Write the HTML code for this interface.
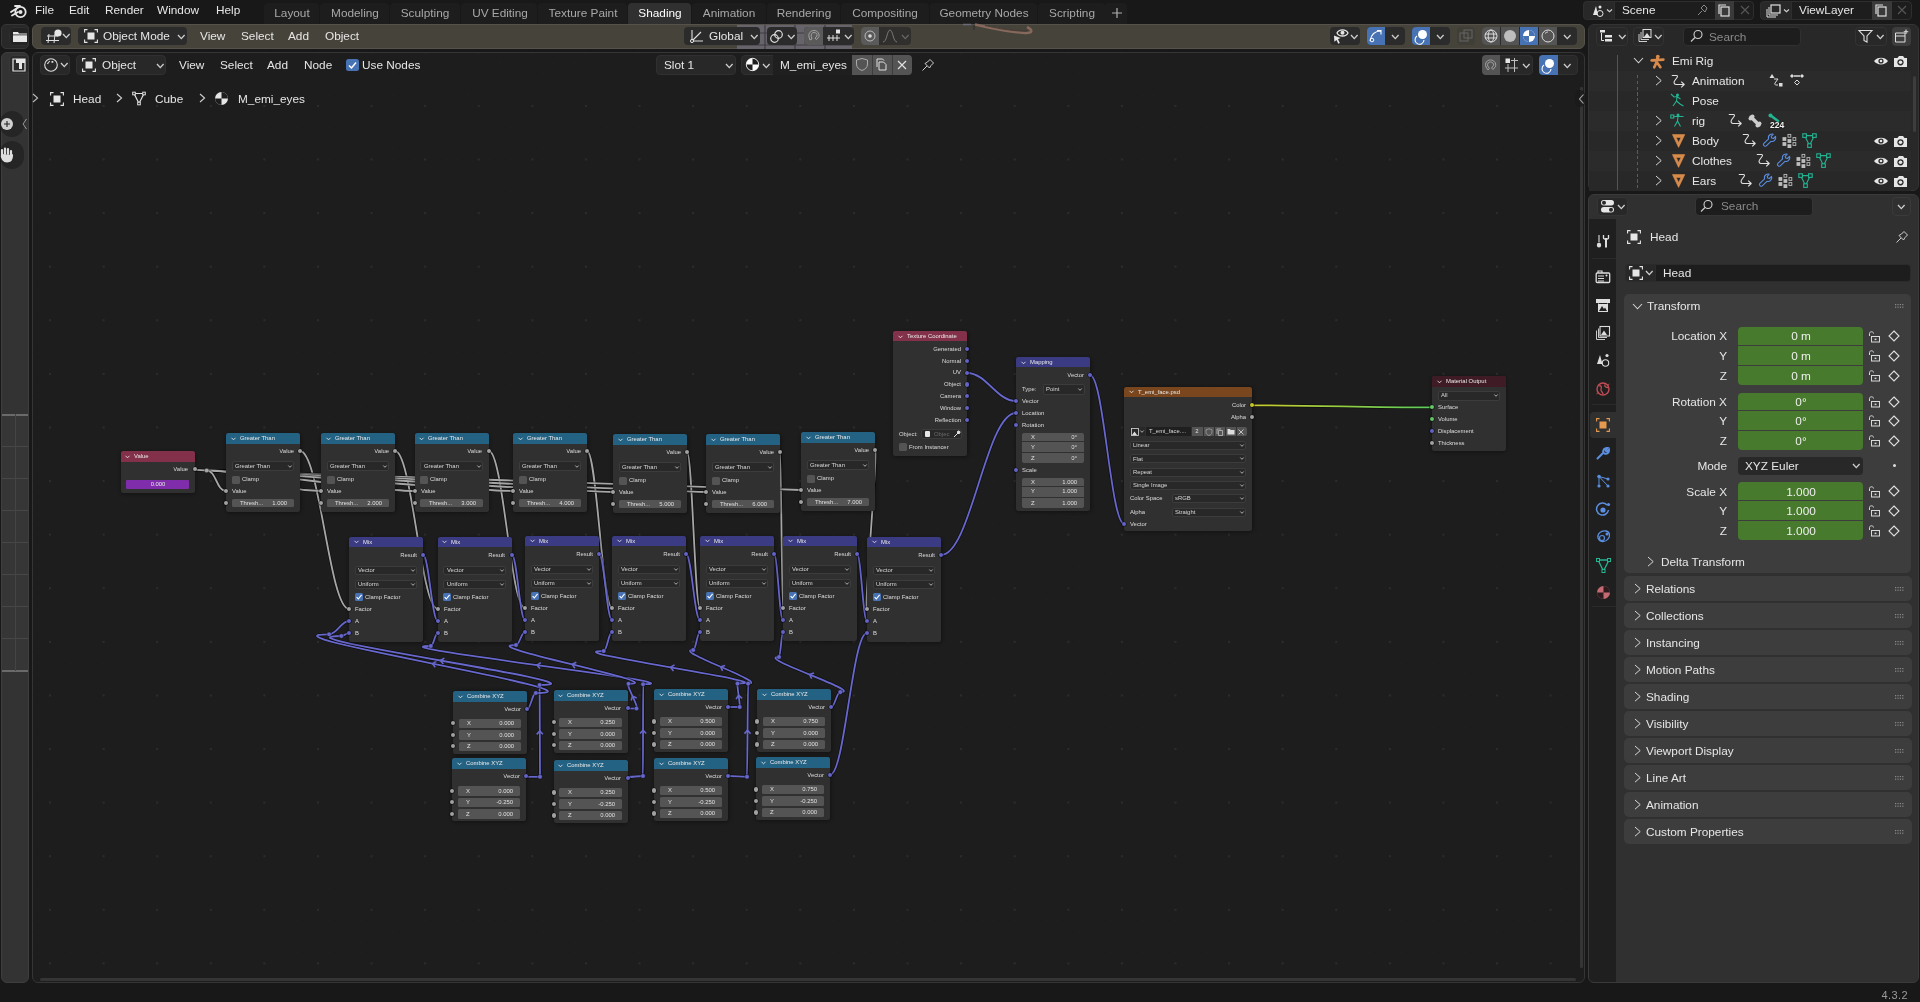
<!DOCTYPE html><html><head><meta charset="utf-8"><style>
*{box-sizing:border-box;margin:0;padding:0}
html,body{width:1920px;height:1002px;overflow:hidden;background:#181818;font-family:"Liberation Sans",sans-serif;color:#e6e6e6;position:relative}
.a{position:absolute}
.t{position:absolute;white-space:nowrap;line-height:1;will-change:transform}
svg{position:absolute;overflow:visible}
</style></head><body>
<svg style="left:10px;top:3px;" width="18" height="17" viewBox="0 0 18 17"><circle cx="10.5" cy="9" r="5.2" fill="none" stroke="#e6e6e6" stroke-width="1.8"/><circle cx="10.5" cy="9" r="2" fill="#e6e6e6"/><path d="M1 9 L8 4.5 M2 12.5 L8 9 M5 3 L10 3" stroke="#e6e6e6" stroke-width="1.8" stroke-linecap="round"/></svg>
<div class="t" style="left:35.30px;top:5.41px;font-size:11.8px;color:#e6e6e6;">File</div>
<div class="t" style="left:69.00px;top:5.41px;font-size:11.8px;color:#e6e6e6;">Edit</div>
<div class="t" style="left:105.00px;top:5.41px;font-size:11.8px;color:#e6e6e6;">Render</div>
<div class="t" style="left:157.00px;top:5.41px;font-size:11.8px;color:#e6e6e6;">Window</div>
<div class="t" style="left:216.00px;top:5.41px;font-size:11.8px;color:#e6e6e6;">Help</div>
<div class="a" style="left:263.9px;top:3px;width:54.7px;height:21px;background:#1d1d1d;border-radius:4px;border-bottom-left-radius:0;border-bottom-right-radius:0"></div>
<div class="t" style="left:291.75px;top:8.21px;font-size:11.8px;color:#a8a8a8;transform:translateX(-50%);">Layout</div>
<div class="a" style="left:319.7px;top:3px;width:68.9px;height:21px;background:#1d1d1d;border-radius:4px;border-bottom-left-radius:0;border-bottom-right-radius:0"></div>
<div class="t" style="left:354.65px;top:8.21px;font-size:11.8px;color:#a8a8a8;transform:translateX(-50%);">Modeling</div>
<div class="a" style="left:390.1px;top:3px;width:69.6px;height:21px;background:#1d1d1d;border-radius:4px;border-bottom-left-radius:0;border-bottom-right-radius:0"></div>
<div class="t" style="left:425.40px;top:8.21px;font-size:11.8px;color:#a8a8a8;transform:translateX(-50%);">Sculpting</div>
<div class="a" style="left:461.2px;top:3px;width:75.8px;height:21px;background:#1d1d1d;border-radius:4px;border-bottom-left-radius:0;border-bottom-right-radius:0"></div>
<div class="t" style="left:499.60px;top:8.21px;font-size:11.8px;color:#a8a8a8;transform:translateX(-50%);">UV Editing</div>
<div class="a" style="left:538.2px;top:3px;width:88.9px;height:21px;background:#1d1d1d;border-radius:4px;border-bottom-left-radius:0;border-bottom-right-radius:0"></div>
<div class="t" style="left:583.15px;top:8.21px;font-size:11.8px;color:#a8a8a8;transform:translateX(-50%);">Texture Paint</div>
<div class="a" style="left:628.1px;top:3px;width:62.8px;height:21px;background:#303030;border-radius:4px;border-bottom-left-radius:0;border-bottom-right-radius:0"></div>
<div class="t" style="left:660.00px;top:8.21px;font-size:11.8px;color:#ffffff;transform:translateX(-50%);">Shading</div>
<div class="a" style="left:691.7px;top:3px;width:73.9px;height:21px;background:#1d1d1d;border-radius:4px;border-bottom-left-radius:0;border-bottom-right-radius:0"></div>
<div class="t" style="left:729.15px;top:8.21px;font-size:11.8px;color:#a8a8a8;transform:translateX(-50%);">Animation</div>
<div class="a" style="left:766.7px;top:3px;width:73.3px;height:21px;background:#1d1d1d;border-radius:4px;border-bottom-left-radius:0;border-bottom-right-radius:0"></div>
<div class="t" style="left:803.85px;top:8.21px;font-size:11.8px;color:#a8a8a8;transform:translateX(-50%);">Rendering</div>
<div class="a" style="left:840.7px;top:3px;width:88.3px;height:21px;background:#1d1d1d;border-radius:4px;border-bottom-left-radius:0;border-bottom-right-radius:0"></div>
<div class="t" style="left:885.35px;top:8.21px;font-size:11.8px;color:#a8a8a8;transform:translateX(-50%);">Compositing</div>
<div class="a" style="left:929.7px;top:3px;width:107.3px;height:21px;background:#1d1d1d;border-radius:4px;border-bottom-left-radius:0;border-bottom-right-radius:0"></div>
<div class="t" style="left:983.85px;top:8.21px;font-size:11.8px;color:#a8a8a8;transform:translateX(-50%);">Geometry Nodes</div>
<div class="a" style="left:1037.7px;top:3px;width:67.3px;height:21px;background:#1d1d1d;border-radius:4px;border-bottom-left-radius:0;border-bottom-right-radius:0"></div>
<div class="t" style="left:1071.85px;top:8.21px;font-size:11.8px;color:#a8a8a8;transform:translateX(-50%);">Scripting</div>
<div class="a" style="left:1105.4px;top:3px;width:22px;height:21px;background:#1d1d1d;border-radius:4px;border-bottom-left-radius:0;border-bottom-right-radius:0"></div>
<svg style="left:1110.7px;top:7px;" width="12" height="12" viewBox="0 0 12 12"><path d="M6 1 V11 M1 6 H11" stroke="#b0b0b0" stroke-width="1.2"/></svg>
<div class="a" style="left:1583px;top:1px;width:171px;height:19px;background:#1d1d1d;border-radius:4px;border:1px solid #2e2e2e"></div>
<div class="a" style="left:1583px;top:1px;width:32px;height:19px;background:#282828;border-radius:4px;border:1px solid #2e2e2e;border-top-right-radius:0;border-bottom-right-radius:0"></div>
<svg style="left:1590px;top:3px;" width="20" height="15" viewBox="0 0 20 15"><path d="M3 12 L6 3 L8 12 Z" fill="#e6e6e6"/><circle cx="10" cy="4" r="1.5" fill="#e6e6e6"/><circle cx="10" cy="10.5" r="3" fill="none" stroke="#e6e6e6" stroke-width="1"/></svg>
<svg style="left:1605.5px;top:7.5px;" width="7.0" height="5.0" viewBox="0 0 7.0 5.0"><path d="M1 1.5 L3.5 3.75 L6.0 1.5" fill="none" stroke="#d0d0d0" stroke-width="1.1"/></svg>
<div class="t" style="left:1622.00px;top:5.41px;font-size:11.8px;color:#e6e6e6;">Scene</div>
<svg style="left:1696px;top:3px;" width="14" height="14" viewBox="0 0 14 14"><path d="M2 12 L6 8 M5 5 L9 9 L11 5 L8 2 Z" stroke="#888" fill="none" stroke-width="1"/></svg>
<div class="a" style="left:1715px;top:1px;width:19px;height:19px;background:#3a3a3a;border-radius:0px;"></div>
<svg style="left:1717px;top:3px;" width="15" height="15" viewBox="0 0 15 15"><rect x="4" y="4" width="8" height="9" fill="none" stroke="#e0e0e0" stroke-width="1.2"/><path d="M2 11 V2 H9" fill="none" stroke="#e0e0e0" stroke-width="1.2"/></svg>
<svg style="left:1740px;top:5px;" width="10" height="10" viewBox="0 0 10 10"><path d="M1 1 L9 9 M9 1 L1 9" stroke="#555" stroke-width="1.2"/></svg>
<div class="a" style="left:1760px;top:1px;width:152px;height:19px;background:#1d1d1d;border-radius:4px;border:1px solid #2e2e2e"></div>
<div class="a" style="left:1760px;top:1px;width:32px;height:19px;background:#282828;border-radius:4px;border:1px solid #2e2e2e;border-top-right-radius:0;border-bottom-right-radius:0"></div>
<svg style="left:1765px;top:3px;" width="18" height="15" viewBox="0 0 18 15"><rect x="6" y="2" width="9" height="8" fill="none" stroke="#e0e0e0" stroke-width="1.2"/><path d="M4 4 V12 H13 M2 6 V14 H11" fill="none" stroke="#e0e0e0" stroke-width="1"/></svg>
<svg style="left:1782.5px;top:7.5px;" width="7.0" height="5.0" viewBox="0 0 7.0 5.0"><path d="M1 1.5 L3.5 3.75 L6.0 1.5" fill="none" stroke="#d0d0d0" stroke-width="1.1"/></svg>
<div class="t" style="left:1799.00px;top:5.41px;font-size:11.8px;color:#e6e6e6;">ViewLayer</div>
<div class="a" style="left:1872px;top:1px;width:20px;height:19px;background:#3a3a3a;border-radius:0px;"></div>
<svg style="left:1874px;top:3px;" width="15" height="15" viewBox="0 0 15 15"><rect x="4" y="4" width="8" height="9" fill="none" stroke="#e0e0e0" stroke-width="1.2"/><path d="M2 11 V2 H9" fill="none" stroke="#e0e0e0" stroke-width="1.2"/></svg>
<svg style="left:1897px;top:5px;" width="10" height="10" viewBox="0 0 10 10"><path d="M1 1 L9 9 M9 1 L1 9" stroke="#555" stroke-width="1.2"/></svg>
<div class="a" style="left:1px;top:24px;width:28px;height:25px;background:#282828;border-radius:5px;border:1px solid #363636"></div>
<div class="a" style="left:9px;top:27px;width:20px;height:19px;background:#232323;border-radius:4px;border:1px solid #2e2e2e"></div>
<svg style="left:12px;top:29px;" width="16" height="15" viewBox="0 0 16 15"><path d="M1 3 H6 L7 4.5 H15 V13 H1 Z" fill="#e6e6e6"/><rect x="1" y="5.5" width="14" height="0.8" fill="#232323"/></svg>
<div class="a" style="left:32px;top:24px;width:1553px;height:25px;background:#46443a;border-radius:6px;border:1px solid #54524a"></div>
<div class="a" style="left:1px;top:52px;width:28px;height:931px;background:#333333;border-radius:6px;border:1px solid #3e3e3e"></div>
<div class="a" style="left:9px;top:55px;width:20px;height:19px;background:#2a2a2a;border-radius:4px;border:1px solid #383838"></div>
<svg style="left:11px;top:57px;" width="16" height="15" viewBox="0 0 16 15"><path d="M2 2 H14 V14 H2 Z" fill="none" stroke="#e6e6e6" stroke-width="1.2"/><path d="M5 2 H14 V6 H11 V12 H8 V6 H5 Z" fill="#e6e6e6"/></svg>
<div class="a" style="left:32px;top:52px;width:1553px;height:931px;background:#1d1d1d;border-radius:6px;border:1px solid #353535;background-image:radial-gradient(circle at 50% 50%, #2c2c2c 0.9px, rgba(0,0,0,0) 1.4px),radial-gradient(circle at 50% 50%, #222222 0.5px, rgba(0,0,0,0) 0.9px);background-size:53.6px 53.6px,10.72px 10.72px;background-position:-9.8px -27.5px,0.92px -6.06px"></div>
<div class="a" style="left:1588px;top:24px;width:331px;height:167px;background:#282828;border-radius:6px;border:1px solid #333"></div>
<div class="a" style="left:1588px;top:194px;width:331px;height:789px;background:#303030;border-radius:6px;border:1px solid #3a3a3a"></div>
<div class="t" style="left:1908.00px;top:989.69px;font-size:11px;color:#9a9a9a;transform:translateX(-100%);letter-spacing:0.4px">4.3.2</div>
<div class="a" style="left:32px;top:52px;width:1553px;height:931px;overflow:hidden;border-radius:6px"><div class="a" style="left:-32px;top:-52px;width:1920px;height:1002px">
<svg style="left:0;top:0" width="1920" height="1002" viewBox="0 0 1920 1002"><path d="M300.00 451.00 C319.60 451.00 329.40 609.00 349.00 609.00" fill="none" stroke="rgba(0,0,0,0.55)" stroke-width="3.2"/><path d="M300.00 451.00 C319.60 451.00 329.40 609.00 349.00 609.00" fill="none" stroke="#a6a6a6" stroke-width="1.8"/><path d="M395.00 451.00 C412.12 451.00 420.68 609.00 437.80 609.00" fill="none" stroke="rgba(0,0,0,0.55)" stroke-width="3.2"/><path d="M395.00 451.00 C412.12 451.00 420.68 609.00 437.80 609.00" fill="none" stroke="#a6a6a6" stroke-width="1.8"/><path d="M488.80 451.00 C503.28 451.00 510.52 608.00 525.00 608.00" fill="none" stroke="rgba(0,0,0,0.55)" stroke-width="3.2"/><path d="M488.80 451.00 C503.28 451.00 510.52 608.00 525.00 608.00" fill="none" stroke="#a6a6a6" stroke-width="1.8"/><path d="M587.00 451.00 C597.00 451.00 602.00 608.00 612.00 608.00" fill="none" stroke="rgba(0,0,0,0.55)" stroke-width="3.2"/><path d="M587.00 451.00 C597.00 451.00 602.00 608.00 612.00 608.00" fill="none" stroke="#a6a6a6" stroke-width="1.8"/><path d="M687.00 452.00 C692.20 452.00 694.80 608.00 700.00 608.00" fill="none" stroke="rgba(0,0,0,0.55)" stroke-width="3.2"/><path d="M687.00 452.00 C692.20 452.00 694.80 608.00 700.00 608.00" fill="none" stroke="#a6a6a6" stroke-width="1.8"/><path d="M780.00 452.00 C781.20 452.00 781.80 608.00 783.00 608.00" fill="none" stroke="rgba(0,0,0,0.55)" stroke-width="3.2"/><path d="M780.00 452.00 C781.20 452.00 781.80 608.00 783.00 608.00" fill="none" stroke="#a6a6a6" stroke-width="1.8"/><path d="M875.00 450.00 C878.20 450.00 863.80 609.00 867.00 609.00" fill="none" stroke="rgba(0,0,0,0.55)" stroke-width="3.2"/><path d="M875.00 450.00 C878.20 450.00 863.80 609.00 867.00 609.00" fill="none" stroke="#a6a6a6" stroke-width="1.8"/><path d="M195.20 469.80 C199.80 469.80 202.10 470.50 206.70 470.50" fill="none" stroke="rgba(0,0,0,0.55)" stroke-width="3.2"/><path d="M195.20 469.80 C199.80 469.80 202.10 470.50 206.70 470.50" fill="none" stroke="#a6a6a6" stroke-width="1.8"/><path d="M206.70 470.50 C251.70 470.50 756.00 490.00 801.00 490.00" fill="none" stroke="rgba(0,0,0,0.55)" stroke-width="3.2"/><path d="M206.70 470.50 C251.70 470.50 756.00 490.00 801.00 490.00" fill="none" stroke="#a6a6a6" stroke-width="1.8"/><path d="M206.70 470.50 C251.70 470.50 661.00 492.00 706.00 492.00" fill="none" stroke="rgba(0,0,0,0.55)" stroke-width="3.2"/><path d="M206.70 470.50 C251.70 470.50 661.00 492.00 706.00 492.00" fill="none" stroke="#a6a6a6" stroke-width="1.8"/><path d="M206.70 470.50 C251.70 470.50 568.00 492.00 613.00 492.00" fill="none" stroke="rgba(0,0,0,0.55)" stroke-width="3.2"/><path d="M206.70 470.50 C251.70 470.50 568.00 492.00 613.00 492.00" fill="none" stroke="#a6a6a6" stroke-width="1.8"/><path d="M206.70 470.50 C251.70 470.50 468.00 491.00 513.00 491.00" fill="none" stroke="rgba(0,0,0,0.55)" stroke-width="3.2"/><path d="M206.70 470.50 C251.70 470.50 468.00 491.00 513.00 491.00" fill="none" stroke="#a6a6a6" stroke-width="1.8"/><path d="M206.70 470.50 C251.70 470.50 369.80 491.00 414.80 491.00" fill="none" stroke="rgba(0,0,0,0.55)" stroke-width="3.2"/><path d="M206.70 470.50 C251.70 470.50 369.80 491.00 414.80 491.00" fill="none" stroke="#a6a6a6" stroke-width="1.8"/><path d="M206.70 470.50 C251.70 470.50 276.00 491.00 321.00 491.00" fill="none" stroke="rgba(0,0,0,0.55)" stroke-width="3.2"/><path d="M206.70 470.50 C251.70 470.50 276.00 491.00 321.00 491.00" fill="none" stroke="#a6a6a6" stroke-width="1.8"/><path d="M206.70 470.50 C216.35 470.50 216.35 491.00 226.00 491.00" fill="none" stroke="rgba(0,0,0,0.55)" stroke-width="3.2"/><path d="M206.70 470.50 C216.35 470.50 216.35 491.00 226.00 491.00" fill="none" stroke="#a6a6a6" stroke-width="1.8"/><path d="M423.00 555.00 C428.92 555.00 431.88 621.00 437.80 621.00" fill="none" stroke="rgba(0,0,0,0.55)" stroke-width="3.2"/><path d="M423.00 555.00 C428.92 555.00 431.88 621.00 437.80 621.00" fill="none" stroke="#6767cc" stroke-width="1.8"/><path d="M511.80 555.00 C517.08 555.00 519.72 620.00 525.00 620.00" fill="none" stroke="rgba(0,0,0,0.55)" stroke-width="3.2"/><path d="M511.80 555.00 C517.08 555.00 519.72 620.00 525.00 620.00" fill="none" stroke="#6767cc" stroke-width="1.8"/><path d="M599.00 554.00 C604.20 554.00 606.80 620.00 612.00 620.00" fill="none" stroke="rgba(0,0,0,0.55)" stroke-width="3.2"/><path d="M599.00 554.00 C604.20 554.00 606.80 620.00 612.00 620.00" fill="none" stroke="#6767cc" stroke-width="1.8"/><path d="M686.00 554.00 C691.60 554.00 694.40 620.00 700.00 620.00" fill="none" stroke="rgba(0,0,0,0.55)" stroke-width="3.2"/><path d="M686.00 554.00 C691.60 554.00 694.40 620.00 700.00 620.00" fill="none" stroke="#6767cc" stroke-width="1.8"/><path d="M774.00 554.00 C777.60 554.00 779.40 620.00 783.00 620.00" fill="none" stroke="rgba(0,0,0,0.55)" stroke-width="3.2"/><path d="M774.00 554.00 C777.60 554.00 779.40 620.00 783.00 620.00" fill="none" stroke="#6767cc" stroke-width="1.8"/><path d="M857.00 554.00 C861.00 554.00 863.00 621.00 867.00 621.00" fill="none" stroke="rgba(0,0,0,0.55)" stroke-width="3.2"/><path d="M857.00 554.00 C861.00 554.00 863.00 621.00 867.00 621.00" fill="none" stroke="#6767cc" stroke-width="1.8"/><path d="M941.00 555.00 C971.00 555.00 986.00 413.00 1016.00 413.00" fill="none" stroke="rgba(0,0,0,0.55)" stroke-width="3.2"/><path d="M941.00 555.00 C971.00 555.00 986.00 413.00 1016.00 413.00" fill="none" stroke="#6767cc" stroke-width="1.8"/><path d="M967.00 373.00 C986.60 373.00 996.40 401.00 1016.00 401.00" fill="none" stroke="rgba(0,0,0,0.55)" stroke-width="3.2"/><path d="M967.00 373.00 C986.60 373.00 996.40 401.00 1016.00 401.00" fill="none" stroke="#6767cc" stroke-width="1.8"/><path d="M1090.00 375.00 C1103.72 375.00 1110.58 524.00 1124.30 524.00" fill="none" stroke="rgba(0,0,0,0.55)" stroke-width="3.2"/><path d="M1090.00 375.00 C1103.72 375.00 1110.58 524.00 1124.30 524.00" fill="none" stroke="#6767cc" stroke-width="1.8"/><defs><linearGradient id="cg" x1="1252" y1="0" x2="1432" y2="0" gradientUnits="userSpaceOnUse"><stop offset="0" stop-color="#cccc2e"/><stop offset="1" stop-color="#5ccc5c"/></linearGradient></defs><path d="M1252.30 405.30 C1324.26 405.30 1360.24 407.40 1432.20 407.40" fill="none" stroke="rgba(0,0,0,0.55)" stroke-width="3.2"/><path d="M1252.30 405.30 C1324.26 405.30 1360.24 407.40 1432.20 407.40" fill="none" stroke="url(#cg)" stroke-width="1.8"/><path d="M329.10 634.30 C337.06 634.30 341.04 621.00 349.00 621.00" fill="none" stroke="rgba(0,0,0,0.55)" stroke-width="3.2"/><path d="M329.10 634.30 C337.06 634.30 341.04 621.00 349.00 621.00" fill="none" stroke="#6767cc" stroke-width="1.8"/><path d="M341.30 636.00 C344.38 636.00 345.92 633.00 349.00 633.00" fill="none" stroke="rgba(0,0,0,0.55)" stroke-width="3.2"/><path d="M341.30 636.00 C344.38 636.00 345.92 633.00 349.00 633.00" fill="none" stroke="#6767cc" stroke-width="1.8"/><path d="M527.00 709.50 C530.52 709.50 532.28 693.00 535.80 693.00" fill="none" stroke="rgba(0,0,0,0.55)" stroke-width="3.2"/><path d="M527.00 709.50 C530.52 709.50 532.28 693.00 535.80 693.00" fill="none" stroke="#6767cc" stroke-width="1.8"/><path d="M526.00 776.80 C531.60 776.80 534.40 776.80 540.00 776.80" fill="none" stroke="rgba(0,0,0,0.55)" stroke-width="3.2"/><path d="M526.00 776.80 C531.60 776.80 534.40 776.80 540.00 776.80" fill="none" stroke="#6767cc" stroke-width="1.8"/><path d="M540.00 776.80 C540.16 776.80 539.44 685.00 539.60 685.00" fill="none" stroke="rgba(0,0,0,0.55)" stroke-width="3.2"/><path d="M540.00 776.80 C540.16 776.80 539.44 685.00 539.60 685.00" fill="none" stroke="#6767cc" stroke-width="1.8"/><path d="M542.85 734.34 L539.80 730.90 L536.79 734.38" fill="none" stroke="#6767cc" stroke-width="1.6"/><path d="M535.80 693.00 C618.48 693.00 246.42 634.30 329.10 634.30" fill="none" stroke="rgba(0,0,0,0.55)" stroke-width="3.2"/><path d="M535.80 693.00 C618.48 693.00 246.42 634.30 329.10 634.30" fill="none" stroke="#6767cc" stroke-width="1.8"/><path d="M436.44 661.36 L432.45 663.65 L435.24 667.31" fill="none" stroke="#6767cc" stroke-width="1.6"/><path d="M539.60 685.00 C618.92 685.00 261.98 636.00 341.30 636.00" fill="none" stroke="rgba(0,0,0,0.55)" stroke-width="3.2"/><path d="M539.60 685.00 C618.92 685.00 261.98 636.00 341.30 636.00" fill="none" stroke="#6767cc" stroke-width="1.8"/><path d="M444.38 658.11 L440.45 660.50 L443.33 664.09" fill="none" stroke="#6767cc" stroke-width="1.6"/><path d="M430.80 646.00 C433.60 646.00 435.00 633.00 437.80 633.00" fill="none" stroke="rgba(0,0,0,0.55)" stroke-width="3.2"/><path d="M430.80 646.00 C433.60 646.00 435.00 633.00 437.80 633.00" fill="none" stroke="#6767cc" stroke-width="1.8"/><path d="M516.00 645.00 C519.60 645.00 521.40 632.00 525.00 632.00" fill="none" stroke="rgba(0,0,0,0.55)" stroke-width="3.2"/><path d="M516.00 645.00 C519.60 645.00 521.40 632.00 525.00 632.00" fill="none" stroke="#6767cc" stroke-width="1.8"/><path d="M628.00 708.50 C631.40 708.50 633.10 708.50 636.50 708.50" fill="none" stroke="rgba(0,0,0,0.55)" stroke-width="3.2"/><path d="M628.00 708.50 C631.40 708.50 633.10 708.50 636.50 708.50" fill="none" stroke="#6767cc" stroke-width="1.8"/><path d="M636.50 708.50 C639.70 708.50 625.30 683.80 628.50 683.80" fill="none" stroke="rgba(0,0,0,0.55)" stroke-width="3.2"/><path d="M636.50 708.50 C639.70 708.50 625.30 683.80 628.50 683.80" fill="none" stroke="#6767cc" stroke-width="1.8"/><path d="M636.69 698.05 L632.50 696.15 L631.17 700.55" fill="none" stroke="#6767cc" stroke-width="1.6"/><path d="M628.00 777.00 C634.00 777.00 637.00 776.00 643.00 776.00" fill="none" stroke="rgba(0,0,0,0.55)" stroke-width="3.2"/><path d="M628.00 777.00 C634.00 777.00 637.00 776.00 643.00 776.00" fill="none" stroke="#6767cc" stroke-width="1.8"/><path d="M643.00 776.00 C643.04 776.00 643.06 684.20 643.10 684.20" fill="none" stroke="rgba(0,0,0,0.55)" stroke-width="3.2"/><path d="M643.00 776.00 C643.04 776.00 643.06 684.20 643.10 684.20" fill="none" stroke="#6767cc" stroke-width="1.8"/><path d="M646.08 733.56 L643.05 730.10 L640.01 733.56" fill="none" stroke="#6767cc" stroke-width="1.6"/><path d="M643.10 684.20 C706.79 684.20 367.11 646.00 430.80 646.00" fill="none" stroke="rgba(0,0,0,0.55)" stroke-width="3.2"/><path d="M643.10 684.20 C706.79 684.20 367.11 646.00 430.80 646.00" fill="none" stroke="#6767cc" stroke-width="1.8"/><path d="M540.79 662.57 L536.95 665.10 L539.96 668.58" fill="none" stroke="#6767cc" stroke-width="1.6"/><path d="M628.50 683.80 C673.50 683.80 471.00 645.00 516.00 645.00" fill="none" stroke="rgba(0,0,0,0.55)" stroke-width="3.2"/><path d="M628.50 683.80 C673.50 683.80 471.00 645.00 516.00 645.00" fill="none" stroke="#6767cc" stroke-width="1.8"/><path d="M576.33 662.28 L572.25 664.40 L574.88 668.17" fill="none" stroke="#6767cc" stroke-width="1.6"/><path d="M603.70 651.00 C607.02 651.00 608.68 632.00 612.00 632.00" fill="none" stroke="rgba(0,0,0,0.55)" stroke-width="3.2"/><path d="M603.70 651.00 C607.02 651.00 608.68 632.00 612.00 632.00" fill="none" stroke="#6767cc" stroke-width="1.8"/><path d="M693.20 650.00 C695.92 650.00 697.28 632.00 700.00 632.00" fill="none" stroke="rgba(0,0,0,0.55)" stroke-width="3.2"/><path d="M693.20 650.00 C695.92 650.00 697.28 632.00 700.00 632.00" fill="none" stroke="#6767cc" stroke-width="1.8"/><path d="M728.00 707.00 C732.68 707.00 735.02 707.00 739.70 707.00" fill="none" stroke="rgba(0,0,0,0.55)" stroke-width="3.2"/><path d="M728.00 707.00 C732.68 707.00 735.02 707.00 739.70 707.00" fill="none" stroke="#6767cc" stroke-width="1.8"/><path d="M739.70 707.00 C740.58 707.00 736.62 683.60 737.50 683.60" fill="none" stroke="rgba(0,0,0,0.55)" stroke-width="3.2"/><path d="M739.70 707.00 C740.58 707.00 736.62 683.60 737.50 683.60" fill="none" stroke="#6767cc" stroke-width="1.8"/><path d="M742.06 698.33 L738.60 695.30 L736.04 699.12" fill="none" stroke="#6767cc" stroke-width="1.6"/><path d="M728.00 776.00 C735.60 776.00 739.40 776.80 747.00 776.80" fill="none" stroke="rgba(0,0,0,0.55)" stroke-width="3.2"/><path d="M728.00 776.00 C735.60 776.00 739.40 776.80 747.00 776.80" fill="none" stroke="#6767cc" stroke-width="1.8"/><path d="M747.00 776.80 C747.44 776.80 747.66 683.60 748.10 683.60" fill="none" stroke="rgba(0,0,0,0.55)" stroke-width="3.2"/><path d="M747.00 776.80 C747.44 776.80 747.66 683.60 748.10 683.60" fill="none" stroke="#6767cc" stroke-width="1.8"/><path d="M750.56 733.68 L747.55 730.20 L744.49 733.64" fill="none" stroke="#6767cc" stroke-width="1.6"/><path d="M737.50 683.60 C791.02 683.60 550.18 651.00 603.70 651.00" fill="none" stroke="rgba(0,0,0,0.55)" stroke-width="3.2"/><path d="M737.50 683.60 C791.02 683.60 550.18 651.00 603.70 651.00" fill="none" stroke="#6767cc" stroke-width="1.8"/><path d="M674.53 664.90 L670.60 667.30 L673.49 670.88" fill="none" stroke="#6767cc" stroke-width="1.6"/><path d="M748.10 683.60 C770.06 683.60 671.24 650.00 693.20 650.00" fill="none" stroke="rgba(0,0,0,0.55)" stroke-width="3.2"/><path d="M748.10 683.60 C770.06 683.60 671.24 650.00 693.20 650.00" fill="none" stroke="#6767cc" stroke-width="1.8"/><path d="M725.03 665.41 L720.65 666.80 L722.60 670.96" fill="none" stroke="#6767cc" stroke-width="1.6"/><path d="M779.00 657.00 C780.60 657.00 781.40 632.00 783.00 632.00" fill="none" stroke="rgba(0,0,0,0.55)" stroke-width="3.2"/><path d="M779.00 657.00 C780.60 657.00 781.40 632.00 783.00 632.00" fill="none" stroke="#6767cc" stroke-width="1.8"/><path d="M831.00 707.40 C834.72 707.40 836.58 692.10 840.30 692.10" fill="none" stroke="rgba(0,0,0,0.55)" stroke-width="3.2"/><path d="M831.00 707.40 C834.72 707.40 836.58 692.10 840.30 692.10" fill="none" stroke="#6767cc" stroke-width="1.8"/><path d="M840.30 692.10 C864.82 692.10 754.48 657.00 779.00 657.00" fill="none" stroke="rgba(0,0,0,0.55)" stroke-width="3.2"/><path d="M840.30 692.10 C864.82 692.10 754.48 657.00 779.00 657.00" fill="none" stroke="#6767cc" stroke-width="1.8"/><path d="M814.00 673.05 L809.65 674.55 L811.70 678.67" fill="none" stroke="#6767cc" stroke-width="1.6"/><path d="M830.00 775.00 C844.80 775.00 852.20 633.00 867.00 633.00" fill="none" stroke="rgba(0,0,0,0.55)" stroke-width="3.2"/><path d="M830.00 775.00 C844.80 775.00 852.20 633.00 867.00 633.00" fill="none" stroke="#6767cc" stroke-width="1.8"/><circle cx="206.7" cy="470.5" r="2.3" fill="#a6a6a6" stroke="rgba(0,0,0,0.5)" stroke-width="0.7"/><circle cx="329.1" cy="634.3" r="2.3" fill="#6767cc" stroke="rgba(0,0,0,0.5)" stroke-width="0.7"/><circle cx="341.3" cy="636" r="2.3" fill="#6767cc" stroke="rgba(0,0,0,0.5)" stroke-width="0.7"/><circle cx="535.8" cy="693" r="2.3" fill="#6767cc" stroke="rgba(0,0,0,0.5)" stroke-width="0.7"/><circle cx="539.6" cy="685" r="2.3" fill="#6767cc" stroke="rgba(0,0,0,0.5)" stroke-width="0.7"/><circle cx="540" cy="776.8" r="2.3" fill="#6767cc" stroke="rgba(0,0,0,0.5)" stroke-width="0.7"/><circle cx="430.8" cy="646" r="2.3" fill="#6767cc" stroke="rgba(0,0,0,0.5)" stroke-width="0.7"/><circle cx="516" cy="645" r="2.3" fill="#6767cc" stroke="rgba(0,0,0,0.5)" stroke-width="0.7"/><circle cx="636.5" cy="708.5" r="2.3" fill="#6767cc" stroke="rgba(0,0,0,0.5)" stroke-width="0.7"/><circle cx="628.5" cy="683.8" r="2.3" fill="#6767cc" stroke="rgba(0,0,0,0.5)" stroke-width="0.7"/><circle cx="643.1" cy="684.2" r="2.3" fill="#6767cc" stroke="rgba(0,0,0,0.5)" stroke-width="0.7"/><circle cx="643" cy="776" r="2.3" fill="#6767cc" stroke="rgba(0,0,0,0.5)" stroke-width="0.7"/><circle cx="603.7" cy="651" r="2.3" fill="#6767cc" stroke="rgba(0,0,0,0.5)" stroke-width="0.7"/><circle cx="693.2" cy="650" r="2.3" fill="#6767cc" stroke="rgba(0,0,0,0.5)" stroke-width="0.7"/><circle cx="739.7" cy="707" r="2.3" fill="#6767cc" stroke="rgba(0,0,0,0.5)" stroke-width="0.7"/><circle cx="737.5" cy="683.6" r="2.3" fill="#6767cc" stroke="rgba(0,0,0,0.5)" stroke-width="0.7"/><circle cx="748.1" cy="683.6" r="2.3" fill="#6767cc" stroke="rgba(0,0,0,0.5)" stroke-width="0.7"/><circle cx="747" cy="776.8" r="2.3" fill="#6767cc" stroke="rgba(0,0,0,0.5)" stroke-width="0.7"/><circle cx="779" cy="657" r="2.3" fill="#6767cc" stroke="rgba(0,0,0,0.5)" stroke-width="0.7"/><circle cx="840.3" cy="692.1" r="2.3" fill="#6767cc" stroke="rgba(0,0,0,0.5)" stroke-width="0.7"/></svg>
<div class="a" style="left:119.60px;top:450.50px;width:76.70px;height:44.20px;background:rgba(0,0,0,0.25);border-radius:5px;filter:blur(1.5px)"></div>
<div class="a" style="left:120.60px;top:451.00px;width:74.20px;height:41.70px;background:#303030;border-radius:2.5px;"></div>
<div class="a" style="left:120.60px;top:451.00px;width:74.20px;height:10.60px;background:#83314a;border-radius:2.5px;border-bottom-left-radius:0;border-bottom-right-radius:0"></div>
<svg style="left:125.10px;top:454.70px" width="5" height="4"><path d="M0.5 0.8 L2.5 2.8 L4.5 0.8" fill="none" stroke="#e8e8e8" stroke-width="0.85"/></svg>
<div class="t" style="left:134.10px;top:453.86px;font-size:5.9px;color:#e8e8e8;">Value</div>
<div class="t" style="left:188.30px;top:466.76px;font-size:5.9px;color:#dcdcdc;transform:translateX(-100%);">Value</div>
<div class="a" style="left:126.00px;top:480.00px;width:63.20px;height:8.75px;background:#7f2dab;border-radius:1px;"></div>
<div class="t" style="left:157.70px;top:482.16px;font-size:5.9px;color:#e8e8e8;transform:translateX(-50%);">0.000</div>
<div class="a" style="left:225.00px;top:432.50px;width:76.50px;height:81.50px;background:rgba(0,0,0,0.25);border-radius:5px;filter:blur(1.5px)"></div>
<div class="a" style="left:226.00px;top:433.00px;width:74.00px;height:79.00px;background:#303030;border-radius:2.5px;"></div>
<div class="a" style="left:226.00px;top:433.00px;width:74.00px;height:10.60px;background:#246283;border-radius:2.5px;border-bottom-left-radius:0;border-bottom-right-radius:0"></div>
<svg style="left:230.50px;top:436.70px" width="5" height="4"><path d="M0.5 0.8 L2.5 2.8 L4.5 0.8" fill="none" stroke="#e8e8e8" stroke-width="0.85"/></svg>
<div class="t" style="left:239.50px;top:435.86px;font-size:5.9px;color:#e8e8e8;">Greater Than</div>
<div class="t" style="left:293.50px;top:448.76px;font-size:5.9px;color:#dcdcdc;transform:translateX(-100%);">Value</div>
<div class="a" style="left:231.60px;top:461.40px;width:62.80px;height:9.40px;background:#282828;border-radius:2px;border:0.8px solid #3c3c3c"></div>
<div class="t" style="left:235.10px;top:463.86px;font-size:5.9px;color:#d8d8d8;">Greater Than</div>
<svg style="left:287.90px;top:464.60px" width="4" height="3"><path d="M0.3 0.5 L2 2.3 L3.7 0.5" fill="none" stroke="#cfcfcf" stroke-width="0.8"/></svg>
<div class="a" style="left:231.60px;top:475.50px;width:8.00px;height:8.00px;background:#545454;border-radius:1.5px;"></div>
<div class="t" style="left:241.60px;top:477.46px;font-size:5.9px;color:#dcdcdc;">Clamp</div>
<div class="t" style="left:232.00px;top:488.76px;font-size:5.9px;color:#dcdcdc;">Value</div>
<div class="a" style="left:231.60px;top:499.00px;width:62.80px;height:8.40px;background:#545454;border-radius:1.5px;"></div>
<div class="t" style="left:240.39px;top:500.96px;font-size:5.9px;color:#e0e0e0;">Thresh...</div>
<div class="t" style="left:287.40px;top:500.96px;font-size:5.9px;color:#e0e0e0;transform:translateX(-100%);">1.000</div>
<div class="a" style="left:320.00px;top:432.50px;width:76.50px;height:81.50px;background:rgba(0,0,0,0.25);border-radius:5px;filter:blur(1.5px)"></div>
<div class="a" style="left:321.00px;top:433.00px;width:74.00px;height:79.00px;background:#303030;border-radius:2.5px;"></div>
<div class="a" style="left:321.00px;top:433.00px;width:74.00px;height:10.60px;background:#246283;border-radius:2.5px;border-bottom-left-radius:0;border-bottom-right-radius:0"></div>
<svg style="left:325.50px;top:436.70px" width="5" height="4"><path d="M0.5 0.8 L2.5 2.8 L4.5 0.8" fill="none" stroke="#e8e8e8" stroke-width="0.85"/></svg>
<div class="t" style="left:334.50px;top:435.86px;font-size:5.9px;color:#e8e8e8;">Greater Than</div>
<div class="t" style="left:388.50px;top:448.76px;font-size:5.9px;color:#dcdcdc;transform:translateX(-100%);">Value</div>
<div class="a" style="left:326.60px;top:461.40px;width:62.80px;height:9.40px;background:#282828;border-radius:2px;border:0.8px solid #3c3c3c"></div>
<div class="t" style="left:330.10px;top:463.86px;font-size:5.9px;color:#d8d8d8;">Greater Than</div>
<svg style="left:382.90px;top:464.60px" width="4" height="3"><path d="M0.3 0.5 L2 2.3 L3.7 0.5" fill="none" stroke="#cfcfcf" stroke-width="0.8"/></svg>
<div class="a" style="left:326.60px;top:475.50px;width:8.00px;height:8.00px;background:#545454;border-radius:1.5px;"></div>
<div class="t" style="left:336.60px;top:477.46px;font-size:5.9px;color:#dcdcdc;">Clamp</div>
<div class="t" style="left:327.00px;top:488.76px;font-size:5.9px;color:#dcdcdc;">Value</div>
<div class="a" style="left:326.60px;top:499.00px;width:62.80px;height:8.40px;background:#545454;border-radius:1.5px;"></div>
<div class="t" style="left:335.39px;top:500.96px;font-size:5.9px;color:#e0e0e0;">Thresh...</div>
<div class="t" style="left:382.40px;top:500.96px;font-size:5.9px;color:#e0e0e0;transform:translateX(-100%);">2.000</div>
<div class="a" style="left:413.80px;top:432.50px;width:76.50px;height:81.50px;background:rgba(0,0,0,0.25);border-radius:5px;filter:blur(1.5px)"></div>
<div class="a" style="left:414.80px;top:433.00px;width:74.00px;height:79.00px;background:#303030;border-radius:2.5px;"></div>
<div class="a" style="left:414.80px;top:433.00px;width:74.00px;height:10.60px;background:#246283;border-radius:2.5px;border-bottom-left-radius:0;border-bottom-right-radius:0"></div>
<svg style="left:419.30px;top:436.70px" width="5" height="4"><path d="M0.5 0.8 L2.5 2.8 L4.5 0.8" fill="none" stroke="#e8e8e8" stroke-width="0.85"/></svg>
<div class="t" style="left:428.30px;top:435.86px;font-size:5.9px;color:#e8e8e8;">Greater Than</div>
<div class="t" style="left:482.30px;top:448.76px;font-size:5.9px;color:#dcdcdc;transform:translateX(-100%);">Value</div>
<div class="a" style="left:420.40px;top:461.40px;width:62.80px;height:9.40px;background:#282828;border-radius:2px;border:0.8px solid #3c3c3c"></div>
<div class="t" style="left:423.90px;top:463.86px;font-size:5.9px;color:#d8d8d8;">Greater Than</div>
<svg style="left:476.70px;top:464.60px" width="4" height="3"><path d="M0.3 0.5 L2 2.3 L3.7 0.5" fill="none" stroke="#cfcfcf" stroke-width="0.8"/></svg>
<div class="a" style="left:420.40px;top:475.50px;width:8.00px;height:8.00px;background:#545454;border-radius:1.5px;"></div>
<div class="t" style="left:430.40px;top:477.46px;font-size:5.9px;color:#dcdcdc;">Clamp</div>
<div class="t" style="left:420.80px;top:488.76px;font-size:5.9px;color:#dcdcdc;">Value</div>
<div class="a" style="left:420.40px;top:499.00px;width:62.80px;height:8.40px;background:#545454;border-radius:1.5px;"></div>
<div class="t" style="left:429.19px;top:500.96px;font-size:5.9px;color:#e0e0e0;">Thresh...</div>
<div class="t" style="left:476.20px;top:500.96px;font-size:5.9px;color:#e0e0e0;transform:translateX(-100%);">3.000</div>
<div class="a" style="left:512.00px;top:432.50px;width:76.50px;height:81.50px;background:rgba(0,0,0,0.25);border-radius:5px;filter:blur(1.5px)"></div>
<div class="a" style="left:513.00px;top:433.00px;width:74.00px;height:79.00px;background:#303030;border-radius:2.5px;"></div>
<div class="a" style="left:513.00px;top:433.00px;width:74.00px;height:10.60px;background:#246283;border-radius:2.5px;border-bottom-left-radius:0;border-bottom-right-radius:0"></div>
<svg style="left:517.50px;top:436.70px" width="5" height="4"><path d="M0.5 0.8 L2.5 2.8 L4.5 0.8" fill="none" stroke="#e8e8e8" stroke-width="0.85"/></svg>
<div class="t" style="left:526.50px;top:435.86px;font-size:5.9px;color:#e8e8e8;">Greater Than</div>
<div class="t" style="left:580.50px;top:448.76px;font-size:5.9px;color:#dcdcdc;transform:translateX(-100%);">Value</div>
<div class="a" style="left:518.60px;top:461.40px;width:62.80px;height:9.40px;background:#282828;border-radius:2px;border:0.8px solid #3c3c3c"></div>
<div class="t" style="left:522.10px;top:463.86px;font-size:5.9px;color:#d8d8d8;">Greater Than</div>
<svg style="left:574.90px;top:464.60px" width="4" height="3"><path d="M0.3 0.5 L2 2.3 L3.7 0.5" fill="none" stroke="#cfcfcf" stroke-width="0.8"/></svg>
<div class="a" style="left:518.60px;top:475.50px;width:8.00px;height:8.00px;background:#545454;border-radius:1.5px;"></div>
<div class="t" style="left:528.60px;top:477.46px;font-size:5.9px;color:#dcdcdc;">Clamp</div>
<div class="t" style="left:519.00px;top:488.76px;font-size:5.9px;color:#dcdcdc;">Value</div>
<div class="a" style="left:518.60px;top:499.00px;width:62.80px;height:8.40px;background:#545454;border-radius:1.5px;"></div>
<div class="t" style="left:527.39px;top:500.96px;font-size:5.9px;color:#e0e0e0;">Thresh...</div>
<div class="t" style="left:574.40px;top:500.96px;font-size:5.9px;color:#e0e0e0;transform:translateX(-100%);">4.000</div>
<div class="a" style="left:612.00px;top:433.50px;width:76.50px;height:81.50px;background:rgba(0,0,0,0.25);border-radius:5px;filter:blur(1.5px)"></div>
<div class="a" style="left:613.00px;top:434.00px;width:74.00px;height:79.00px;background:#303030;border-radius:2.5px;"></div>
<div class="a" style="left:613.00px;top:434.00px;width:74.00px;height:10.60px;background:#246283;border-radius:2.5px;border-bottom-left-radius:0;border-bottom-right-radius:0"></div>
<svg style="left:617.50px;top:437.70px" width="5" height="4"><path d="M0.5 0.8 L2.5 2.8 L4.5 0.8" fill="none" stroke="#e8e8e8" stroke-width="0.85"/></svg>
<div class="t" style="left:626.50px;top:436.86px;font-size:5.9px;color:#e8e8e8;">Greater Than</div>
<div class="t" style="left:680.50px;top:449.76px;font-size:5.9px;color:#dcdcdc;transform:translateX(-100%);">Value</div>
<div class="a" style="left:618.60px;top:462.40px;width:62.80px;height:9.40px;background:#282828;border-radius:2px;border:0.8px solid #3c3c3c"></div>
<div class="t" style="left:622.10px;top:464.86px;font-size:5.9px;color:#d8d8d8;">Greater Than</div>
<svg style="left:674.90px;top:465.60px" width="4" height="3"><path d="M0.3 0.5 L2 2.3 L3.7 0.5" fill="none" stroke="#cfcfcf" stroke-width="0.8"/></svg>
<div class="a" style="left:618.60px;top:476.50px;width:8.00px;height:8.00px;background:#545454;border-radius:1.5px;"></div>
<div class="t" style="left:628.60px;top:478.46px;font-size:5.9px;color:#dcdcdc;">Clamp</div>
<div class="t" style="left:619.00px;top:489.76px;font-size:5.9px;color:#dcdcdc;">Value</div>
<div class="a" style="left:618.60px;top:500.00px;width:62.80px;height:8.40px;background:#545454;border-radius:1.5px;"></div>
<div class="t" style="left:627.39px;top:501.96px;font-size:5.9px;color:#e0e0e0;">Thresh...</div>
<div class="t" style="left:674.40px;top:501.96px;font-size:5.9px;color:#e0e0e0;transform:translateX(-100%);">5.000</div>
<div class="a" style="left:705.00px;top:433.50px;width:76.50px;height:81.50px;background:rgba(0,0,0,0.25);border-radius:5px;filter:blur(1.5px)"></div>
<div class="a" style="left:706.00px;top:434.00px;width:74.00px;height:79.00px;background:#303030;border-radius:2.5px;"></div>
<div class="a" style="left:706.00px;top:434.00px;width:74.00px;height:10.60px;background:#246283;border-radius:2.5px;border-bottom-left-radius:0;border-bottom-right-radius:0"></div>
<svg style="left:710.50px;top:437.70px" width="5" height="4"><path d="M0.5 0.8 L2.5 2.8 L4.5 0.8" fill="none" stroke="#e8e8e8" stroke-width="0.85"/></svg>
<div class="t" style="left:719.50px;top:436.86px;font-size:5.9px;color:#e8e8e8;">Greater Than</div>
<div class="t" style="left:773.50px;top:449.76px;font-size:5.9px;color:#dcdcdc;transform:translateX(-100%);">Value</div>
<div class="a" style="left:711.60px;top:462.40px;width:62.80px;height:9.40px;background:#282828;border-radius:2px;border:0.8px solid #3c3c3c"></div>
<div class="t" style="left:715.10px;top:464.86px;font-size:5.9px;color:#d8d8d8;">Greater Than</div>
<svg style="left:767.90px;top:465.60px" width="4" height="3"><path d="M0.3 0.5 L2 2.3 L3.7 0.5" fill="none" stroke="#cfcfcf" stroke-width="0.8"/></svg>
<div class="a" style="left:711.60px;top:476.50px;width:8.00px;height:8.00px;background:#545454;border-radius:1.5px;"></div>
<div class="t" style="left:721.60px;top:478.46px;font-size:5.9px;color:#dcdcdc;">Clamp</div>
<div class="t" style="left:712.00px;top:489.76px;font-size:5.9px;color:#dcdcdc;">Value</div>
<div class="a" style="left:711.60px;top:500.00px;width:62.80px;height:8.40px;background:#545454;border-radius:1.5px;"></div>
<div class="t" style="left:720.39px;top:501.96px;font-size:5.9px;color:#e0e0e0;">Thresh...</div>
<div class="t" style="left:767.40px;top:501.96px;font-size:5.9px;color:#e0e0e0;transform:translateX(-100%);">6.000</div>
<div class="a" style="left:800.00px;top:431.50px;width:76.50px;height:81.50px;background:rgba(0,0,0,0.25);border-radius:5px;filter:blur(1.5px)"></div>
<div class="a" style="left:801.00px;top:432.00px;width:74.00px;height:79.00px;background:#303030;border-radius:2.5px;"></div>
<div class="a" style="left:801.00px;top:432.00px;width:74.00px;height:10.60px;background:#246283;border-radius:2.5px;border-bottom-left-radius:0;border-bottom-right-radius:0"></div>
<svg style="left:805.50px;top:435.70px" width="5" height="4"><path d="M0.5 0.8 L2.5 2.8 L4.5 0.8" fill="none" stroke="#e8e8e8" stroke-width="0.85"/></svg>
<div class="t" style="left:814.50px;top:434.86px;font-size:5.9px;color:#e8e8e8;">Greater Than</div>
<div class="t" style="left:868.50px;top:447.76px;font-size:5.9px;color:#dcdcdc;transform:translateX(-100%);">Value</div>
<div class="a" style="left:806.60px;top:460.40px;width:62.80px;height:9.40px;background:#282828;border-radius:2px;border:0.8px solid #3c3c3c"></div>
<div class="t" style="left:810.10px;top:462.86px;font-size:5.9px;color:#d8d8d8;">Greater Than</div>
<svg style="left:862.90px;top:463.60px" width="4" height="3"><path d="M0.3 0.5 L2 2.3 L3.7 0.5" fill="none" stroke="#cfcfcf" stroke-width="0.8"/></svg>
<div class="a" style="left:806.60px;top:474.50px;width:8.00px;height:8.00px;background:#545454;border-radius:1.5px;"></div>
<div class="t" style="left:816.60px;top:476.46px;font-size:5.9px;color:#dcdcdc;">Clamp</div>
<div class="t" style="left:807.00px;top:487.76px;font-size:5.9px;color:#dcdcdc;">Value</div>
<div class="a" style="left:806.60px;top:498.00px;width:62.80px;height:8.40px;background:#545454;border-radius:1.5px;"></div>
<div class="t" style="left:815.39px;top:499.96px;font-size:5.9px;color:#e0e0e0;">Thresh...</div>
<div class="t" style="left:862.40px;top:499.96px;font-size:5.9px;color:#e0e0e0;transform:translateX(-100%);">7.000</div>
<div class="a" style="left:348.00px;top:536.50px;width:76.50px;height:107.00px;background:rgba(0,0,0,0.25);border-radius:5px;filter:blur(1.5px)"></div>
<div class="a" style="left:349.00px;top:537.00px;width:74.00px;height:104.50px;background:#303030;border-radius:2.5px;"></div>
<div class="a" style="left:349.00px;top:537.00px;width:74.00px;height:10.00px;background:#3b3b83;border-radius:2.5px;border-bottom-left-radius:0;border-bottom-right-radius:0"></div>
<svg style="left:353.50px;top:540.40px" width="5" height="4"><path d="M0.5 0.8 L2.5 2.8 L4.5 0.8" fill="none" stroke="#e8e8e8" stroke-width="0.85"/></svg>
<div class="t" style="left:362.50px;top:539.56px;font-size:5.9px;color:#e8e8e8;">Mix</div>
<div class="t" style="left:416.50px;top:552.76px;font-size:5.9px;color:#dcdcdc;transform:translateX(-100%);">Result</div>
<div class="a" style="left:354.60px;top:565.80px;width:62.80px;height:9.50px;background:#282828;border-radius:2px;border:0.8px solid #3c3c3c"></div>
<div class="t" style="left:358.10px;top:568.31px;font-size:5.9px;color:#d8d8d8;">Vector</div>
<svg style="left:410.90px;top:569.05px" width="4" height="3"><path d="M0.3 0.5 L2 2.3 L3.7 0.5" fill="none" stroke="#cfcfcf" stroke-width="0.8"/></svg>
<div class="a" style="left:354.60px;top:579.70px;width:62.80px;height:9.00px;background:#282828;border-radius:2px;border:0.8px solid #3c3c3c"></div>
<div class="t" style="left:358.10px;top:581.96px;font-size:5.9px;color:#d8d8d8;">Uniform</div>
<svg style="left:410.90px;top:582.70px" width="4" height="3"><path d="M0.3 0.5 L2 2.3 L3.7 0.5" fill="none" stroke="#cfcfcf" stroke-width="0.8"/></svg>
<div class="a" style="left:354.60px;top:593.00px;width:8.00px;height:8.00px;background:#4772b3;border-radius:1.5px;"></div>
<svg style="left:354.6px;top:593px" width="8" height="8"><path d="M1.6 4.2 L3.3 6 L6.6 1.8" fill="none" stroke="#fff" stroke-width="1.1"/></svg>
<div class="t" style="left:364.60px;top:594.96px;font-size:5.9px;color:#dcdcdc;">Clamp Factor</div>
<div class="t" style="left:355.00px;top:606.76px;font-size:5.9px;color:#dcdcdc;">Factor</div>
<div class="t" style="left:355.00px;top:618.76px;font-size:5.9px;color:#dcdcdc;">A</div>
<div class="t" style="left:355.00px;top:630.76px;font-size:5.9px;color:#dcdcdc;">B</div>
<div class="a" style="left:436.80px;top:536.50px;width:76.50px;height:107.00px;background:rgba(0,0,0,0.25);border-radius:5px;filter:blur(1.5px)"></div>
<div class="a" style="left:437.80px;top:537.00px;width:74.00px;height:104.50px;background:#303030;border-radius:2.5px;"></div>
<div class="a" style="left:437.80px;top:537.00px;width:74.00px;height:10.00px;background:#3b3b83;border-radius:2.5px;border-bottom-left-radius:0;border-bottom-right-radius:0"></div>
<svg style="left:442.30px;top:540.40px" width="5" height="4"><path d="M0.5 0.8 L2.5 2.8 L4.5 0.8" fill="none" stroke="#e8e8e8" stroke-width="0.85"/></svg>
<div class="t" style="left:451.30px;top:539.56px;font-size:5.9px;color:#e8e8e8;">Mix</div>
<div class="t" style="left:505.30px;top:552.76px;font-size:5.9px;color:#dcdcdc;transform:translateX(-100%);">Result</div>
<div class="a" style="left:443.40px;top:565.80px;width:62.80px;height:9.50px;background:#282828;border-radius:2px;border:0.8px solid #3c3c3c"></div>
<div class="t" style="left:446.90px;top:568.31px;font-size:5.9px;color:#d8d8d8;">Vector</div>
<svg style="left:499.70px;top:569.05px" width="4" height="3"><path d="M0.3 0.5 L2 2.3 L3.7 0.5" fill="none" stroke="#cfcfcf" stroke-width="0.8"/></svg>
<div class="a" style="left:443.40px;top:579.70px;width:62.80px;height:9.00px;background:#282828;border-radius:2px;border:0.8px solid #3c3c3c"></div>
<div class="t" style="left:446.90px;top:581.96px;font-size:5.9px;color:#d8d8d8;">Uniform</div>
<svg style="left:499.70px;top:582.70px" width="4" height="3"><path d="M0.3 0.5 L2 2.3 L3.7 0.5" fill="none" stroke="#cfcfcf" stroke-width="0.8"/></svg>
<div class="a" style="left:443.40px;top:593.00px;width:8.00px;height:8.00px;background:#4772b3;border-radius:1.5px;"></div>
<svg style="left:443.40000000000003px;top:593px" width="8" height="8"><path d="M1.6 4.2 L3.3 6 L6.6 1.8" fill="none" stroke="#fff" stroke-width="1.1"/></svg>
<div class="t" style="left:453.40px;top:594.96px;font-size:5.9px;color:#dcdcdc;">Clamp Factor</div>
<div class="t" style="left:443.80px;top:606.76px;font-size:5.9px;color:#dcdcdc;">Factor</div>
<div class="t" style="left:443.80px;top:618.76px;font-size:5.9px;color:#dcdcdc;">A</div>
<div class="t" style="left:443.80px;top:630.76px;font-size:5.9px;color:#dcdcdc;">B</div>
<div class="a" style="left:524.00px;top:535.50px;width:76.50px;height:107.00px;background:rgba(0,0,0,0.25);border-radius:5px;filter:blur(1.5px)"></div>
<div class="a" style="left:525.00px;top:536.00px;width:74.00px;height:104.50px;background:#303030;border-radius:2.5px;"></div>
<div class="a" style="left:525.00px;top:536.00px;width:74.00px;height:10.00px;background:#3b3b83;border-radius:2.5px;border-bottom-left-radius:0;border-bottom-right-radius:0"></div>
<svg style="left:529.50px;top:539.40px" width="5" height="4"><path d="M0.5 0.8 L2.5 2.8 L4.5 0.8" fill="none" stroke="#e8e8e8" stroke-width="0.85"/></svg>
<div class="t" style="left:538.50px;top:538.56px;font-size:5.9px;color:#e8e8e8;">Mix</div>
<div class="t" style="left:592.50px;top:551.76px;font-size:5.9px;color:#dcdcdc;transform:translateX(-100%);">Result</div>
<div class="a" style="left:530.60px;top:564.80px;width:62.80px;height:9.50px;background:#282828;border-radius:2px;border:0.8px solid #3c3c3c"></div>
<div class="t" style="left:534.10px;top:567.31px;font-size:5.9px;color:#d8d8d8;">Vector</div>
<svg style="left:586.90px;top:568.05px" width="4" height="3"><path d="M0.3 0.5 L2 2.3 L3.7 0.5" fill="none" stroke="#cfcfcf" stroke-width="0.8"/></svg>
<div class="a" style="left:530.60px;top:578.70px;width:62.80px;height:9.00px;background:#282828;border-radius:2px;border:0.8px solid #3c3c3c"></div>
<div class="t" style="left:534.10px;top:580.96px;font-size:5.9px;color:#d8d8d8;">Uniform</div>
<svg style="left:586.90px;top:581.70px" width="4" height="3"><path d="M0.3 0.5 L2 2.3 L3.7 0.5" fill="none" stroke="#cfcfcf" stroke-width="0.8"/></svg>
<div class="a" style="left:530.60px;top:592.00px;width:8.00px;height:8.00px;background:#4772b3;border-radius:1.5px;"></div>
<svg style="left:530.6px;top:592px" width="8" height="8"><path d="M1.6 4.2 L3.3 6 L6.6 1.8" fill="none" stroke="#fff" stroke-width="1.1"/></svg>
<div class="t" style="left:540.60px;top:593.96px;font-size:5.9px;color:#dcdcdc;">Clamp Factor</div>
<div class="t" style="left:531.00px;top:605.76px;font-size:5.9px;color:#dcdcdc;">Factor</div>
<div class="t" style="left:531.00px;top:617.76px;font-size:5.9px;color:#dcdcdc;">A</div>
<div class="t" style="left:531.00px;top:629.76px;font-size:5.9px;color:#dcdcdc;">B</div>
<div class="a" style="left:611.00px;top:535.50px;width:76.50px;height:107.00px;background:rgba(0,0,0,0.25);border-radius:5px;filter:blur(1.5px)"></div>
<div class="a" style="left:612.00px;top:536.00px;width:74.00px;height:104.50px;background:#303030;border-radius:2.5px;"></div>
<div class="a" style="left:612.00px;top:536.00px;width:74.00px;height:10.00px;background:#3b3b83;border-radius:2.5px;border-bottom-left-radius:0;border-bottom-right-radius:0"></div>
<svg style="left:616.50px;top:539.40px" width="5" height="4"><path d="M0.5 0.8 L2.5 2.8 L4.5 0.8" fill="none" stroke="#e8e8e8" stroke-width="0.85"/></svg>
<div class="t" style="left:625.50px;top:538.56px;font-size:5.9px;color:#e8e8e8;">Mix</div>
<div class="t" style="left:679.50px;top:551.76px;font-size:5.9px;color:#dcdcdc;transform:translateX(-100%);">Result</div>
<div class="a" style="left:617.60px;top:564.80px;width:62.80px;height:9.50px;background:#282828;border-radius:2px;border:0.8px solid #3c3c3c"></div>
<div class="t" style="left:621.10px;top:567.31px;font-size:5.9px;color:#d8d8d8;">Vector</div>
<svg style="left:673.90px;top:568.05px" width="4" height="3"><path d="M0.3 0.5 L2 2.3 L3.7 0.5" fill="none" stroke="#cfcfcf" stroke-width="0.8"/></svg>
<div class="a" style="left:617.60px;top:578.70px;width:62.80px;height:9.00px;background:#282828;border-radius:2px;border:0.8px solid #3c3c3c"></div>
<div class="t" style="left:621.10px;top:580.96px;font-size:5.9px;color:#d8d8d8;">Uniform</div>
<svg style="left:673.90px;top:581.70px" width="4" height="3"><path d="M0.3 0.5 L2 2.3 L3.7 0.5" fill="none" stroke="#cfcfcf" stroke-width="0.8"/></svg>
<div class="a" style="left:617.60px;top:592.00px;width:8.00px;height:8.00px;background:#4772b3;border-radius:1.5px;"></div>
<svg style="left:617.6px;top:592px" width="8" height="8"><path d="M1.6 4.2 L3.3 6 L6.6 1.8" fill="none" stroke="#fff" stroke-width="1.1"/></svg>
<div class="t" style="left:627.60px;top:593.96px;font-size:5.9px;color:#dcdcdc;">Clamp Factor</div>
<div class="t" style="left:618.00px;top:605.76px;font-size:5.9px;color:#dcdcdc;">Factor</div>
<div class="t" style="left:618.00px;top:617.76px;font-size:5.9px;color:#dcdcdc;">A</div>
<div class="t" style="left:618.00px;top:629.76px;font-size:5.9px;color:#dcdcdc;">B</div>
<div class="a" style="left:699.00px;top:535.50px;width:76.50px;height:107.00px;background:rgba(0,0,0,0.25);border-radius:5px;filter:blur(1.5px)"></div>
<div class="a" style="left:700.00px;top:536.00px;width:74.00px;height:104.50px;background:#303030;border-radius:2.5px;"></div>
<div class="a" style="left:700.00px;top:536.00px;width:74.00px;height:10.00px;background:#3b3b83;border-radius:2.5px;border-bottom-left-radius:0;border-bottom-right-radius:0"></div>
<svg style="left:704.50px;top:539.40px" width="5" height="4"><path d="M0.5 0.8 L2.5 2.8 L4.5 0.8" fill="none" stroke="#e8e8e8" stroke-width="0.85"/></svg>
<div class="t" style="left:713.50px;top:538.56px;font-size:5.9px;color:#e8e8e8;">Mix</div>
<div class="t" style="left:767.50px;top:551.76px;font-size:5.9px;color:#dcdcdc;transform:translateX(-100%);">Result</div>
<div class="a" style="left:705.60px;top:564.80px;width:62.80px;height:9.50px;background:#282828;border-radius:2px;border:0.8px solid #3c3c3c"></div>
<div class="t" style="left:709.10px;top:567.31px;font-size:5.9px;color:#d8d8d8;">Vector</div>
<svg style="left:761.90px;top:568.05px" width="4" height="3"><path d="M0.3 0.5 L2 2.3 L3.7 0.5" fill="none" stroke="#cfcfcf" stroke-width="0.8"/></svg>
<div class="a" style="left:705.60px;top:578.70px;width:62.80px;height:9.00px;background:#282828;border-radius:2px;border:0.8px solid #3c3c3c"></div>
<div class="t" style="left:709.10px;top:580.96px;font-size:5.9px;color:#d8d8d8;">Uniform</div>
<svg style="left:761.90px;top:581.70px" width="4" height="3"><path d="M0.3 0.5 L2 2.3 L3.7 0.5" fill="none" stroke="#cfcfcf" stroke-width="0.8"/></svg>
<div class="a" style="left:705.60px;top:592.00px;width:8.00px;height:8.00px;background:#4772b3;border-radius:1.5px;"></div>
<svg style="left:705.6px;top:592px" width="8" height="8"><path d="M1.6 4.2 L3.3 6 L6.6 1.8" fill="none" stroke="#fff" stroke-width="1.1"/></svg>
<div class="t" style="left:715.60px;top:593.96px;font-size:5.9px;color:#dcdcdc;">Clamp Factor</div>
<div class="t" style="left:706.00px;top:605.76px;font-size:5.9px;color:#dcdcdc;">Factor</div>
<div class="t" style="left:706.00px;top:617.76px;font-size:5.9px;color:#dcdcdc;">A</div>
<div class="t" style="left:706.00px;top:629.76px;font-size:5.9px;color:#dcdcdc;">B</div>
<div class="a" style="left:782.00px;top:535.50px;width:76.50px;height:107.00px;background:rgba(0,0,0,0.25);border-radius:5px;filter:blur(1.5px)"></div>
<div class="a" style="left:783.00px;top:536.00px;width:74.00px;height:104.50px;background:#303030;border-radius:2.5px;"></div>
<div class="a" style="left:783.00px;top:536.00px;width:74.00px;height:10.00px;background:#3b3b83;border-radius:2.5px;border-bottom-left-radius:0;border-bottom-right-radius:0"></div>
<svg style="left:787.50px;top:539.40px" width="5" height="4"><path d="M0.5 0.8 L2.5 2.8 L4.5 0.8" fill="none" stroke="#e8e8e8" stroke-width="0.85"/></svg>
<div class="t" style="left:796.50px;top:538.56px;font-size:5.9px;color:#e8e8e8;">Mix</div>
<div class="t" style="left:850.50px;top:551.76px;font-size:5.9px;color:#dcdcdc;transform:translateX(-100%);">Result</div>
<div class="a" style="left:788.60px;top:564.80px;width:62.80px;height:9.50px;background:#282828;border-radius:2px;border:0.8px solid #3c3c3c"></div>
<div class="t" style="left:792.10px;top:567.31px;font-size:5.9px;color:#d8d8d8;">Vector</div>
<svg style="left:844.90px;top:568.05px" width="4" height="3"><path d="M0.3 0.5 L2 2.3 L3.7 0.5" fill="none" stroke="#cfcfcf" stroke-width="0.8"/></svg>
<div class="a" style="left:788.60px;top:578.70px;width:62.80px;height:9.00px;background:#282828;border-radius:2px;border:0.8px solid #3c3c3c"></div>
<div class="t" style="left:792.10px;top:580.96px;font-size:5.9px;color:#d8d8d8;">Uniform</div>
<svg style="left:844.90px;top:581.70px" width="4" height="3"><path d="M0.3 0.5 L2 2.3 L3.7 0.5" fill="none" stroke="#cfcfcf" stroke-width="0.8"/></svg>
<div class="a" style="left:788.60px;top:592.00px;width:8.00px;height:8.00px;background:#4772b3;border-radius:1.5px;"></div>
<svg style="left:788.6px;top:592px" width="8" height="8"><path d="M1.6 4.2 L3.3 6 L6.6 1.8" fill="none" stroke="#fff" stroke-width="1.1"/></svg>
<div class="t" style="left:798.60px;top:593.96px;font-size:5.9px;color:#dcdcdc;">Clamp Factor</div>
<div class="t" style="left:789.00px;top:605.76px;font-size:5.9px;color:#dcdcdc;">Factor</div>
<div class="t" style="left:789.00px;top:617.76px;font-size:5.9px;color:#dcdcdc;">A</div>
<div class="t" style="left:789.00px;top:629.76px;font-size:5.9px;color:#dcdcdc;">B</div>
<div class="a" style="left:866.00px;top:536.50px;width:76.50px;height:107.00px;background:rgba(0,0,0,0.25);border-radius:5px;filter:blur(1.5px)"></div>
<div class="a" style="left:867.00px;top:537.00px;width:74.00px;height:104.50px;background:#303030;border-radius:2.5px;"></div>
<div class="a" style="left:867.00px;top:537.00px;width:74.00px;height:10.00px;background:#3b3b83;border-radius:2.5px;border-bottom-left-radius:0;border-bottom-right-radius:0"></div>
<svg style="left:871.50px;top:540.40px" width="5" height="4"><path d="M0.5 0.8 L2.5 2.8 L4.5 0.8" fill="none" stroke="#e8e8e8" stroke-width="0.85"/></svg>
<div class="t" style="left:880.50px;top:539.56px;font-size:5.9px;color:#e8e8e8;">Mix</div>
<div class="t" style="left:934.50px;top:552.76px;font-size:5.9px;color:#dcdcdc;transform:translateX(-100%);">Result</div>
<div class="a" style="left:872.60px;top:565.80px;width:62.80px;height:9.50px;background:#282828;border-radius:2px;border:0.8px solid #3c3c3c"></div>
<div class="t" style="left:876.10px;top:568.31px;font-size:5.9px;color:#d8d8d8;">Vector</div>
<svg style="left:928.90px;top:569.05px" width="4" height="3"><path d="M0.3 0.5 L2 2.3 L3.7 0.5" fill="none" stroke="#cfcfcf" stroke-width="0.8"/></svg>
<div class="a" style="left:872.60px;top:579.70px;width:62.80px;height:9.00px;background:#282828;border-radius:2px;border:0.8px solid #3c3c3c"></div>
<div class="t" style="left:876.10px;top:581.96px;font-size:5.9px;color:#d8d8d8;">Uniform</div>
<svg style="left:928.90px;top:582.70px" width="4" height="3"><path d="M0.3 0.5 L2 2.3 L3.7 0.5" fill="none" stroke="#cfcfcf" stroke-width="0.8"/></svg>
<div class="a" style="left:872.60px;top:593.00px;width:8.00px;height:8.00px;background:#4772b3;border-radius:1.5px;"></div>
<svg style="left:872.6px;top:593px" width="8" height="8"><path d="M1.6 4.2 L3.3 6 L6.6 1.8" fill="none" stroke="#fff" stroke-width="1.1"/></svg>
<div class="t" style="left:882.60px;top:594.96px;font-size:5.9px;color:#dcdcdc;">Clamp Factor</div>
<div class="t" style="left:873.00px;top:606.76px;font-size:5.9px;color:#dcdcdc;">Factor</div>
<div class="t" style="left:873.00px;top:618.76px;font-size:5.9px;color:#dcdcdc;">A</div>
<div class="t" style="left:873.00px;top:630.76px;font-size:5.9px;color:#dcdcdc;">B</div>
<div class="a" style="left:452.00px;top:690.30px;width:76.50px;height:65.50px;background:rgba(0,0,0,0.25);border-radius:5px;filter:blur(1.5px)"></div>
<div class="a" style="left:453.00px;top:690.80px;width:74.00px;height:63.00px;background:#303030;border-radius:2.5px;"></div>
<div class="a" style="left:453.00px;top:690.80px;width:74.00px;height:11.00px;background:#246283;border-radius:2.5px;border-bottom-left-radius:0;border-bottom-right-radius:0"></div>
<svg style="left:457.50px;top:694.70px" width="5" height="4"><path d="M0.5 0.8 L2.5 2.8 L4.5 0.8" fill="none" stroke="#e8e8e8" stroke-width="0.85"/></svg>
<div class="t" style="left:466.50px;top:693.86px;font-size:5.9px;color:#e8e8e8;">Combine XYZ</div>
<div class="t" style="left:520.50px;top:706.56px;font-size:5.9px;color:#dcdcdc;transform:translateX(-100%);">Vector</div>
<div class="a" style="left:458.70px;top:718.50px;width:62.30px;height:9.50px;background:#545454;border-radius:1.5px;"></div>
<div class="t" style="left:467.42px;top:721.01px;font-size:5.9px;color:#e0e0e0;">X</div>
<div class="t" style="left:514.00px;top:721.01px;font-size:5.9px;color:#e0e0e0;transform:translateX(-100%);">0.000</div>
<div class="a" style="left:458.70px;top:730.00px;width:62.30px;height:9.50px;background:#545454;border-radius:1.5px;"></div>
<div class="t" style="left:467.42px;top:732.51px;font-size:5.9px;color:#e0e0e0;">Y</div>
<div class="t" style="left:514.00px;top:732.51px;font-size:5.9px;color:#e0e0e0;transform:translateX(-100%);">0.000</div>
<div class="a" style="left:458.70px;top:741.50px;width:62.30px;height:9.50px;background:#545454;border-radius:1.5px;"></div>
<div class="t" style="left:467.42px;top:744.01px;font-size:5.9px;color:#e0e0e0;">Z</div>
<div class="t" style="left:514.00px;top:744.01px;font-size:5.9px;color:#e0e0e0;transform:translateX(-100%);">0.000</div>
<div class="a" style="left:451.00px;top:757.80px;width:76.50px;height:65.50px;background:rgba(0,0,0,0.25);border-radius:5px;filter:blur(1.5px)"></div>
<div class="a" style="left:452.00px;top:758.30px;width:74.00px;height:63.00px;background:#303030;border-radius:2.5px;"></div>
<div class="a" style="left:452.00px;top:758.30px;width:74.00px;height:11.00px;background:#246283;border-radius:2.5px;border-bottom-left-radius:0;border-bottom-right-radius:0"></div>
<svg style="left:456.50px;top:762.20px" width="5" height="4"><path d="M0.5 0.8 L2.5 2.8 L4.5 0.8" fill="none" stroke="#e8e8e8" stroke-width="0.85"/></svg>
<div class="t" style="left:465.50px;top:761.36px;font-size:5.9px;color:#e8e8e8;">Combine XYZ</div>
<div class="t" style="left:519.50px;top:774.06px;font-size:5.9px;color:#dcdcdc;transform:translateX(-100%);">Vector</div>
<div class="a" style="left:457.70px;top:786.00px;width:62.30px;height:9.50px;background:#545454;border-radius:1.5px;"></div>
<div class="t" style="left:466.42px;top:788.51px;font-size:5.9px;color:#e0e0e0;">X</div>
<div class="t" style="left:513.00px;top:788.51px;font-size:5.9px;color:#e0e0e0;transform:translateX(-100%);">0.000</div>
<div class="a" style="left:457.70px;top:797.50px;width:62.30px;height:9.50px;background:#545454;border-radius:1.5px;"></div>
<div class="t" style="left:466.42px;top:800.01px;font-size:5.9px;color:#e0e0e0;">Y</div>
<div class="t" style="left:513.00px;top:800.01px;font-size:5.9px;color:#e0e0e0;transform:translateX(-100%);">-0.250</div>
<div class="a" style="left:457.70px;top:809.00px;width:62.30px;height:9.50px;background:#545454;border-radius:1.5px;"></div>
<div class="t" style="left:466.42px;top:811.51px;font-size:5.9px;color:#e0e0e0;">Z</div>
<div class="t" style="left:513.00px;top:811.51px;font-size:5.9px;color:#e0e0e0;transform:translateX(-100%);">0.000</div>
<div class="a" style="left:552.60px;top:689.30px;width:76.50px;height:65.50px;background:rgba(0,0,0,0.25);border-radius:5px;filter:blur(1.5px)"></div>
<div class="a" style="left:553.60px;top:689.80px;width:74.00px;height:63.00px;background:#303030;border-radius:2.5px;"></div>
<div class="a" style="left:553.60px;top:689.80px;width:74.00px;height:11.00px;background:#246283;border-radius:2.5px;border-bottom-left-radius:0;border-bottom-right-radius:0"></div>
<svg style="left:558.10px;top:693.70px" width="5" height="4"><path d="M0.5 0.8 L2.5 2.8 L4.5 0.8" fill="none" stroke="#e8e8e8" stroke-width="0.85"/></svg>
<div class="t" style="left:567.10px;top:692.86px;font-size:5.9px;color:#e8e8e8;">Combine XYZ</div>
<div class="t" style="left:621.10px;top:705.56px;font-size:5.9px;color:#dcdcdc;transform:translateX(-100%);">Vector</div>
<div class="a" style="left:559.30px;top:717.50px;width:62.30px;height:9.50px;background:#545454;border-radius:1.5px;"></div>
<div class="t" style="left:568.02px;top:720.01px;font-size:5.9px;color:#e0e0e0;">X</div>
<div class="t" style="left:614.60px;top:720.01px;font-size:5.9px;color:#e0e0e0;transform:translateX(-100%);">0.250</div>
<div class="a" style="left:559.30px;top:729.00px;width:62.30px;height:9.50px;background:#545454;border-radius:1.5px;"></div>
<div class="t" style="left:568.02px;top:731.51px;font-size:5.9px;color:#e0e0e0;">Y</div>
<div class="t" style="left:614.60px;top:731.51px;font-size:5.9px;color:#e0e0e0;transform:translateX(-100%);">0.000</div>
<div class="a" style="left:559.30px;top:740.50px;width:62.30px;height:9.50px;background:#545454;border-radius:1.5px;"></div>
<div class="t" style="left:568.02px;top:743.01px;font-size:5.9px;color:#e0e0e0;">Z</div>
<div class="t" style="left:614.60px;top:743.01px;font-size:5.9px;color:#e0e0e0;transform:translateX(-100%);">0.000</div>
<div class="a" style="left:552.60px;top:759.50px;width:76.50px;height:65.50px;background:rgba(0,0,0,0.25);border-radius:5px;filter:blur(1.5px)"></div>
<div class="a" style="left:553.60px;top:760.00px;width:74.00px;height:63.00px;background:#303030;border-radius:2.5px;"></div>
<div class="a" style="left:553.60px;top:760.00px;width:74.00px;height:11.00px;background:#246283;border-radius:2.5px;border-bottom-left-radius:0;border-bottom-right-radius:0"></div>
<svg style="left:558.10px;top:763.90px" width="5" height="4"><path d="M0.5 0.8 L2.5 2.8 L4.5 0.8" fill="none" stroke="#e8e8e8" stroke-width="0.85"/></svg>
<div class="t" style="left:567.10px;top:763.06px;font-size:5.9px;color:#e8e8e8;">Combine XYZ</div>
<div class="t" style="left:621.10px;top:775.76px;font-size:5.9px;color:#dcdcdc;transform:translateX(-100%);">Vector</div>
<div class="a" style="left:559.30px;top:787.70px;width:62.30px;height:9.50px;background:#545454;border-radius:1.5px;"></div>
<div class="t" style="left:568.02px;top:790.21px;font-size:5.9px;color:#e0e0e0;">X</div>
<div class="t" style="left:614.60px;top:790.21px;font-size:5.9px;color:#e0e0e0;transform:translateX(-100%);">0.250</div>
<div class="a" style="left:559.30px;top:799.20px;width:62.30px;height:9.50px;background:#545454;border-radius:1.5px;"></div>
<div class="t" style="left:568.02px;top:801.71px;font-size:5.9px;color:#e0e0e0;">Y</div>
<div class="t" style="left:614.60px;top:801.71px;font-size:5.9px;color:#e0e0e0;transform:translateX(-100%);">-0.250</div>
<div class="a" style="left:559.30px;top:810.70px;width:62.30px;height:9.50px;background:#545454;border-radius:1.5px;"></div>
<div class="t" style="left:568.02px;top:813.21px;font-size:5.9px;color:#e0e0e0;">Z</div>
<div class="t" style="left:614.60px;top:813.21px;font-size:5.9px;color:#e0e0e0;transform:translateX(-100%);">0.000</div>
<div class="a" style="left:653.00px;top:688.50px;width:76.50px;height:65.50px;background:rgba(0,0,0,0.25);border-radius:5px;filter:blur(1.5px)"></div>
<div class="a" style="left:654.00px;top:689.00px;width:74.00px;height:63.00px;background:#303030;border-radius:2.5px;"></div>
<div class="a" style="left:654.00px;top:689.00px;width:74.00px;height:11.00px;background:#246283;border-radius:2.5px;border-bottom-left-radius:0;border-bottom-right-radius:0"></div>
<svg style="left:658.50px;top:692.90px" width="5" height="4"><path d="M0.5 0.8 L2.5 2.8 L4.5 0.8" fill="none" stroke="#e8e8e8" stroke-width="0.85"/></svg>
<div class="t" style="left:667.50px;top:692.06px;font-size:5.9px;color:#e8e8e8;">Combine XYZ</div>
<div class="t" style="left:721.50px;top:704.76px;font-size:5.9px;color:#dcdcdc;transform:translateX(-100%);">Vector</div>
<div class="a" style="left:659.70px;top:716.70px;width:62.30px;height:9.50px;background:#545454;border-radius:1.5px;"></div>
<div class="t" style="left:668.42px;top:719.21px;font-size:5.9px;color:#e0e0e0;">X</div>
<div class="t" style="left:715.00px;top:719.21px;font-size:5.9px;color:#e0e0e0;transform:translateX(-100%);">0.500</div>
<div class="a" style="left:659.70px;top:728.20px;width:62.30px;height:9.50px;background:#545454;border-radius:1.5px;"></div>
<div class="t" style="left:668.42px;top:730.71px;font-size:5.9px;color:#e0e0e0;">Y</div>
<div class="t" style="left:715.00px;top:730.71px;font-size:5.9px;color:#e0e0e0;transform:translateX(-100%);">0.000</div>
<div class="a" style="left:659.70px;top:739.70px;width:62.30px;height:9.50px;background:#545454;border-radius:1.5px;"></div>
<div class="t" style="left:668.42px;top:742.21px;font-size:5.9px;color:#e0e0e0;">Z</div>
<div class="t" style="left:715.00px;top:742.21px;font-size:5.9px;color:#e0e0e0;transform:translateX(-100%);">0.000</div>
<div class="a" style="left:653.00px;top:757.50px;width:76.50px;height:65.50px;background:rgba(0,0,0,0.25);border-radius:5px;filter:blur(1.5px)"></div>
<div class="a" style="left:654.00px;top:758.00px;width:74.00px;height:63.00px;background:#303030;border-radius:2.5px;"></div>
<div class="a" style="left:654.00px;top:758.00px;width:74.00px;height:11.00px;background:#246283;border-radius:2.5px;border-bottom-left-radius:0;border-bottom-right-radius:0"></div>
<svg style="left:658.50px;top:761.90px" width="5" height="4"><path d="M0.5 0.8 L2.5 2.8 L4.5 0.8" fill="none" stroke="#e8e8e8" stroke-width="0.85"/></svg>
<div class="t" style="left:667.50px;top:761.06px;font-size:5.9px;color:#e8e8e8;">Combine XYZ</div>
<div class="t" style="left:721.50px;top:773.76px;font-size:5.9px;color:#dcdcdc;transform:translateX(-100%);">Vector</div>
<div class="a" style="left:659.70px;top:785.70px;width:62.30px;height:9.50px;background:#545454;border-radius:1.5px;"></div>
<div class="t" style="left:668.42px;top:788.21px;font-size:5.9px;color:#e0e0e0;">X</div>
<div class="t" style="left:715.00px;top:788.21px;font-size:5.9px;color:#e0e0e0;transform:translateX(-100%);">0.500</div>
<div class="a" style="left:659.70px;top:797.20px;width:62.30px;height:9.50px;background:#545454;border-radius:1.5px;"></div>
<div class="t" style="left:668.42px;top:799.71px;font-size:5.9px;color:#e0e0e0;">Y</div>
<div class="t" style="left:715.00px;top:799.71px;font-size:5.9px;color:#e0e0e0;transform:translateX(-100%);">-0.250</div>
<div class="a" style="left:659.70px;top:808.70px;width:62.30px;height:9.50px;background:#545454;border-radius:1.5px;"></div>
<div class="t" style="left:668.42px;top:811.21px;font-size:5.9px;color:#e0e0e0;">Z</div>
<div class="t" style="left:715.00px;top:811.21px;font-size:5.9px;color:#e0e0e0;transform:translateX(-100%);">0.000</div>
<div class="a" style="left:756.00px;top:688.50px;width:76.50px;height:65.50px;background:rgba(0,0,0,0.25);border-radius:5px;filter:blur(1.5px)"></div>
<div class="a" style="left:757.00px;top:689.00px;width:74.00px;height:63.00px;background:#303030;border-radius:2.5px;"></div>
<div class="a" style="left:757.00px;top:689.00px;width:74.00px;height:11.00px;background:#246283;border-radius:2.5px;border-bottom-left-radius:0;border-bottom-right-radius:0"></div>
<svg style="left:761.50px;top:692.90px" width="5" height="4"><path d="M0.5 0.8 L2.5 2.8 L4.5 0.8" fill="none" stroke="#e8e8e8" stroke-width="0.85"/></svg>
<div class="t" style="left:770.50px;top:692.06px;font-size:5.9px;color:#e8e8e8;">Combine XYZ</div>
<div class="t" style="left:824.50px;top:704.76px;font-size:5.9px;color:#dcdcdc;transform:translateX(-100%);">Vector</div>
<div class="a" style="left:762.70px;top:716.70px;width:62.30px;height:9.50px;background:#545454;border-radius:1.5px;"></div>
<div class="t" style="left:771.42px;top:719.21px;font-size:5.9px;color:#e0e0e0;">X</div>
<div class="t" style="left:818.00px;top:719.21px;font-size:5.9px;color:#e0e0e0;transform:translateX(-100%);">0.750</div>
<div class="a" style="left:762.70px;top:728.20px;width:62.30px;height:9.50px;background:#545454;border-radius:1.5px;"></div>
<div class="t" style="left:771.42px;top:730.71px;font-size:5.9px;color:#e0e0e0;">Y</div>
<div class="t" style="left:818.00px;top:730.71px;font-size:5.9px;color:#e0e0e0;transform:translateX(-100%);">0.000</div>
<div class="a" style="left:762.70px;top:739.70px;width:62.30px;height:9.50px;background:#545454;border-radius:1.5px;"></div>
<div class="t" style="left:771.42px;top:742.21px;font-size:5.9px;color:#e0e0e0;">Z</div>
<div class="t" style="left:818.00px;top:742.21px;font-size:5.9px;color:#e0e0e0;transform:translateX(-100%);">0.000</div>
<div class="a" style="left:755.00px;top:756.50px;width:76.50px;height:65.50px;background:rgba(0,0,0,0.25);border-radius:5px;filter:blur(1.5px)"></div>
<div class="a" style="left:756.00px;top:757.00px;width:74.00px;height:63.00px;background:#303030;border-radius:2.5px;"></div>
<div class="a" style="left:756.00px;top:757.00px;width:74.00px;height:11.00px;background:#246283;border-radius:2.5px;border-bottom-left-radius:0;border-bottom-right-radius:0"></div>
<svg style="left:760.50px;top:760.90px" width="5" height="4"><path d="M0.5 0.8 L2.5 2.8 L4.5 0.8" fill="none" stroke="#e8e8e8" stroke-width="0.85"/></svg>
<div class="t" style="left:769.50px;top:760.06px;font-size:5.9px;color:#e8e8e8;">Combine XYZ</div>
<div class="t" style="left:823.50px;top:772.76px;font-size:5.9px;color:#dcdcdc;transform:translateX(-100%);">Vector</div>
<div class="a" style="left:761.70px;top:784.70px;width:62.30px;height:9.50px;background:#545454;border-radius:1.5px;"></div>
<div class="t" style="left:770.42px;top:787.21px;font-size:5.9px;color:#e0e0e0;">X</div>
<div class="t" style="left:817.00px;top:787.21px;font-size:5.9px;color:#e0e0e0;transform:translateX(-100%);">0.750</div>
<div class="a" style="left:761.70px;top:796.20px;width:62.30px;height:9.50px;background:#545454;border-radius:1.5px;"></div>
<div class="t" style="left:770.42px;top:798.71px;font-size:5.9px;color:#e0e0e0;">Y</div>
<div class="t" style="left:817.00px;top:798.71px;font-size:5.9px;color:#e0e0e0;transform:translateX(-100%);">-0.250</div>
<div class="a" style="left:761.70px;top:807.70px;width:62.30px;height:9.50px;background:#545454;border-radius:1.5px;"></div>
<div class="t" style="left:770.42px;top:810.21px;font-size:5.9px;color:#e0e0e0;">Z</div>
<div class="t" style="left:817.00px;top:810.21px;font-size:5.9px;color:#e0e0e0;transform:translateX(-100%);">0.000</div>
<div class="a" style="left:892.00px;top:330.50px;width:76.50px;height:127.80px;background:rgba(0,0,0,0.25);border-radius:5px;filter:blur(1.5px)"></div>
<div class="a" style="left:893.00px;top:331.00px;width:74.00px;height:125.30px;background:#303030;border-radius:2.5px;"></div>
<div class="a" style="left:893.00px;top:331.00px;width:74.00px;height:10.30px;background:#83314a;border-radius:2.5px;border-bottom-left-radius:0;border-bottom-right-radius:0"></div>
<svg style="left:897.50px;top:334.55px" width="5" height="4"><path d="M0.5 0.8 L2.5 2.8 L4.5 0.8" fill="none" stroke="#e8e8e8" stroke-width="0.85"/></svg>
<div class="t" style="left:906.50px;top:333.71px;font-size:5.9px;color:#e8e8e8;">Texture Coordinate</div>
<div class="t" style="left:960.50px;top:346.76px;font-size:5.9px;color:#dcdcdc;transform:translateX(-100%);">Generated</div>
<div class="t" style="left:960.50px;top:358.61px;font-size:5.9px;color:#dcdcdc;transform:translateX(-100%);">Normal</div>
<div class="t" style="left:960.50px;top:370.46px;font-size:5.9px;color:#dcdcdc;transform:translateX(-100%);">UV</div>
<div class="t" style="left:960.50px;top:382.31px;font-size:5.9px;color:#dcdcdc;transform:translateX(-100%);">Object</div>
<div class="t" style="left:960.50px;top:394.16px;font-size:5.9px;color:#dcdcdc;transform:translateX(-100%);">Camera</div>
<div class="t" style="left:960.50px;top:406.01px;font-size:5.9px;color:#dcdcdc;transform:translateX(-100%);">Window</div>
<div class="t" style="left:960.50px;top:417.86px;font-size:5.9px;color:#dcdcdc;transform:translateX(-100%);">Reflection</div>
<div class="t" style="left:898.50px;top:431.76px;font-size:5.9px;color:#dcdcdc;">Object:</div>
<div class="a" style="left:920.50px;top:428.50px;width:41.00px;height:10.50px;background:#282828;border-radius:2px;border:0.8px solid #3c3c3c"></div>
<div class="a" style="left:924.50px;top:431.00px;width:5.50px;height:5.50px;background:#e6e6e6;border-radius:1px;"></div>
<div class="t" style="left:934.00px;top:431.76px;font-size:5.9px;color:#6a6a6a;">Objec</div>
<svg style="left:953.00px;top:429.50px" width="8" height="8"><path d="M1 7 L5 3 M4 2 L6 0.8 L7.2 2 L6 4 Z" stroke="#e0e0e0" stroke-width="1" fill="#e0e0e0"/></svg>
<div class="a" style="left:898.50px;top:443.00px;width:8.00px;height:8.00px;background:#545454;border-radius:1.5px;"></div>
<div class="t" style="left:908.50px;top:444.76px;font-size:5.9px;color:#dcdcdc;">From Instancer</div>
<div class="a" style="left:1015.00px;top:356.50px;width:76.50px;height:156.10px;background:rgba(0,0,0,0.25);border-radius:5px;filter:blur(1.5px)"></div>
<div class="a" style="left:1016.00px;top:357.00px;width:74.00px;height:153.60px;background:#303030;border-radius:2.5px;"></div>
<div class="a" style="left:1016.00px;top:357.00px;width:74.00px;height:10.30px;background:#3b3b83;border-radius:2.5px;border-bottom-left-radius:0;border-bottom-right-radius:0"></div>
<svg style="left:1020.50px;top:360.55px" width="5" height="4"><path d="M0.5 0.8 L2.5 2.8 L4.5 0.8" fill="none" stroke="#e8e8e8" stroke-width="0.85"/></svg>
<div class="t" style="left:1029.50px;top:359.71px;font-size:5.9px;color:#e8e8e8;">Mapping</div>
<div class="t" style="left:1083.50px;top:372.76px;font-size:5.9px;color:#dcdcdc;transform:translateX(-100%);">Vector</div>
<div class="t" style="left:1021.70px;top:386.76px;font-size:5.9px;color:#dcdcdc;">Type:</div>
<div class="a" style="left:1042.70px;top:384.00px;width:41.90px;height:11.00px;background:#282828;border-radius:2px;border:0.8px solid #3c3c3c"></div>
<div class="t" style="left:1046.20px;top:387.26px;font-size:5.9px;color:#d8d8d8;">Point</div>
<svg style="left:1078.10px;top:388.00px" width="4" height="3"><path d="M0.3 0.5 L2 2.3 L3.7 0.5" fill="none" stroke="#cfcfcf" stroke-width="0.8"/></svg>
<div class="t" style="left:1021.70px;top:398.76px;font-size:5.9px;color:#dcdcdc;">Vector</div>
<div class="t" style="left:1021.70px;top:410.76px;font-size:5.9px;color:#dcdcdc;">Location</div>
<div class="t" style="left:1021.70px;top:422.76px;font-size:5.9px;color:#dcdcdc;">Rotation</div>
<div class="a" style="left:1021.70px;top:432.80px;width:62.3px;height:8.6px;background:#545454;border-radius:2px 2px 0 0"></div>
<div class="t" style="left:1030.70px;top:434.86px;font-size:5.9px;color:#e0e0e0;">X</div>
<div class="t" style="left:1077.00px;top:434.86px;font-size:5.9px;color:#e0e0e0;transform:translateX(-100%);">0°</div>
<div class="a" style="left:1021.70px;top:441.80px;width:62.3px;height:9.9px;background:#545454;border-radius:0"></div>
<div class="t" style="left:1030.70px;top:444.51px;font-size:5.9px;color:#e0e0e0;">Y</div>
<div class="t" style="left:1077.00px;top:444.51px;font-size:5.9px;color:#e0e0e0;transform:translateX(-100%);">0°</div>
<div class="a" style="left:1021.70px;top:453.30px;width:62.3px;height:10px;background:#545454;border-radius:0 0 2px 2px"></div>
<div class="t" style="left:1030.70px;top:456.06px;font-size:5.9px;color:#e0e0e0;">Z</div>
<div class="t" style="left:1077.00px;top:456.06px;font-size:5.9px;color:#e0e0e0;transform:translateX(-100%);">0°</div>
<div class="t" style="left:1021.70px;top:467.76px;font-size:5.9px;color:#dcdcdc;">Scale</div>
<div class="a" style="left:1021.70px;top:477.70px;width:62.3px;height:8.6px;background:#545454;border-radius:2px 2px 0 0"></div>
<div class="t" style="left:1030.70px;top:479.76px;font-size:5.9px;color:#e0e0e0;">X</div>
<div class="t" style="left:1077.00px;top:479.76px;font-size:5.9px;color:#e0e0e0;transform:translateX(-100%);">1.000</div>
<div class="a" style="left:1021.70px;top:486.70px;width:62.3px;height:9.9px;background:#545454;border-radius:0"></div>
<div class="t" style="left:1030.70px;top:489.41px;font-size:5.9px;color:#e0e0e0;">Y</div>
<div class="t" style="left:1077.00px;top:489.41px;font-size:5.9px;color:#e0e0e0;transform:translateX(-100%);">1.000</div>
<div class="a" style="left:1021.70px;top:498.20px;width:62.3px;height:10px;background:#545454;border-radius:0 0 2px 2px"></div>
<div class="t" style="left:1030.70px;top:500.96px;font-size:5.9px;color:#e0e0e0;">Z</div>
<div class="t" style="left:1077.00px;top:500.96px;font-size:5.9px;color:#e0e0e0;transform:translateX(-100%);">1.000</div>
<div class="a" style="left:1123.30px;top:386.10px;width:130.50px;height:147.10px;background:rgba(0,0,0,0.25);border-radius:5px;filter:blur(1.5px)"></div>
<div class="a" style="left:1124.30px;top:386.60px;width:128.00px;height:144.60px;background:#303030;border-radius:2.5px;"></div>
<div class="a" style="left:1124.30px;top:386.60px;width:128.00px;height:10.90px;background:#79461d;border-radius:2.5px;border-bottom-left-radius:0;border-bottom-right-radius:0"></div>
<svg style="left:1128.80px;top:390.45px" width="5" height="4"><path d="M0.5 0.8 L2.5 2.8 L4.5 0.8" fill="none" stroke="#e8e8e8" stroke-width="0.85"/></svg>
<div class="t" style="left:1137.80px;top:389.61px;font-size:5.9px;color:#e8e8e8;">T_emi_face.psd</div>
<div class="t" style="left:1245.80px;top:403.06px;font-size:5.9px;color:#dcdcdc;transform:translateX(-100%);">Color</div>
<div class="t" style="left:1245.80px;top:414.96px;font-size:5.9px;color:#dcdcdc;transform:translateX(-100%);">Alpha</div>
<div class="a" style="left:1130.30px;top:426.50px;width:15.00px;height:9.70px;background:#282828;border-radius:2px;border-top-right-radius:0;border-bottom-right-radius:0"></div>
<svg style="left:1131.30px;top:427.70px" width="8" height="8"><rect x="0.5" y="0.5" width="7" height="7" fill="none" stroke="#ddd" stroke-width="0.8"/><path d="M1 7 L3.5 3.5 L6 7 Z" fill="#ddd"/></svg>
<svg style="left:1140.30px;top:430.00px" width="4" height="3"><path d="M0.3 0.5 L2 2.3 L3.7 0.5" fill="none" stroke="#cfcfcf" stroke-width="0.8"/></svg>
<div class="a" style="left:1146.00px;top:426.50px;width:44.80px;height:9.70px;background:#1f1f1f;border-radius:0px;"></div>
<div class="t" style="left:1149.30px;top:429.11px;font-size:5.9px;color:#d8d8d8;">T_emi_face....</div>
<div class="a" style="left:1191.60px;top:426.50px;width:11.00px;height:9.70px;background:#545454;border-radius:0px;"></div>
<div class="t" style="left:1197.10px;top:429.11px;font-size:5.9px;color:#e0e0e0;transform:translateX(-50%);">2</div>
<div class="a" style="left:1203.80px;top:426.50px;width:10.20px;height:9.70px;background:#545454;border-radius:0px;"></div>
<div class="a" style="left:1214.80px;top:426.50px;width:10.20px;height:9.70px;background:#545454;border-radius:0px;"></div>
<div class="a" style="left:1225.80px;top:426.50px;width:10.20px;height:9.70px;background:#545454;border-radius:0px;"></div>
<div class="a" style="left:1236.80px;top:426.50px;width:10.20px;height:9.70px;background:#545454;border-radius:0px;border-radius:0 2px 2px 0"></div>
<svg style="left:1205.30px;top:427.50px" width="8" height="8"><path d="M4 0.8 L7 1.8 V4 C7 6 5.5 7 4 7.5 C2.5 7 1 6 1 4 V1.8 Z" fill="none" stroke="#aaa" stroke-width="0.7"/></svg>
<svg style="left:1216.30px;top:427.50px" width="8" height="8"><path d="M2.5 2.5 H6.5 V7.5 H2.5 Z M1 6 V1 H5" fill="none" stroke="#ccc" stroke-width="0.7"/></svg>
<svg style="left:1227.30px;top:428.00px" width="8" height="7"><path d="M0.5 1 H3 L3.6 2 H7.5 V6.5 H0.5 Z" fill="#ddd"/></svg>
<svg style="left:1238.40px;top:428.50px" width="6" height="6"><path d="M0.5 0.5 L5.5 5.5 M5.5 0.5 L0.5 5.5" stroke="#ddd" stroke-width="0.8"/></svg>
<div class="a" style="left:1129.70px;top:441.00px;width:116.60px;height:8.60px;background:#282828;border-radius:2px;border:0.8px solid #3c3c3c"></div>
<div class="t" style="left:1133.20px;top:443.06px;font-size:5.9px;color:#d8d8d8;">Linear</div>
<svg style="left:1239.80px;top:443.80px" width="4" height="3"><path d="M0.3 0.5 L2 2.3 L3.7 0.5" fill="none" stroke="#cfcfcf" stroke-width="0.8"/></svg>
<div class="a" style="left:1129.70px;top:454.20px;width:116.60px;height:9.20px;background:#282828;border-radius:2px;border:0.8px solid #3c3c3c"></div>
<div class="t" style="left:1133.20px;top:456.56px;font-size:5.9px;color:#d8d8d8;">Flat</div>
<svg style="left:1239.80px;top:457.30px" width="4" height="3"><path d="M0.3 0.5 L2 2.3 L3.7 0.5" fill="none" stroke="#cfcfcf" stroke-width="0.8"/></svg>
<div class="a" style="left:1129.70px;top:467.60px;width:116.60px;height:9.00px;background:#282828;border-radius:2px;border:0.8px solid #3c3c3c"></div>
<div class="t" style="left:1133.20px;top:469.86px;font-size:5.9px;color:#d8d8d8;">Repeat</div>
<svg style="left:1239.80px;top:470.60px" width="4" height="3"><path d="M0.3 0.5 L2 2.3 L3.7 0.5" fill="none" stroke="#cfcfcf" stroke-width="0.8"/></svg>
<div class="a" style="left:1129.70px;top:480.60px;width:116.60px;height:9.50px;background:#282828;border-radius:2px;border:0.8px solid #3c3c3c"></div>
<div class="t" style="left:1133.20px;top:483.11px;font-size:5.9px;color:#d8d8d8;">Single Image</div>
<svg style="left:1239.80px;top:483.85px" width="4" height="3"><path d="M0.3 0.5 L2 2.3 L3.7 0.5" fill="none" stroke="#cfcfcf" stroke-width="0.8"/></svg>
<div class="t" style="left:1129.70px;top:496.26px;font-size:5.9px;color:#dcdcdc;">Color Space</div>
<div class="a" style="left:1171.80px;top:493.90px;width:74.50px;height:9.30px;background:#282828;border-radius:2px;border:0.8px solid #3c3c3c"></div>
<div class="t" style="left:1175.30px;top:496.31px;font-size:5.9px;color:#d8d8d8;">sRGB</div>
<svg style="left:1239.80px;top:497.05px" width="4" height="3"><path d="M0.3 0.5 L2 2.3 L3.7 0.5" fill="none" stroke="#cfcfcf" stroke-width="0.8"/></svg>
<div class="t" style="left:1129.70px;top:510.26px;font-size:5.9px;color:#dcdcdc;">Alpha</div>
<div class="a" style="left:1171.80px;top:507.90px;width:74.50px;height:9.40px;background:#282828;border-radius:2px;border:0.8px solid #3c3c3c"></div>
<div class="t" style="left:1175.30px;top:510.36px;font-size:5.9px;color:#d8d8d8;">Straight</div>
<svg style="left:1239.80px;top:511.10px" width="4" height="3"><path d="M0.3 0.5 L2 2.3 L3.7 0.5" fill="none" stroke="#cfcfcf" stroke-width="0.8"/></svg>
<div class="t" style="left:1129.70px;top:521.76px;font-size:5.9px;color:#dcdcdc;">Vector</div>
<div class="a" style="left:1431.20px;top:375.50px;width:76.30px;height:77.10px;background:rgba(0,0,0,0.25);border-radius:5px;filter:blur(1.5px)"></div>
<div class="a" style="left:1432.20px;top:376.00px;width:73.80px;height:74.60px;background:#303030;border-radius:2.5px;"></div>
<div class="a" style="left:1432.20px;top:376.00px;width:73.80px;height:10.90px;background:#3f1c25;border-radius:2.5px;border-bottom-left-radius:0;border-bottom-right-radius:0"></div>
<svg style="left:1436.70px;top:379.85px" width="5" height="4"><path d="M0.5 0.8 L2.5 2.8 L4.5 0.8" fill="none" stroke="#e8e8e8" stroke-width="0.85"/></svg>
<div class="t" style="left:1445.70px;top:379.01px;font-size:5.9px;color:#e8e8e8;">Material Output</div>
<div class="a" style="left:1437.90px;top:390.50px;width:62.60px;height:10.20px;background:#282828;border-radius:2px;border:0.8px solid #3c3c3c"></div>
<div class="t" style="left:1441.40px;top:393.36px;font-size:5.9px;color:#d8d8d8;">All</div>
<svg style="left:1494.00px;top:394.10px" width="4" height="3"><path d="M0.3 0.5 L2 2.3 L3.7 0.5" fill="none" stroke="#cfcfcf" stroke-width="0.8"/></svg>
<div class="t" style="left:1438.20px;top:405.16px;font-size:5.9px;color:#dcdcdc;">Surface</div>
<div class="t" style="left:1438.20px;top:417.03px;font-size:5.9px;color:#dcdcdc;">Volume</div>
<div class="t" style="left:1438.20px;top:428.90px;font-size:5.9px;color:#dcdcdc;">Displacement</div>
<div class="t" style="left:1438.20px;top:440.77px;font-size:5.9px;color:#dcdcdc;">Thickness</div>
<div class="a" style="left:192.70px;top:466.90px;width:4.2px;height:4.2px;border-radius:50%;background:#a1a1a1;box-shadow:0 0 0 0.6px rgba(0,0,0,0.6)"></div>
<div class="a" style="left:297.90px;top:448.90px;width:4.2px;height:4.2px;border-radius:50%;background:#a1a1a1;box-shadow:0 0 0 0.6px rgba(0,0,0,0.6)"></div>
<div class="a" style="left:223.90px;top:488.90px;width:4.2px;height:4.2px;border-radius:50%;background:#a1a1a1;box-shadow:0 0 0 0.6px rgba(0,0,0,0.6)"></div>
<div class="a" style="left:223.90px;top:501.10px;width:4.2px;height:4.2px;border-radius:50%;background:#a1a1a1;box-shadow:0 0 0 0.6px rgba(0,0,0,0.6)"></div>
<div class="a" style="left:392.90px;top:448.90px;width:4.2px;height:4.2px;border-radius:50%;background:#a1a1a1;box-shadow:0 0 0 0.6px rgba(0,0,0,0.6)"></div>
<div class="a" style="left:318.90px;top:488.90px;width:4.2px;height:4.2px;border-radius:50%;background:#a1a1a1;box-shadow:0 0 0 0.6px rgba(0,0,0,0.6)"></div>
<div class="a" style="left:318.90px;top:501.10px;width:4.2px;height:4.2px;border-radius:50%;background:#a1a1a1;box-shadow:0 0 0 0.6px rgba(0,0,0,0.6)"></div>
<div class="a" style="left:486.70px;top:448.90px;width:4.2px;height:4.2px;border-radius:50%;background:#a1a1a1;box-shadow:0 0 0 0.6px rgba(0,0,0,0.6)"></div>
<div class="a" style="left:412.70px;top:488.90px;width:4.2px;height:4.2px;border-radius:50%;background:#a1a1a1;box-shadow:0 0 0 0.6px rgba(0,0,0,0.6)"></div>
<div class="a" style="left:412.70px;top:501.10px;width:4.2px;height:4.2px;border-radius:50%;background:#a1a1a1;box-shadow:0 0 0 0.6px rgba(0,0,0,0.6)"></div>
<div class="a" style="left:584.90px;top:448.90px;width:4.2px;height:4.2px;border-radius:50%;background:#a1a1a1;box-shadow:0 0 0 0.6px rgba(0,0,0,0.6)"></div>
<div class="a" style="left:510.90px;top:488.90px;width:4.2px;height:4.2px;border-radius:50%;background:#a1a1a1;box-shadow:0 0 0 0.6px rgba(0,0,0,0.6)"></div>
<div class="a" style="left:510.90px;top:501.10px;width:4.2px;height:4.2px;border-radius:50%;background:#a1a1a1;box-shadow:0 0 0 0.6px rgba(0,0,0,0.6)"></div>
<div class="a" style="left:684.90px;top:449.90px;width:4.2px;height:4.2px;border-radius:50%;background:#a1a1a1;box-shadow:0 0 0 0.6px rgba(0,0,0,0.6)"></div>
<div class="a" style="left:610.90px;top:489.90px;width:4.2px;height:4.2px;border-radius:50%;background:#a1a1a1;box-shadow:0 0 0 0.6px rgba(0,0,0,0.6)"></div>
<div class="a" style="left:610.90px;top:502.10px;width:4.2px;height:4.2px;border-radius:50%;background:#a1a1a1;box-shadow:0 0 0 0.6px rgba(0,0,0,0.6)"></div>
<div class="a" style="left:777.90px;top:449.90px;width:4.2px;height:4.2px;border-radius:50%;background:#a1a1a1;box-shadow:0 0 0 0.6px rgba(0,0,0,0.6)"></div>
<div class="a" style="left:703.90px;top:489.90px;width:4.2px;height:4.2px;border-radius:50%;background:#a1a1a1;box-shadow:0 0 0 0.6px rgba(0,0,0,0.6)"></div>
<div class="a" style="left:703.90px;top:502.10px;width:4.2px;height:4.2px;border-radius:50%;background:#a1a1a1;box-shadow:0 0 0 0.6px rgba(0,0,0,0.6)"></div>
<div class="a" style="left:872.90px;top:447.90px;width:4.2px;height:4.2px;border-radius:50%;background:#a1a1a1;box-shadow:0 0 0 0.6px rgba(0,0,0,0.6)"></div>
<div class="a" style="left:798.90px;top:487.90px;width:4.2px;height:4.2px;border-radius:50%;background:#a1a1a1;box-shadow:0 0 0 0.6px rgba(0,0,0,0.6)"></div>
<div class="a" style="left:798.90px;top:500.10px;width:4.2px;height:4.2px;border-radius:50%;background:#a1a1a1;box-shadow:0 0 0 0.6px rgba(0,0,0,0.6)"></div>
<div class="a" style="left:420.90px;top:552.90px;width:4.2px;height:4.2px;border-radius:50%;background:#6363c7;box-shadow:0 0 0 0.6px rgba(0,0,0,0.6)"></div>
<div class="a" style="left:346.90px;top:606.90px;width:4.2px;height:4.2px;border-radius:50%;background:#a1a1a1;box-shadow:0 0 0 0.6px rgba(0,0,0,0.6)"></div>
<div class="a" style="left:346.90px;top:618.90px;width:4.2px;height:4.2px;border-radius:50%;background:#6363c7;box-shadow:0 0 0 0.6px rgba(0,0,0,0.6)"></div>
<div class="a" style="left:346.90px;top:630.90px;width:4.2px;height:4.2px;border-radius:50%;background:#6363c7;box-shadow:0 0 0 0.6px rgba(0,0,0,0.6)"></div>
<div class="a" style="left:509.70px;top:552.90px;width:4.2px;height:4.2px;border-radius:50%;background:#6363c7;box-shadow:0 0 0 0.6px rgba(0,0,0,0.6)"></div>
<div class="a" style="left:435.70px;top:606.90px;width:4.2px;height:4.2px;border-radius:50%;background:#a1a1a1;box-shadow:0 0 0 0.6px rgba(0,0,0,0.6)"></div>
<div class="a" style="left:435.70px;top:618.90px;width:4.2px;height:4.2px;border-radius:50%;background:#6363c7;box-shadow:0 0 0 0.6px rgba(0,0,0,0.6)"></div>
<div class="a" style="left:435.70px;top:630.90px;width:4.2px;height:4.2px;border-radius:50%;background:#6363c7;box-shadow:0 0 0 0.6px rgba(0,0,0,0.6)"></div>
<div class="a" style="left:596.90px;top:551.90px;width:4.2px;height:4.2px;border-radius:50%;background:#6363c7;box-shadow:0 0 0 0.6px rgba(0,0,0,0.6)"></div>
<div class="a" style="left:522.90px;top:605.90px;width:4.2px;height:4.2px;border-radius:50%;background:#a1a1a1;box-shadow:0 0 0 0.6px rgba(0,0,0,0.6)"></div>
<div class="a" style="left:522.90px;top:617.90px;width:4.2px;height:4.2px;border-radius:50%;background:#6363c7;box-shadow:0 0 0 0.6px rgba(0,0,0,0.6)"></div>
<div class="a" style="left:522.90px;top:629.90px;width:4.2px;height:4.2px;border-radius:50%;background:#6363c7;box-shadow:0 0 0 0.6px rgba(0,0,0,0.6)"></div>
<div class="a" style="left:683.90px;top:551.90px;width:4.2px;height:4.2px;border-radius:50%;background:#6363c7;box-shadow:0 0 0 0.6px rgba(0,0,0,0.6)"></div>
<div class="a" style="left:609.90px;top:605.90px;width:4.2px;height:4.2px;border-radius:50%;background:#a1a1a1;box-shadow:0 0 0 0.6px rgba(0,0,0,0.6)"></div>
<div class="a" style="left:609.90px;top:617.90px;width:4.2px;height:4.2px;border-radius:50%;background:#6363c7;box-shadow:0 0 0 0.6px rgba(0,0,0,0.6)"></div>
<div class="a" style="left:609.90px;top:629.90px;width:4.2px;height:4.2px;border-radius:50%;background:#6363c7;box-shadow:0 0 0 0.6px rgba(0,0,0,0.6)"></div>
<div class="a" style="left:771.90px;top:551.90px;width:4.2px;height:4.2px;border-radius:50%;background:#6363c7;box-shadow:0 0 0 0.6px rgba(0,0,0,0.6)"></div>
<div class="a" style="left:697.90px;top:605.90px;width:4.2px;height:4.2px;border-radius:50%;background:#a1a1a1;box-shadow:0 0 0 0.6px rgba(0,0,0,0.6)"></div>
<div class="a" style="left:697.90px;top:617.90px;width:4.2px;height:4.2px;border-radius:50%;background:#6363c7;box-shadow:0 0 0 0.6px rgba(0,0,0,0.6)"></div>
<div class="a" style="left:697.90px;top:629.90px;width:4.2px;height:4.2px;border-radius:50%;background:#6363c7;box-shadow:0 0 0 0.6px rgba(0,0,0,0.6)"></div>
<div class="a" style="left:854.90px;top:551.90px;width:4.2px;height:4.2px;border-radius:50%;background:#6363c7;box-shadow:0 0 0 0.6px rgba(0,0,0,0.6)"></div>
<div class="a" style="left:780.90px;top:605.90px;width:4.2px;height:4.2px;border-radius:50%;background:#a1a1a1;box-shadow:0 0 0 0.6px rgba(0,0,0,0.6)"></div>
<div class="a" style="left:780.90px;top:617.90px;width:4.2px;height:4.2px;border-radius:50%;background:#6363c7;box-shadow:0 0 0 0.6px rgba(0,0,0,0.6)"></div>
<div class="a" style="left:780.90px;top:629.90px;width:4.2px;height:4.2px;border-radius:50%;background:#6363c7;box-shadow:0 0 0 0.6px rgba(0,0,0,0.6)"></div>
<div class="a" style="left:938.90px;top:552.90px;width:4.2px;height:4.2px;border-radius:50%;background:#6363c7;box-shadow:0 0 0 0.6px rgba(0,0,0,0.6)"></div>
<div class="a" style="left:864.90px;top:606.90px;width:4.2px;height:4.2px;border-radius:50%;background:#a1a1a1;box-shadow:0 0 0 0.6px rgba(0,0,0,0.6)"></div>
<div class="a" style="left:864.90px;top:618.90px;width:4.2px;height:4.2px;border-radius:50%;background:#6363c7;box-shadow:0 0 0 0.6px rgba(0,0,0,0.6)"></div>
<div class="a" style="left:864.90px;top:630.90px;width:4.2px;height:4.2px;border-radius:50%;background:#6363c7;box-shadow:0 0 0 0.6px rgba(0,0,0,0.6)"></div>
<div class="a" style="left:524.90px;top:706.70px;width:4.2px;height:4.2px;border-radius:50%;background:#6363c7;box-shadow:0 0 0 0.6px rgba(0,0,0,0.6)"></div>
<div class="a" style="left:450.90px;top:721.15px;width:4.2px;height:4.2px;border-radius:50%;background:#a1a1a1;box-shadow:0 0 0 0.6px rgba(0,0,0,0.6)"></div>
<div class="a" style="left:450.90px;top:732.65px;width:4.2px;height:4.2px;border-radius:50%;background:#a1a1a1;box-shadow:0 0 0 0.6px rgba(0,0,0,0.6)"></div>
<div class="a" style="left:450.90px;top:744.15px;width:4.2px;height:4.2px;border-radius:50%;background:#a1a1a1;box-shadow:0 0 0 0.6px rgba(0,0,0,0.6)"></div>
<div class="a" style="left:523.90px;top:774.20px;width:4.2px;height:4.2px;border-radius:50%;background:#6363c7;box-shadow:0 0 0 0.6px rgba(0,0,0,0.6)"></div>
<div class="a" style="left:449.90px;top:788.65px;width:4.2px;height:4.2px;border-radius:50%;background:#a1a1a1;box-shadow:0 0 0 0.6px rgba(0,0,0,0.6)"></div>
<div class="a" style="left:449.90px;top:800.15px;width:4.2px;height:4.2px;border-radius:50%;background:#a1a1a1;box-shadow:0 0 0 0.6px rgba(0,0,0,0.6)"></div>
<div class="a" style="left:449.90px;top:811.65px;width:4.2px;height:4.2px;border-radius:50%;background:#a1a1a1;box-shadow:0 0 0 0.6px rgba(0,0,0,0.6)"></div>
<div class="a" style="left:625.50px;top:705.70px;width:4.2px;height:4.2px;border-radius:50%;background:#6363c7;box-shadow:0 0 0 0.6px rgba(0,0,0,0.6)"></div>
<div class="a" style="left:551.50px;top:720.15px;width:4.2px;height:4.2px;border-radius:50%;background:#a1a1a1;box-shadow:0 0 0 0.6px rgba(0,0,0,0.6)"></div>
<div class="a" style="left:551.50px;top:731.65px;width:4.2px;height:4.2px;border-radius:50%;background:#a1a1a1;box-shadow:0 0 0 0.6px rgba(0,0,0,0.6)"></div>
<div class="a" style="left:551.50px;top:743.15px;width:4.2px;height:4.2px;border-radius:50%;background:#a1a1a1;box-shadow:0 0 0 0.6px rgba(0,0,0,0.6)"></div>
<div class="a" style="left:625.50px;top:775.90px;width:4.2px;height:4.2px;border-radius:50%;background:#6363c7;box-shadow:0 0 0 0.6px rgba(0,0,0,0.6)"></div>
<div class="a" style="left:551.50px;top:790.35px;width:4.2px;height:4.2px;border-radius:50%;background:#a1a1a1;box-shadow:0 0 0 0.6px rgba(0,0,0,0.6)"></div>
<div class="a" style="left:551.50px;top:801.85px;width:4.2px;height:4.2px;border-radius:50%;background:#a1a1a1;box-shadow:0 0 0 0.6px rgba(0,0,0,0.6)"></div>
<div class="a" style="left:551.50px;top:813.35px;width:4.2px;height:4.2px;border-radius:50%;background:#a1a1a1;box-shadow:0 0 0 0.6px rgba(0,0,0,0.6)"></div>
<div class="a" style="left:725.90px;top:704.90px;width:4.2px;height:4.2px;border-radius:50%;background:#6363c7;box-shadow:0 0 0 0.6px rgba(0,0,0,0.6)"></div>
<div class="a" style="left:651.90px;top:719.35px;width:4.2px;height:4.2px;border-radius:50%;background:#a1a1a1;box-shadow:0 0 0 0.6px rgba(0,0,0,0.6)"></div>
<div class="a" style="left:651.90px;top:730.85px;width:4.2px;height:4.2px;border-radius:50%;background:#a1a1a1;box-shadow:0 0 0 0.6px rgba(0,0,0,0.6)"></div>
<div class="a" style="left:651.90px;top:742.35px;width:4.2px;height:4.2px;border-radius:50%;background:#a1a1a1;box-shadow:0 0 0 0.6px rgba(0,0,0,0.6)"></div>
<div class="a" style="left:725.90px;top:773.90px;width:4.2px;height:4.2px;border-radius:50%;background:#6363c7;box-shadow:0 0 0 0.6px rgba(0,0,0,0.6)"></div>
<div class="a" style="left:651.90px;top:788.35px;width:4.2px;height:4.2px;border-radius:50%;background:#a1a1a1;box-shadow:0 0 0 0.6px rgba(0,0,0,0.6)"></div>
<div class="a" style="left:651.90px;top:799.85px;width:4.2px;height:4.2px;border-radius:50%;background:#a1a1a1;box-shadow:0 0 0 0.6px rgba(0,0,0,0.6)"></div>
<div class="a" style="left:651.90px;top:811.35px;width:4.2px;height:4.2px;border-radius:50%;background:#a1a1a1;box-shadow:0 0 0 0.6px rgba(0,0,0,0.6)"></div>
<div class="a" style="left:828.90px;top:704.90px;width:4.2px;height:4.2px;border-radius:50%;background:#6363c7;box-shadow:0 0 0 0.6px rgba(0,0,0,0.6)"></div>
<div class="a" style="left:754.90px;top:719.35px;width:4.2px;height:4.2px;border-radius:50%;background:#a1a1a1;box-shadow:0 0 0 0.6px rgba(0,0,0,0.6)"></div>
<div class="a" style="left:754.90px;top:730.85px;width:4.2px;height:4.2px;border-radius:50%;background:#a1a1a1;box-shadow:0 0 0 0.6px rgba(0,0,0,0.6)"></div>
<div class="a" style="left:754.90px;top:742.35px;width:4.2px;height:4.2px;border-radius:50%;background:#a1a1a1;box-shadow:0 0 0 0.6px rgba(0,0,0,0.6)"></div>
<div class="a" style="left:827.90px;top:772.90px;width:4.2px;height:4.2px;border-radius:50%;background:#6363c7;box-shadow:0 0 0 0.6px rgba(0,0,0,0.6)"></div>
<div class="a" style="left:753.90px;top:787.35px;width:4.2px;height:4.2px;border-radius:50%;background:#a1a1a1;box-shadow:0 0 0 0.6px rgba(0,0,0,0.6)"></div>
<div class="a" style="left:753.90px;top:798.85px;width:4.2px;height:4.2px;border-radius:50%;background:#a1a1a1;box-shadow:0 0 0 0.6px rgba(0,0,0,0.6)"></div>
<div class="a" style="left:753.90px;top:810.35px;width:4.2px;height:4.2px;border-radius:50%;background:#a1a1a1;box-shadow:0 0 0 0.6px rgba(0,0,0,0.6)"></div>
<div class="a" style="left:964.90px;top:346.90px;width:4.2px;height:4.2px;border-radius:50%;background:#6363c7;box-shadow:0 0 0 0.6px rgba(0,0,0,0.6)"></div>
<div class="a" style="left:964.90px;top:358.75px;width:4.2px;height:4.2px;border-radius:50%;background:#6363c7;box-shadow:0 0 0 0.6px rgba(0,0,0,0.6)"></div>
<div class="a" style="left:964.90px;top:370.60px;width:4.2px;height:4.2px;border-radius:50%;background:#6363c7;box-shadow:0 0 0 0.6px rgba(0,0,0,0.6)"></div>
<div class="a" style="left:964.90px;top:382.45px;width:4.2px;height:4.2px;border-radius:50%;background:#6363c7;box-shadow:0 0 0 0.6px rgba(0,0,0,0.6)"></div>
<div class="a" style="left:964.90px;top:394.30px;width:4.2px;height:4.2px;border-radius:50%;background:#6363c7;box-shadow:0 0 0 0.6px rgba(0,0,0,0.6)"></div>
<div class="a" style="left:964.90px;top:406.15px;width:4.2px;height:4.2px;border-radius:50%;background:#6363c7;box-shadow:0 0 0 0.6px rgba(0,0,0,0.6)"></div>
<div class="a" style="left:964.90px;top:418.00px;width:4.2px;height:4.2px;border-radius:50%;background:#6363c7;box-shadow:0 0 0 0.6px rgba(0,0,0,0.6)"></div>
<div class="a" style="left:1087.90px;top:372.90px;width:4.2px;height:4.2px;border-radius:50%;background:#6363c7;box-shadow:0 0 0 0.6px rgba(0,0,0,0.6)"></div>
<div class="a" style="left:1013.90px;top:398.90px;width:4.2px;height:4.2px;border-radius:50%;background:#6363c7;box-shadow:0 0 0 0.6px rgba(0,0,0,0.6)"></div>
<div class="a" style="left:1013.90px;top:410.90px;width:4.2px;height:4.2px;border-radius:50%;background:#6363c7;box-shadow:0 0 0 0.6px rgba(0,0,0,0.6)"></div>
<div class="a" style="left:1013.90px;top:422.90px;width:4.2px;height:4.2px;border-radius:50%;background:#6363c7;box-shadow:0 0 0 0.6px rgba(0,0,0,0.6)"></div>
<div class="a" style="left:1013.90px;top:467.90px;width:4.2px;height:4.2px;border-radius:50%;background:#6363c7;box-shadow:0 0 0 0.6px rgba(0,0,0,0.6)"></div>
<div class="a" style="left:1250.20px;top:403.20px;width:4.2px;height:4.2px;border-radius:50%;background:#c7c729;box-shadow:0 0 0 0.6px rgba(0,0,0,0.6)"></div>
<div class="a" style="left:1250.20px;top:415.10px;width:4.2px;height:4.2px;border-radius:50%;background:#a1a1a1;box-shadow:0 0 0 0.6px rgba(0,0,0,0.6)"></div>
<div class="a" style="left:1122.20px;top:521.90px;width:4.2px;height:4.2px;border-radius:50%;background:#6363c7;box-shadow:0 0 0 0.6px rgba(0,0,0,0.6)"></div>
<div class="a" style="left:1430.10px;top:405.30px;width:4.2px;height:4.2px;border-radius:50%;background:#63c763;box-shadow:0 0 0 0.6px rgba(0,0,0,0.6)"></div>
<div class="a" style="left:1430.10px;top:417.17px;width:4.2px;height:4.2px;border-radius:50%;background:#63c763;box-shadow:0 0 0 0.6px rgba(0,0,0,0.6)"></div>
<div class="a" style="left:1430.10px;top:429.04px;width:4.2px;height:4.2px;border-radius:50%;background:#6363c7;box-shadow:0 0 0 0.6px rgba(0,0,0,0.6)"></div>
<div class="a" style="left:1430.10px;top:440.91px;width:4.2px;height:4.2px;border-radius:50%;background:#a1a1a1;box-shadow:0 0 0 0.6px rgba(0,0,0,0.6)"></div>
</div></div>
<div class="a" style="left:737.00px;top:25.00px;width:115.00px;height:24.00px;background:#66636b;border-radius:0px;"></div>
<svg style="left:737.00px;top:25.00px;" width="115" height="24" viewBox="0 0 115 24"><path d="M0 20 H115 M0 8 H115 M28 0 V24 M58 0 V24 M88 0 V24" stroke="#3e3c42" stroke-width="1.2"/></svg>
<svg style="left:955.00px;top:24.00px;" width="85" height="14" viewBox="0 0 85 14"><path d="M20 0.5 C35 4 55 8 70 9 C78 9.5 78 6 72 3" fill="none" stroke="#86685c" stroke-width="2.6"/><path d="M30 1.5 C45 5 60 7.5 72 7" fill="none" stroke="#3f3630" stroke-width="0.8"/><path d="M19 1 V6" stroke="#2a2a2a" stroke-width="1"/><path d="M8 0.5 H16" stroke="#6a6a78" stroke-width="1.5"/></svg>
<div class="a" style="left:41.00px;top:27.00px;width:30.00px;height:18.00px;background:#2b2b2b;border-radius:4px;"></div>
<svg style="left:45.00px;top:28.00px;" width="20" height="16" viewBox="0 0 20 16"><path d="M2 8 H13 M1 12.5 H14 M4 6 L3 15 M10 6 L9 15" stroke="#e0e0e0" stroke-width="1"/><circle cx="13" cy="5" r="3.6" fill="#e6e6e6"/></svg>
<svg style="left:61.70px;top:33.20px;" width="8.6" height="5.6" viewBox="0 0 8.6 5.6"><path d="M1 1 L4.3 4.6 L7.6 1" fill="none" stroke="#d0d0d0" stroke-width="1.3"/></svg>
<div class="a" style="left:78.00px;top:27.00px;width:109.00px;height:18.00px;background:#2b2b2b;border-radius:4px;"></div>
<svg style="left:84.00px;top:29.00px;" width="14" height="14" viewBox="0 0 14 14"><rect x="3.5" y="3.5" width="7" height="7" fill="#e6e6e6"/><path d="M0.6 3.5 V0.6 H3.5 M10.5 0.6 H13.4 V3.5 M13.4 10.5 V13.4 H10.5 M3.5 13.4 H0.6 V10.5" fill="none" stroke="#e6e6e6" stroke-width="1.1"/></svg>
<div class="t" style="left:103.00px;top:30.71px;font-size:11.8px;color:#e6e6e6;">Object Mode</div>
<svg style="left:176.70px;top:33.70px;" width="8.6" height="5.6" viewBox="0 0 8.6 5.6"><path d="M1 1 L4.3 4.6 L7.6 1" fill="none" stroke="#d0d0d0" stroke-width="1.3"/></svg>
<div class="t" style="left:200.00px;top:30.71px;font-size:11.8px;color:#e6e6e6;">View</div>
<div class="t" style="left:241.00px;top:30.71px;font-size:11.8px;color:#e6e6e6;">Select</div>
<div class="t" style="left:288.00px;top:30.71px;font-size:11.8px;color:#e6e6e6;">Add</div>
<div class="t" style="left:325.00px;top:30.71px;font-size:11.8px;color:#e6e6e6;">Object</div>
<div class="a" style="left:684.00px;top:27.00px;width:76.00px;height:18.00px;background:#2b2b2b;border-radius:4px;"></div>
<svg style="left:689.00px;top:28.00px;" width="16" height="16" viewBox="0 0 16 16"><path d="M3 2 V13 H14 M3 13 L12 4" fill="none" stroke="#e0e0e0" stroke-width="1.1"/><circle cx="3" cy="13" r="1.6" fill="#46443a" stroke="#e0e0e0" stroke-width="1"/></svg>
<div class="t" style="left:709.00px;top:30.71px;font-size:11.8px;color:#e6e6e6;">Global</div>
<svg style="left:749.70px;top:33.70px;" width="8.6" height="5.6" viewBox="0 0 8.6 5.6"><path d="M1 1 L4.3 4.6 L7.6 1" fill="none" stroke="#d0d0d0" stroke-width="1.3"/></svg>
<div class="a" style="left:767.00px;top:27.00px;width:30.00px;height:18.00px;background:#2b2b2b;border-radius:4px;"></div>
<svg style="left:769.00px;top:29.00px;" width="16" height="15" viewBox="0 0 16 15"><circle cx="5.5" cy="9.5" r="3.8" fill="none" stroke="#e0e0e0" stroke-width="1.2"/><circle cx="9.5" cy="5.5" r="3.8" fill="none" stroke="#e0e0e0" stroke-width="1.2"/></svg>
<svg style="left:786.70px;top:33.70px;" width="8.6" height="5.6" viewBox="0 0 8.6 5.6"><path d="M1 1 L4.3 4.6 L7.6 1" fill="none" stroke="#d0d0d0" stroke-width="1.3"/></svg>
<div class="a" style="left:804.00px;top:27.00px;width:50.00px;height:18.00px;background:#2b2b2b;border-radius:4px;"></div>
<div class="a" style="left:804.00px;top:27.00px;width:19.00px;height:18.00px;background:#5a5a5a;border-radius:4px;border-top-right-radius:0;border-bottom-right-radius:0"></div>
<svg style="left:807.00px;top:29.00px;" width="14" height="14" viewBox="0 0 14 14"><path d="M3 11 L2 8 C1 4 4 1.5 7 1.5 C10 1.5 12.5 4 12 7.5 L9.5 10.5 L8 9.2 L10 7 C10.5 5 9 3.5 7 3.5 C5 3.5 4 5 4.2 7.5 L5 10 Z" fill="none" stroke="#aaa" stroke-width="0.9"/></svg>
<svg style="left:826.00px;top:28.00px;" width="18" height="16" viewBox="0 0 18 16"><path d="M1 10 H14 M3 7 V13 M7 7 V13 M11 7 V13" stroke="#e0e0e0" stroke-width="1"/><rect x="10" y="1.5" width="4" height="4" fill="#e6e6e6"/></svg>
<svg style="left:843.70px;top:33.70px;" width="8.6" height="5.6" viewBox="0 0 8.6 5.6"><path d="M1 1 L4.3 4.6 L7.6 1" fill="none" stroke="#d0d0d0" stroke-width="1.3"/></svg>
<div class="a" style="left:861.00px;top:27.00px;width:50.00px;height:18.00px;background:#2b2b2b;border-radius:4px;opacity:0.8"></div>
<div class="a" style="left:861.00px;top:27.00px;width:18.00px;height:18.00px;background:#5a5a5a;border-radius:4px;border-top-right-radius:0;border-bottom-right-radius:0"></div>
<svg style="left:863.00px;top:29.00px;" width="14" height="14" viewBox="0 0 14 14"><circle cx="7" cy="7" r="5" fill="none" stroke="#bbb" stroke-width="1"/><circle cx="7" cy="7" r="1.8" fill="#ddd"/></svg>
<svg style="left:882.00px;top:29.00px;" width="16" height="14" viewBox="0 0 16 14"><path d="M1 13 C5 13 5 1 8 1 C11 1 11 13 15 13" fill="none" stroke="#777" stroke-width="1"/></svg>
<svg style="left:900.70px;top:33.70px;" width="8.6" height="5.6" viewBox="0 0 8.6 5.6"><path d="M1 1 L4.3 4.6 L7.6 1" fill="none" stroke="#666" stroke-width="1.3"/></svg>
<div class="a" style="left:1330.00px;top:27.00px;width:30.00px;height:18.00px;background:#2b2b2b;border-radius:4px;"></div>
<svg style="left:1331.00px;top:27.00px;" width="20" height="18" viewBox="0 0 20 18"><path d="M6 6 C8 1.8 15 1.8 17 6 C15 10 8 10 6 6 Z" fill="none" stroke="#e6e6e6" stroke-width="1.3"/><circle cx="11.5" cy="5.8" r="2" fill="#e6e6e6"/><path d="M3 8.5 L9.5 11 L7 12.2 L8.8 16 L7.3 16.8 L5.5 13 L3.4 14.8 Z" fill="#e6e6e6"/></svg>
<svg style="left:1349.70px;top:33.70px;" width="8.6" height="5.6" viewBox="0 0 8.6 5.6"><path d="M1 1 L4.3 4.6 L7.6 1" fill="none" stroke="#d0d0d0" stroke-width="1.3"/></svg>
<div class="a" style="left:1367.00px;top:27.00px;width:38.00px;height:18.00px;background:#2b2b2b;border-radius:4px;"></div>
<div class="a" style="left:1367.00px;top:27.00px;width:18.00px;height:18.00px;background:#4772b3;border-radius:4px;border-top-right-radius:0;border-bottom-right-radius:0"></div>
<svg style="left:1368.00px;top:28.00px;" width="16" height="16" viewBox="0 0 16 16"><path d="M2 13 C3 7 7 3 13 3 M9 2.5 L13 2.5 L13 6.5" fill="none" stroke="#fff" stroke-width="1.1"/><circle cx="4" cy="12" r="1.8" fill="none" stroke="#fff" stroke-width="1"/></svg>
<svg style="left:1390.70px;top:33.70px;" width="8.6" height="5.6" viewBox="0 0 8.6 5.6"><path d="M1 1 L4.3 4.6 L7.6 1" fill="none" stroke="#d0d0d0" stroke-width="1.3"/></svg>
<div class="a" style="left:1412.00px;top:27.00px;width:38.00px;height:18.00px;background:#2b2b2b;border-radius:4px;"></div>
<div class="a" style="left:1412.00px;top:27.00px;width:18.00px;height:18.00px;background:#4772b3;border-radius:4px;border-top-right-radius:0;border-bottom-right-radius:0"></div>
<svg style="left:1413.00px;top:28.00px;" width="16" height="16" viewBox="0 0 16 16"><circle cx="9.5" cy="6.5" r="4.5" fill="#fff"/><path d="M4 8 A4.5 4.5 0 1 0 11 12" fill="none" stroke="#fff" stroke-width="1.1"/></svg>
<svg style="left:1435.70px;top:33.70px;" width="8.6" height="5.6" viewBox="0 0 8.6 5.6"><path d="M1 1 L4.3 4.6 L7.6 1" fill="none" stroke="#d0d0d0" stroke-width="1.3"/></svg>
<div class="a" style="left:1457.00px;top:27.00px;width:18.00px;height:18.00px;background:#3a3a36;border-radius:4px;opacity:0.6"></div>
<svg style="left:1459.00px;top:29.00px;" width="14" height="14" viewBox="0 0 14 14"><rect x="1" y="4" width="8" height="8" fill="none" stroke="#666" stroke-width="1"/><rect x="5" y="1" width="8" height="8" fill="none" stroke="#666" stroke-width="1"/></svg>
<div class="a" style="left:1482.00px;top:27.00px;width:95.00px;height:18.00px;background:#2b2b2b;border-radius:4px;"></div>
<div class="a" style="left:1482.00px;top:27.00px;width:18.00px;height:18.00px;background:#545454;border-radius:4px;border-top-right-radius:0;border-bottom-right-radius:0"></div>
<div class="a" style="left:1501.00px;top:27.00px;width:18.00px;height:18.00px;background:#545454;border-radius:0px;"></div>
<div class="a" style="left:1520.00px;top:27.00px;width:18.00px;height:18.00px;background:#4772b3;border-radius:0px;"></div>
<div class="a" style="left:1539.00px;top:27.00px;width:18.00px;height:18.00px;background:#545454;border-radius:0px;"></div>
<svg style="left:1484.00px;top:29.00px;" width="14" height="14" viewBox="0 0 14 14"><circle cx="7" cy="7" r="6" fill="none" stroke="#ddd" stroke-width="1"/><ellipse cx="7" cy="7" rx="2.8" ry="6" fill="none" stroke="#ddd" stroke-width="1"/><path d="M1 5 H13 M1 9 H13" stroke="#ddd" stroke-width="1"/></svg>
<svg style="left:1503.00px;top:29.00px;" width="14" height="14" viewBox="0 0 14 14"><circle cx="7" cy="7" r="6" fill="#bdbdbd"/></svg>
<svg style="left:1522.00px;top:29.00px;" width="14" height="14" viewBox="0 0 14 14"><circle cx="7" cy="7" r="6" fill="#fff"/><path d="M7 1 A6 6 0 0 1 13 7 L7 7 Z M7 7 L1 7 A6 6 0 0 0 7 13 Z" fill="#4772b3"/></svg>
<svg style="left:1541.00px;top:29.00px;" width="14" height="14" viewBox="0 0 14 14"><circle cx="7" cy="7" r="6" fill="none" stroke="#ddd" stroke-width="1"/><path d="M4 4.5 C5 3.5 6 3 7 3" stroke="#ddd" stroke-width="1" fill="none"/></svg>
<svg style="left:1562.70px;top:33.70px;" width="8.6" height="5.6" viewBox="0 0 8.6 5.6"><path d="M1 1 L4.3 4.6 L7.6 1" fill="none" stroke="#d0d0d0" stroke-width="1.3"/></svg>
<div class="a" style="left:40.00px;top:55.00px;width:30.00px;height:19.50px;background:#282828;border-radius:4px;border:1px solid #303030"></div>
<svg style="left:43.00px;top:57.00px;" width="16" height="16" viewBox="0 0 16 16"><circle cx="8" cy="8" r="6.3" fill="none" stroke="#e0e0e0" stroke-width="1.1"/><path d="M4.5 7 C5 5.5 5.8 4.6 7 4.2" stroke="#e0e0e0" stroke-width="1.2" fill="none"/><rect x="8.5" y="4" width="1.8" height="1.8" fill="#e0e0e0"/></svg>
<svg style="left:59.70px;top:62.20px;" width="8.6" height="5.6" viewBox="0 0 8.6 5.6"><path d="M1 1 L4.3 4.6 L7.6 1" fill="none" stroke="#d0d0d0" stroke-width="1.3"/></svg>
<div class="a" style="left:76.00px;top:55.00px;width:90.00px;height:19.50px;background:#282828;border-radius:4px;border:1px solid #303030"></div>
<svg style="left:82.00px;top:58.00px;" width="14" height="14" viewBox="0 0 14 14"><rect x="3.5" y="3.5" width="7" height="7" fill="#e6e6e6"/><path d="M0.6 3.5 V0.6 H3.5 M10.5 0.6 H13.4 V3.5 M13.4 10.5 V13.4 H10.5 M3.5 13.4 H0.6 V10.5" fill="none" stroke="#e6e6e6" stroke-width="1.1"/></svg>
<div class="t" style="left:102.00px;top:60.41px;font-size:11.8px;color:#e6e6e6;">Object</div>
<svg style="left:155.70px;top:62.70px;" width="8.6" height="5.6" viewBox="0 0 8.6 5.6"><path d="M1 1 L4.3 4.6 L7.6 1" fill="none" stroke="#d0d0d0" stroke-width="1.3"/></svg>
<div class="t" style="left:179.00px;top:60.41px;font-size:11.8px;color:#e6e6e6;">View</div>
<div class="t" style="left:220.00px;top:60.41px;font-size:11.8px;color:#e6e6e6;">Select</div>
<div class="t" style="left:267.00px;top:60.41px;font-size:11.8px;color:#e6e6e6;">Add</div>
<div class="t" style="left:304.00px;top:60.41px;font-size:11.8px;color:#e6e6e6;">Node</div>
<div class="a" style="left:346.00px;top:58.50px;width:12.50px;height:12.50px;background:#4772b3;border-radius:2.5px;"></div>
<svg style="left:346.00px;top:58.50px;" width="13" height="13" viewBox="0 0 13 13"><path d="M3 6.5 L5.5 9 L10 3.5" fill="none" stroke="#fff" stroke-width="1.5"/></svg>
<div class="t" style="left:362.00px;top:60.41px;font-size:11.8px;color:#e6e6e6;">Use Nodes</div>
<div class="a" style="left:656.00px;top:55.00px;width:80.00px;height:19.50px;background:#282828;border-radius:4px;border:1px solid #303030"></div>
<div class="t" style="left:664.00px;top:60.41px;font-size:11.8px;color:#e6e6e6;">Slot 1</div>
<svg style="left:724.70px;top:62.70px;" width="8.6" height="5.6" viewBox="0 0 8.6 5.6"><path d="M1 1 L4.3 4.6 L7.6 1" fill="none" stroke="#d0d0d0" stroke-width="1.3"/></svg>
<div class="a" style="left:741.00px;top:55.00px;width:171.00px;height:19.50px;background:#282828;border-radius:4px;border:1px solid #303030"></div>
<div class="a" style="left:773.00px;top:55.00px;width:79.00px;height:19.50px;background:#1f1f1f;border-radius:0px;"></div>
<svg style="left:745.00px;top:57.00px;" width="15" height="15" viewBox="0 0 15 15"><circle cx="7.5" cy="7.5" r="6.2" fill="#fff"/><path d="M7.5 1.3 A6.2 6.2 0 0 1 13.7 7.5 L7.5 7.5 Z M7.5 7.5 L1.3 7.5 A6.2 6.2 0 0 0 7.5 13.7 Z" fill="#1f1f1f"/><circle cx="7.5" cy="7.5" r="6.2" fill="none" stroke="#fff" stroke-width="0.8"/></svg>
<svg style="left:761.70px;top:62.70px;" width="8.6" height="5.6" viewBox="0 0 8.6 5.6"><path d="M1 1 L4.3 4.6 L7.6 1" fill="none" stroke="#d0d0d0" stroke-width="1.3"/></svg>
<div class="t" style="left:780.00px;top:60.41px;font-size:11.8px;color:#e6e6e6;">M_emi_eyes</div>
<div class="a" style="left:852.00px;top:55.00px;width:60.00px;height:19.50px;background:#545454;border-radius:4px;border-top-left-radius:0;border-bottom-left-radius:0"></div>
<div class="a" style="left:872.00px;top:55.00px;width:1.00px;height:19.50px;background:#3d3d3d;border-radius:0px;"></div>
<div class="a" style="left:892.00px;top:55.00px;width:1.00px;height:19.50px;background:#3d3d3d;border-radius:0px;"></div>
<svg style="left:855.00px;top:57.00px;" width="14" height="15" viewBox="0 0 14 15"><path d="M7 1.5 L12.5 3 V7 C12.5 10.5 10 12.5 7 13.5 C4 12.5 1.5 10.5 1.5 7 V3 Z" fill="none" stroke="#aaa" stroke-width="1"/></svg>
<svg style="left:875.00px;top:57.00px;" width="15" height="15" viewBox="0 0 15 15"><path d="M4 5 H8.5 L11 7.5 V13 H4 Z M2 10 V2 H7.5 L9 3.5" fill="none" stroke="#e0e0e0" stroke-width="1"/></svg>
<svg style="left:897.00px;top:60.00px;" width="10" height="10" viewBox="0 0 10 10"><path d="M1 1 L9 9 M9 1 L1 9" stroke="#e0e0e0" stroke-width="1.2"/></svg>
<svg style="left:921.00px;top:57.00px;" width="15" height="15" viewBox="0 0 15 15"><path d="M1.5 13.5 L6 9 M4 6.5 L8.5 11 L10 8.5 L12.5 6 L9 2.5 L6.5 5 Z" fill="none" stroke="#cfcfcf" stroke-width="1"/></svg>
<div class="a" style="left:1482.00px;top:55.00px;width:51.00px;height:19.50px;background:#282828;border-radius:4px;border:1px solid #303030"></div>
<div class="a" style="left:1482.00px;top:55.00px;width:18.00px;height:19.50px;background:#545454;border-radius:4px;border-top-right-radius:0;border-bottom-right-radius:0"></div>
<svg style="left:1484.00px;top:58.00px;" width="14" height="14" viewBox="0 0 14 14"><path d="M4 12 L2 9 C0.5 5 3 2 6.5 2 C10 2 12.5 5 11.5 8.5 L9 11.5 L7.5 10 L9.5 7.5 C10 5.5 8.5 4 6.5 4 C4.5 4 3 5.5 3.7 8 L5.3 10.5 Z" fill="none" stroke="#aaa" stroke-width="0.9"/></svg>
<svg style="left:1504.00px;top:57.00px;" width="16" height="16" viewBox="0 0 16 16"><rect x="1.5" y="1.5" width="4.5" height="4.5" fill="#e6e6e6"/><path d="M7 3.5 H14 M1 11 H14 M10.5 1 V15 M4 7 V15" stroke="#bdbdbd" stroke-width="1"/></svg>
<svg style="left:1521.70px;top:62.70px;" width="8.6" height="5.6" viewBox="0 0 8.6 5.6"><path d="M1 1 L4.3 4.6 L7.6 1" fill="none" stroke="#d0d0d0" stroke-width="1.3"/></svg>
<div class="a" style="left:1539.00px;top:55.00px;width:39.00px;height:19.50px;background:#282828;border-radius:4px;border:1px solid #303030"></div>
<div class="a" style="left:1539.00px;top:55.00px;width:18.50px;height:19.50px;background:#4772b3;border-radius:4px;border-top-right-radius:0;border-bottom-right-radius:0"></div>
<svg style="left:1540.00px;top:57.00px;" width="16" height="16" viewBox="0 0 16 16"><circle cx="9.5" cy="6.5" r="4.5" fill="#fff"/><path d="M4 8 A4.5 4.5 0 1 0 11 12" fill="none" stroke="#fff" stroke-width="1.1"/></svg>
<svg style="left:1562.70px;top:62.70px;" width="8.6" height="5.6" viewBox="0 0 8.6 5.6"><path d="M1 1 L4.3 4.6 L7.6 1" fill="none" stroke="#d0d0d0" stroke-width="1.3"/></svg>
<svg style="left:31.70px;top:93.00px;" width="6.6" height="10" viewBox="0 0 6.6 10"><path d="M1 1 L5.6 5.0 L1 9" fill="none" stroke="#bbb" stroke-width="1.1"/></svg>
<svg style="left:50.00px;top:91.50px;" width="14" height="14" viewBox="0 0 14 14"><rect x="3.5" y="3.5" width="7" height="7" fill="#e6e6e6"/><path d="M0.6 3.5 V0.6 H3.5 M10.5 0.6 H13.4 V3.5 M13.4 10.5 V13.4 H10.5 M3.5 13.4 H0.6 V10.5" fill="none" stroke="#e6e6e6" stroke-width="1.1"/></svg>
<div class="t" style="left:73.00px;top:93.81px;font-size:11.8px;color:#e6e6e6;">Head</div>
<svg style="left:115.70px;top:93.00px;" width="6.6" height="10" viewBox="0 0 6.6 10"><path d="M1 1 L5.6 5.0 L1 9" fill="none" stroke="#cfcfcf" stroke-width="1.1"/></svg>
<svg style="left:132.00px;top:91.00px;" width="14" height="15" viewBox="0 0 14 15"><path d="M2 2.5 H12 L7 12.5 Z" fill="none" stroke="#e0e0e0" stroke-width="1.2"/><rect x="0.7" y="1.2" width="2.6" height="2.6" fill="#1d1d1d" stroke="#e0e0e0" stroke-width="1"/><rect x="10.7" y="1.2" width="2.6" height="2.6" fill="#1d1d1d" stroke="#e0e0e0" stroke-width="1"/><rect x="5.7" y="11.2" width="2.6" height="2.6" fill="#1d1d1d" stroke="#e0e0e0" stroke-width="1"/></svg>
<div class="t" style="left:155.00px;top:93.81px;font-size:11.8px;color:#e6e6e6;">Cube</div>
<svg style="left:198.70px;top:93.00px;" width="6.6" height="10" viewBox="0 0 6.6 10"><path d="M1 1 L5.6 5.0 L1 9" fill="none" stroke="#cfcfcf" stroke-width="1.1"/></svg>
<svg style="left:214.00px;top:91.00px;" width="15" height="15" viewBox="0 0 15 15"><circle cx="7.5" cy="7.5" r="6.5" fill="#e6e6e6"/><path d="M7.5 1 A6.5 6.5 0 0 1 14 7.5 L7.5 7.5 Z M7.5 7.5 L1 7.5 A6.5 6.5 0 0 0 7.5 14 Z" fill="#1d1d1d"/></svg>
<div class="t" style="left:238.00px;top:93.81px;font-size:11.8px;color:#e6e6e6;">M_emi_eyes</div>
<div class="a" style="left:40.00px;top:977.50px;width:1536.00px;height:3.00px;background:#353535;border-radius:1.5px;"></div>
<div class="a" style="left:1580.20px;top:87.00px;width:2.60px;height:881.00px;background:#353535;border-radius:1.3px;"></div>
<div class="a" style="left:1575.00px;top:90.00px;width:10.00px;height:17.00px;background:#1a1a1a;border-radius:5px;opacity:0.8"></div>
<svg style="left:1578.00px;top:93.00px;" width="7" height="12" viewBox="0 0 7 12"><path d="M5.5 1.5 L1.5 6 L5.5 10.5" fill="none" stroke="#aaa" stroke-width="1.1"/></svg>
<div class="a" style="left:0.00px;top:111.00px;width:24.00px;height:26.00px;background:#1f1f1f;border-radius:13px;opacity:0.7"></div>
<svg style="left:0.00px;top:116.00px;" width="16" height="16" viewBox="0 0 16 16"><circle cx="7" cy="8" r="6" fill="#cfcfcf"/><path d="M7 5 V11 M4 8 H10" stroke="#222" stroke-width="1.1"/></svg>
<svg style="left:22.00px;top:118.00px;" width="6" height="12" viewBox="0 0 6 12"><path d="M4.5 1 L1 6 L4.5 11" fill="none" stroke="#999" stroke-width="1"/></svg>
<div class="a" style="left:0.00px;top:141.00px;width:24.00px;height:28.00px;background:#1f1f1f;border-radius:14px;opacity:0.7"></div>
<svg style="left:0.00px;top:146.00px;" width="14" height="17" viewBox="0 0 14 17"><path d="M2 9 V4 M5 8 V2.5 M8 8 V3 M11 9 V5 M2 8 C1 12 4 15.5 7 15.5 C10.5 15.5 12 13 12 9" stroke="#dedede" stroke-width="2.2" fill="#dedede" stroke-linecap="round"/></svg>
<div class="a" style="left:2.00px;top:414.00px;width:26.00px;height:257.00px;background:#363636;border-radius:0px;"></div>
<div class="a" style="left:2.00px;top:414.00px;width:26.00px;height:1.50px;background:#6a6a6a;border-radius:0px;"></div>
<div class="a" style="left:2.00px;top:446.00px;width:26.00px;height:1.00px;background:#474747;border-radius:0px;"></div>
<div class="a" style="left:2.00px;top:478.00px;width:26.00px;height:1.00px;background:#474747;border-radius:0px;"></div>
<div class="a" style="left:2.00px;top:510.00px;width:26.00px;height:1.00px;background:#474747;border-radius:0px;"></div>
<div class="a" style="left:2.00px;top:542.00px;width:26.00px;height:1.00px;background:#474747;border-radius:0px;"></div>
<div class="a" style="left:2.00px;top:574.00px;width:26.00px;height:1.00px;background:#474747;border-radius:0px;"></div>
<div class="a" style="left:2.00px;top:606.00px;width:26.00px;height:1.00px;background:#474747;border-radius:0px;"></div>
<div class="a" style="left:2.00px;top:638.00px;width:26.00px;height:1.00px;background:#474747;border-radius:0px;"></div>
<div class="a" style="left:2.00px;top:670.00px;width:26.00px;height:1.50px;background:#6a6a6a;border-radius:0px;"></div>
<div class="a" style="left:15.00px;top:414.00px;width:1.00px;height:257.00px;background:#444;border-radius:0px;"></div>
<div class="a" style="left:1596.00px;top:27.00px;width:32.00px;height:18.50px;background:#282828;border-radius:4px;border:1px solid #333"></div>
<svg style="left:1599.00px;top:29.00px;" width="18" height="15" viewBox="0 0 18 15"><rect x="1" y="1" width="5" height="2.5" fill="#e6e6e6"/><path d="M2.5 4 V11.5 H5" fill="none" stroke="#e6e6e6" stroke-width="1"/><rect x="6" y="6" width="7" height="2.5" fill="#e6e6e6"/><rect x="6" y="10" width="7" height="2.5" fill="#e6e6e6"/></svg>
<svg style="left:1617.70px;top:33.70px;" width="8.6" height="5.6" viewBox="0 0 8.6 5.6"><path d="M1 1 L4.3 4.6 L7.6 1" fill="none" stroke="#d0d0d0" stroke-width="1.3"/></svg>
<div class="a" style="left:1633.00px;top:27.00px;width:31.00px;height:18.50px;background:#282828;border-radius:4px;border:1px solid #333"></div>
<svg style="left:1637.00px;top:28.00px;" width="16" height="15" viewBox="0 0 16 15"><rect x="6" y="1.5" width="8" height="8" fill="none" stroke="#e0e0e0" stroke-width="1"/><path d="M7 9 L10 5 L13 9 Z" fill="#e0e0e0"/><path d="M4 4 V11.5 H12 M2 6 V13.5 H10" fill="none" stroke="#e0e0e0" stroke-width="0.9"/></svg>
<svg style="left:1653.70px;top:33.70px;" width="8.6" height="5.6" viewBox="0 0 8.6 5.6"><path d="M1 1 L4.3 4.6 L7.6 1" fill="none" stroke="#d0d0d0" stroke-width="1.3"/></svg>
<div class="a" style="left:1683.00px;top:27.00px;width:118.00px;height:18.50px;background:#1d1d1d;border-radius:4px;border:1px solid #303030"></div>
<svg style="left:1690.00px;top:29.00px;" width="14" height="14" viewBox="0 0 14 14"><circle cx="8" cy="5.5" r="4" fill="none" stroke="#d0d0d0" stroke-width="1.1"/><path d="M5 8.5 L1 12.5" stroke="#d0d0d0" stroke-width="1.1"/></svg>
<div class="t" style="left:1709.00px;top:31.51px;font-size:11.8px;color:#8a8a8a;">Search</div>
<div class="a" style="left:1855.00px;top:27.00px;width:32.00px;height:18.50px;background:#282828;border-radius:4px;border:1px solid #333"></div>
<svg style="left:1858.00px;top:29.00px;" width="15" height="14" viewBox="0 0 15 14"><path d="M1 1.5 H14 L9 7 V13 L6 11.5 V7 Z" fill="none" stroke="#e0e0e0" stroke-width="1.1"/></svg>
<svg style="left:1875.70px;top:33.70px;" width="8.6" height="5.6" viewBox="0 0 8.6 5.6"><path d="M1 1 L4.3 4.6 L7.6 1" fill="none" stroke="#d0d0d0" stroke-width="1.3"/></svg>
<div class="a" style="left:1892.00px;top:27.00px;width:19.00px;height:18.50px;background:#3d3d3d;border-radius:4px;"></div>
<svg style="left:1894.00px;top:28.00px;" width="16" height="16" viewBox="0 0 16 16"><path d="M1.5 5 H11 V14 H1.5 Z M1.5 8 H11" fill="none" stroke="#e0e0e0" stroke-width="1"/><path d="M12 1.5 V6 M9.7 3.75 H14.3" stroke="#e0e0e0" stroke-width="1.1"/></svg>
<div class="a" style="left:1589.00px;top:51.00px;width:322.00px;height:20.00px;background:#282828;border-radius:0px;"></div>
<div class="a" style="left:1589.00px;top:71.00px;width:322.00px;height:20.00px;background:#2b2b2b;border-radius:0px;"></div>
<div class="a" style="left:1589.00px;top:91.00px;width:322.00px;height:20.00px;background:#282828;border-radius:0px;"></div>
<div class="a" style="left:1589.00px;top:111.00px;width:322.00px;height:20.00px;background:#2b2b2b;border-radius:0px;"></div>
<div class="a" style="left:1589.00px;top:131.00px;width:322.00px;height:20.00px;background:#282828;border-radius:0px;"></div>
<div class="a" style="left:1589.00px;top:151.00px;width:322.00px;height:20.00px;background:#2b2b2b;border-radius:0px;"></div>
<div class="a" style="left:1589.00px;top:171.00px;width:322.00px;height:20.00px;background:#282828;border-radius:0px;"></div>
<div class="a" style="left:1617.00px;top:55.00px;width:1.00px;height:135.00px;background:#555;border-radius:0px;"></div>
<div class="a" style="left:1637px;top:75px;width:1px;height:116px;background:repeating-linear-gradient(to bottom,#5c5c5c 0,#5c5c5c 3.2px,transparent 3.2px,transparent 5.8px)"></div>
<svg style="left:1632.90px;top:57.00px;" width="11" height="6.8" viewBox="0 0 11 6.8"><path d="M1 1 L5.5 5.8 L10 1" fill="none" stroke="#d8d8d8" stroke-width="1.05"/></svg>
<svg style="left:1650.00px;top:54.00px;" width="15" height="15" viewBox="0 0 15 15"><circle cx="7.8" cy="2.6" r="1.9" fill="#d88b4a"/><path d="M1.6 6.4 L13.4 5.6 M7.6 4 L6.4 8.6 L4.2 13.4 M7 8.4 L10.4 13.2" fill="none" stroke="#d88b4a" stroke-width="2.6" stroke-linecap="round" stroke-linejoin="round"/></svg>
<div class="t" style="left:1672.40px;top:56.41px;font-size:11.8px;color:#e6e6e6;">Emi Rig</div>
<svg style="left:1873.00px;top:55.00px;" width="16" height="12" viewBox="0 0 16 12"><path d="M1 6 C4 1.5 12 1.5 15 6 C12 10.5 4 10.5 1 6 Z" fill="#e6e6e6"/><circle cx="8" cy="6" r="2.6" fill="#282828"/><circle cx="8" cy="6" r="1.3" fill="#e6e6e6"/></svg>
<svg style="left:1893.00px;top:55.00px;" width="15" height="13" viewBox="0 0 15 13"><path d="M1 3 H4.5 L6 1 H10 L11.5 3 H14 V12 H1 Z" fill="#e6e6e6"/><circle cx="7.5" cy="7.3" r="3.1" fill="#282828"/><circle cx="7.5" cy="7.3" r="1.8" fill="#e6e6e6"/></svg>
<svg style="left:1654.80px;top:75.40px;" width="7.2" height="11.2" viewBox="0 0 7.2 11.2"><path d="M1 1 L6.2 5.6 L1 10.2" fill="none" stroke="#d8d8d8" stroke-width="1.0"/></svg>
<svg style="left:1671.00px;top:74.00px;" width="15" height="14" viewBox="0 0 15 14"><path d="M0.8 1.5 H5.5 C6.5 1.5 6.8 2.5 6 3.5 L3.5 7 C2.5 8.5 3.2 10.5 5.2 10.5 H13 M10.2 7.6 L13.2 10.5 L10.2 13.4" fill="none" stroke="#e0e0e0" stroke-width="1.1" stroke-linejoin="round"/></svg>
<div class="t" style="left:1692.40px;top:76.41px;font-size:11.8px;color:#e6e6e6;">Animation</div>
<svg style="left:1769.00px;top:73.00px;" width="15" height="15" viewBox="0 0 15 15"><path d="M3 1 L5.5 5 H0.5 Z" fill="#ddd"/><path d="M5 6 H9 L6 10 C5.5 11 6 12 7 12 H9" fill="none" stroke="#ddd" stroke-width="1"/><rect x="10" y="10" width="3.5" height="3.5" fill="#ddd"/></svg>
<svg style="left:1789.00px;top:73.00px;" width="16" height="15" viewBox="0 0 16 15"><path d="M1 3 L3 1 L5 3 L3 5 Z M11 3 L13 1 L15 3 L13 5 Z M5 2.2 H11 V3.8 H5 Z" fill="#ddd"/><path d="M8 7 L10.5 9.5 L8 12 L5.5 9.5 Z" fill="none" stroke="#ddd" stroke-width="1"/></svg>
<svg style="left:1670.00px;top:93.00px;" width="15" height="15" viewBox="0 0 15 15"><circle cx="7.5" cy="2" r="1.5" fill="#22b592"/><path d="M1 1 L4 4 L7 3.5 L10.5 6 M7 3.5 L6.5 8 L3 13 M6.5 8 L10 11 L13.5 13" fill="none" stroke="#22b592" stroke-width="1.1"/></svg>
<div class="t" style="left:1692.40px;top:96.41px;font-size:11.8px;color:#e6e6e6;">Pose</div>
<svg style="left:1654.80px;top:115.40px;" width="7.2" height="11.2" viewBox="0 0 7.2 11.2"><path d="M1 1 L6.2 5.6 L1 10.2" fill="none" stroke="#d8d8d8" stroke-width="1.0"/></svg>
<svg style="left:1670.00px;top:113.00px;" width="15" height="15" viewBox="0 0 15 15"><rect x="0.8" y="2" width="3" height="3" fill="none" stroke="#22b592" stroke-width="1.1"/><circle cx="8" cy="2" r="1.5" fill="#22b592"/><path d="M3.8 3.5 H13.5 M8 3.5 L7.5 8 L4.5 13.5 M7.5 8 L10.5 13.5" fill="none" stroke="#22b592" stroke-width="1.1"/></svg>
<div class="t" style="left:1692.40px;top:116.41px;font-size:11.8px;color:#e6e6e6;">rig</div>
<svg style="left:1728.00px;top:113.00px;" width="15" height="14" viewBox="0 0 15 14"><path d="M0.8 1.5 H5.5 C6.5 1.5 6.8 2.5 6 3.5 L3.5 7 C2.5 8.5 3.2 10.5 5.2 10.5 H13 M10.2 7.6 L13.2 10.5 L10.2 13.4" fill="none" stroke="#e0e0e0" stroke-width="1.1" stroke-linejoin="round"/></svg>
<svg style="left:1748.00px;top:114.00px;" width="15" height="14" viewBox="0 0 15 14"><path d="M3 3 L11 11" stroke="#ccc" stroke-width="3.5" stroke-linecap="round"/><circle cx="2.5" cy="4.5" r="2" fill="#ccc"/><circle cx="4.5" cy="2.5" r="2" fill="#ccc"/><circle cx="11.5" cy="9.5" r="2" fill="#ccc"/><circle cx="9.5" cy="11.5" r="2" fill="#ccc"/></svg>
<svg style="left:1768.00px;top:113.00px;" width="14" height="10" viewBox="0 0 14 10"><path d="M2 2 L10 8" stroke="#22b592" stroke-width="2.5" stroke-linecap="round"/><circle cx="2.5" cy="2.5" r="2" fill="#22b592"/></svg>
<div class="t" style="left:1770.00px;top:121.45px;font-size:8.5px;color:#f0f0f0;font-weight:bold;text-shadow:0 0 2px #000">224</div>
<svg style="left:1654.80px;top:135.40px;" width="7.2" height="11.2" viewBox="0 0 7.2 11.2"><path d="M1 1 L6.2 5.6 L1 10.2" fill="none" stroke="#d8d8d8" stroke-width="1.0"/></svg>
<svg style="left:1671.00px;top:133.00px;" width="15" height="15" viewBox="0 0 15 15"><path d="M1.4 1.6 H13.8 L7.6 14.4 Z M5.2 4.4 H10 L7.6 9.4 Z" fill="#d88b4a" fill-rule="evenodd" stroke="#d88b4a" stroke-width="0.6" stroke-linejoin="round"/></svg>
<div class="t" style="left:1692.40px;top:136.41px;font-size:11.8px;color:#e6e6e6;">Body</div>
<svg style="left:1742.00px;top:133.00px;" width="15" height="14" viewBox="0 0 15 14"><path d="M0.8 1.5 H5.5 C6.5 1.5 6.8 2.5 6 3.5 L3.5 7 C2.5 8.5 3.2 10.5 5.2 10.5 H13 M10.2 7.6 L13.2 10.5 L10.2 13.4" fill="none" stroke="#e0e0e0" stroke-width="1.1" stroke-linejoin="round"/></svg>
<svg style="left:1761.60px;top:133.00px;" width="15" height="15" viewBox="0 0 15 15"><path d="M1.8 12.4 C1.2 11.8 1.3 11 1.9 10.4 L6.6 5.9 C6.1 4.2 6.6 2.4 8.2 1.5 C9.3 0.9 10.4 0.9 11.3 1.2 L9.2 3.3 L9.7 5 L11.4 5.5 L13.5 3.4 C13.9 4.4 13.8 5.6 13.2 6.6 C12.3 8.2 10.5 8.8 8.9 8.3 L4.3 12.9 C3.6 13.5 2.5 13.3 1.8 12.4 Z" fill="none" stroke="#5a8ee0" stroke-width="1.1" stroke-linejoin="round"/></svg>
<svg style="left:1782.00px;top:133.00px;" width="15" height="15" viewBox="0 0 15 15"><rect x="0.5" y="4.1000000000000005" width="3.8" height="3.8" fill="#bdbdbd"/><rect x="0.5" y="9.1" width="3.8" height="3.8" fill="#bdbdbd"/><rect x="6" y="1.4000000000000001" width="2.8" height="2.8" fill="none" stroke="#bdbdbd" stroke-width="0.9"/><rect x="5.5" y="6.1000000000000005" width="3.8" height="3.8" fill="#bdbdbd"/><rect x="5.5" y="11.2" width="3.8" height="3.8" fill="#bdbdbd"/><rect x="11" y="4.6000000000000005" width="2.8" height="2.8" fill="none" stroke="#bdbdbd" stroke-width="0.9"/><rect x="11" y="9.6" width="2.8" height="2.8" fill="none" stroke="#bdbdbd" stroke-width="0.9"/></svg>
<svg style="left:1801.80px;top:133.00px;" width="15" height="15" viewBox="0 0 15 15"><path d="M2.6 2.6 H12.4 L7.5 12.6 Z" fill="none" stroke="#22b592" stroke-width="1.1"/><rect x="0.8" y="0.8" width="3.6" height="3.6" fill="#282828" stroke="#22b592" stroke-width="1.1"/><rect x="10.6" y="0.8" width="3.6" height="3.6" fill="#282828" stroke="#22b592" stroke-width="1.1"/><rect x="5.7" y="10.8" width="3.6" height="3.6" fill="#282828" stroke="#22b592" stroke-width="1.1"/></svg>
<svg style="left:1873.00px;top:135.00px;" width="16" height="12" viewBox="0 0 16 12"><path d="M1 6 C4 1.5 12 1.5 15 6 C12 10.5 4 10.5 1 6 Z" fill="#e6e6e6"/><circle cx="8" cy="6" r="2.6" fill="#282828"/><circle cx="8" cy="6" r="1.3" fill="#e6e6e6"/></svg>
<svg style="left:1893.00px;top:135.00px;" width="15" height="13" viewBox="0 0 15 13"><path d="M1 3 H4.5 L6 1 H10 L11.5 3 H14 V12 H1 Z" fill="#e6e6e6"/><circle cx="7.5" cy="7.3" r="3.1" fill="#282828"/><circle cx="7.5" cy="7.3" r="1.8" fill="#e6e6e6"/></svg>
<svg style="left:1654.80px;top:155.40px;" width="7.2" height="11.2" viewBox="0 0 7.2 11.2"><path d="M1 1 L6.2 5.6 L1 10.2" fill="none" stroke="#d8d8d8" stroke-width="1.0"/></svg>
<svg style="left:1671.00px;top:153.00px;" width="15" height="15" viewBox="0 0 15 15"><path d="M1.4 1.6 H13.8 L7.6 14.4 Z M5.2 4.4 H10 L7.6 9.4 Z" fill="#d88b4a" fill-rule="evenodd" stroke="#d88b4a" stroke-width="0.6" stroke-linejoin="round"/></svg>
<div class="t" style="left:1692.40px;top:156.41px;font-size:11.8px;color:#e6e6e6;">Clothes</div>
<svg style="left:1756.30px;top:153.00px;" width="15" height="14" viewBox="0 0 15 14"><path d="M0.8 1.5 H5.5 C6.5 1.5 6.8 2.5 6 3.5 L3.5 7 C2.5 8.5 3.2 10.5 5.2 10.5 H13 M10.2 7.6 L13.2 10.5 L10.2 13.4" fill="none" stroke="#e0e0e0" stroke-width="1.1" stroke-linejoin="round"/></svg>
<svg style="left:1775.80px;top:153.00px;" width="15" height="15" viewBox="0 0 15 15"><path d="M1.8 12.4 C1.2 11.8 1.3 11 1.9 10.4 L6.6 5.9 C6.1 4.2 6.6 2.4 8.2 1.5 C9.3 0.9 10.4 0.9 11.3 1.2 L9.2 3.3 L9.7 5 L11.4 5.5 L13.5 3.4 C13.9 4.4 13.8 5.6 13.2 6.6 C12.3 8.2 10.5 8.8 8.9 8.3 L4.3 12.9 C3.6 13.5 2.5 13.3 1.8 12.4 Z" fill="none" stroke="#5a8ee0" stroke-width="1.1" stroke-linejoin="round"/></svg>
<svg style="left:1795.80px;top:153.00px;" width="15" height="15" viewBox="0 0 15 15"><rect x="0.5" y="4.1000000000000005" width="3.8" height="3.8" fill="#bdbdbd"/><rect x="0.5" y="9.1" width="3.8" height="3.8" fill="#bdbdbd"/><rect x="6" y="1.4000000000000001" width="2.8" height="2.8" fill="none" stroke="#bdbdbd" stroke-width="0.9"/><rect x="5.5" y="6.1000000000000005" width="3.8" height="3.8" fill="#bdbdbd"/><rect x="5.5" y="11.2" width="3.8" height="3.8" fill="#bdbdbd"/><rect x="11" y="4.6000000000000005" width="2.8" height="2.8" fill="none" stroke="#bdbdbd" stroke-width="0.9"/><rect x="11" y="9.6" width="2.8" height="2.8" fill="none" stroke="#bdbdbd" stroke-width="0.9"/></svg>
<svg style="left:1816.00px;top:153.00px;" width="15" height="15" viewBox="0 0 15 15"><path d="M2.6 2.6 H12.4 L7.5 12.6 Z" fill="none" stroke="#22b592" stroke-width="1.1"/><rect x="0.8" y="0.8" width="3.6" height="3.6" fill="#282828" stroke="#22b592" stroke-width="1.1"/><rect x="10.6" y="0.8" width="3.6" height="3.6" fill="#282828" stroke="#22b592" stroke-width="1.1"/><rect x="5.7" y="10.8" width="3.6" height="3.6" fill="#282828" stroke="#22b592" stroke-width="1.1"/></svg>
<svg style="left:1873.00px;top:155.00px;" width="16" height="12" viewBox="0 0 16 12"><path d="M1 6 C4 1.5 12 1.5 15 6 C12 10.5 4 10.5 1 6 Z" fill="#e6e6e6"/><circle cx="8" cy="6" r="2.6" fill="#282828"/><circle cx="8" cy="6" r="1.3" fill="#e6e6e6"/></svg>
<svg style="left:1893.00px;top:155.00px;" width="15" height="13" viewBox="0 0 15 13"><path d="M1 3 H4.5 L6 1 H10 L11.5 3 H14 V12 H1 Z" fill="#e6e6e6"/><circle cx="7.5" cy="7.3" r="3.1" fill="#282828"/><circle cx="7.5" cy="7.3" r="1.8" fill="#e6e6e6"/></svg>
<svg style="left:1654.80px;top:175.40px;" width="7.2" height="11.2" viewBox="0 0 7.2 11.2"><path d="M1 1 L6.2 5.6 L1 10.2" fill="none" stroke="#d8d8d8" stroke-width="1.0"/></svg>
<svg style="left:1671.00px;top:173.00px;" width="15" height="15" viewBox="0 0 15 15"><path d="M1.4 1.6 H13.8 L7.6 14.4 Z M5.2 4.4 H10 L7.6 9.4 Z" fill="#d88b4a" fill-rule="evenodd" stroke="#d88b4a" stroke-width="0.6" stroke-linejoin="round"/></svg>
<div class="t" style="left:1692.40px;top:176.41px;font-size:11.8px;color:#e6e6e6;">Ears</div>
<svg style="left:1737.70px;top:173.00px;" width="15" height="14" viewBox="0 0 15 14"><path d="M0.8 1.5 H5.5 C6.5 1.5 6.8 2.5 6 3.5 L3.5 7 C2.5 8.5 3.2 10.5 5.2 10.5 H13 M10.2 7.6 L13.2 10.5 L10.2 13.4" fill="none" stroke="#e0e0e0" stroke-width="1.1" stroke-linejoin="round"/></svg>
<svg style="left:1758.00px;top:173.00px;" width="15" height="15" viewBox="0 0 15 15"><path d="M1.8 12.4 C1.2 11.8 1.3 11 1.9 10.4 L6.6 5.9 C6.1 4.2 6.6 2.4 8.2 1.5 C9.3 0.9 10.4 0.9 11.3 1.2 L9.2 3.3 L9.7 5 L11.4 5.5 L13.5 3.4 C13.9 4.4 13.8 5.6 13.2 6.6 C12.3 8.2 10.5 8.8 8.9 8.3 L4.3 12.9 C3.6 13.5 2.5 13.3 1.8 12.4 Z" fill="none" stroke="#5a8ee0" stroke-width="1.1" stroke-linejoin="round"/></svg>
<svg style="left:1777.90px;top:173.00px;" width="15" height="15" viewBox="0 0 15 15"><rect x="0.5" y="4.1000000000000005" width="3.8" height="3.8" fill="#bdbdbd"/><rect x="0.5" y="9.1" width="3.8" height="3.8" fill="#bdbdbd"/><rect x="6" y="1.4000000000000001" width="2.8" height="2.8" fill="none" stroke="#bdbdbd" stroke-width="0.9"/><rect x="5.5" y="6.1000000000000005" width="3.8" height="3.8" fill="#bdbdbd"/><rect x="5.5" y="11.2" width="3.8" height="3.8" fill="#bdbdbd"/><rect x="11" y="4.6000000000000005" width="2.8" height="2.8" fill="none" stroke="#bdbdbd" stroke-width="0.9"/><rect x="11" y="9.6" width="2.8" height="2.8" fill="none" stroke="#bdbdbd" stroke-width="0.9"/></svg>
<svg style="left:1798.00px;top:173.00px;" width="15" height="15" viewBox="0 0 15 15"><path d="M2.6 2.6 H12.4 L7.5 12.6 Z" fill="none" stroke="#22b592" stroke-width="1.1"/><rect x="0.8" y="0.8" width="3.6" height="3.6" fill="#282828" stroke="#22b592" stroke-width="1.1"/><rect x="10.6" y="0.8" width="3.6" height="3.6" fill="#282828" stroke="#22b592" stroke-width="1.1"/><rect x="5.7" y="10.8" width="3.6" height="3.6" fill="#282828" stroke="#22b592" stroke-width="1.1"/></svg>
<svg style="left:1873.00px;top:175.00px;" width="16" height="12" viewBox="0 0 16 12"><path d="M1 6 C4 1.5 12 1.5 15 6 C12 10.5 4 10.5 1 6 Z" fill="#e6e6e6"/><circle cx="8" cy="6" r="2.6" fill="#282828"/><circle cx="8" cy="6" r="1.3" fill="#e6e6e6"/></svg>
<svg style="left:1893.00px;top:175.00px;" width="15" height="13" viewBox="0 0 15 13"><path d="M1 3 H4.5 L6 1 H10 L11.5 3 H14 V12 H1 Z" fill="#e6e6e6"/><circle cx="7.5" cy="7.3" r="3.1" fill="#282828"/><circle cx="7.5" cy="7.3" r="1.8" fill="#e6e6e6"/></svg>
<div class="a" style="left:1913.00px;top:76.00px;width:3.00px;height:56.00px;background:#3d3d3d;border-radius:1.5px;"></div>
<div class="a" style="left:1589.00px;top:219.00px;width:27.00px;height:763.00px;background:#1f1f1f;border-radius:0px;border-bottom-left-radius:5px"></div>
<div class="a" style="left:1597.00px;top:197.00px;width:31.00px;height:18.50px;background:#282828;border-radius:4px;border:1px solid #353535"></div>
<svg style="left:1600.00px;top:199.00px;" width="16" height="15" viewBox="0 0 16 15"><rect x="1" y="1" width="13" height="5.5" rx="2.75" fill="#e6e6e6"/><rect x="1" y="8" width="13" height="5.5" rx="2.75" fill="#e6e6e6"/><circle cx="4" cy="3.75" r="2" fill="#282828"/><circle cx="11" cy="10.75" r="2" fill="#282828"/></svg>
<svg style="left:1616.70px;top:203.70px;" width="8.6" height="5.6" viewBox="0 0 8.6 5.6"><path d="M1 1 L4.3 4.6 L7.6 1" fill="none" stroke="#d0d0d0" stroke-width="1.3"/></svg>
<div class="a" style="left:1695.00px;top:197.00px;width:118.00px;height:18.50px;background:#1d1d1d;border-radius:4px;border:1px solid #353535"></div>
<svg style="left:1700.00px;top:199.00px;" width="14" height="14" viewBox="0 0 14 14"><circle cx="8" cy="5.5" r="4" fill="none" stroke="#d0d0d0" stroke-width="1.1"/><path d="M5 8.5 L1 12.5" stroke="#d0d0d0" stroke-width="1.1"/></svg>
<div class="t" style="left:1721.00px;top:201.41px;font-size:11.8px;color:#8a8a8a;">Search</div>
<div class="a" style="left:1892.00px;top:197.00px;width:19.00px;height:18.50px;background:#303030;border-radius:4px;border:1px solid #3a3a3a"></div>
<svg style="left:1897.20px;top:203.70px;" width="8.6" height="5.6" viewBox="0 0 8.6 5.6"><path d="M1 1 L4.3 4.6 L7.6 1" fill="none" stroke="#d0d0d0" stroke-width="1.3"/></svg>
<div class="a" style="left:1589.00px;top:219.00px;width:27.00px;height:37.00px;background:#1f1f1f;border-radius:0px;"></div>
<div class="a" style="left:1592.00px;top:258.00px;width:24.00px;height:1.00px;background:#2a2a2a;border-radius:0px;"></div>
<div class="a" style="left:1592.00px;top:404.00px;width:24.00px;height:1.00px;background:#2a2a2a;border-radius:0px;"></div>
<div class="a" style="left:1590.00px;top:412.00px;width:26.00px;height:25.50px;background:#303030;border-radius:4px;border-top-right-radius:0;border-bottom-right-radius:0"></div>
<div class="a" style="left:1592.00px;top:606.00px;width:24.00px;height:1.00px;background:#2a2a2a;border-radius:0px;"></div>
<svg style="left:1595.00px;top:234.00px;" width="16" height="15" viewBox="0 0 16 15"><path d="M4 1 V8" stroke="#ddd" stroke-width="1.1"/><ellipse cx="4" cy="11" rx="2.2" ry="2.5" fill="#ddd"/><path d="M11 4 V13.5" stroke="#ddd" stroke-width="2"/><path d="M8.5 1 V4 C8.5 5.5 13.5 5.5 13.5 4 V1" fill="none" stroke="#ddd" stroke-width="1.3"/></svg>
<svg style="left:1595.00px;top:269.00px;" width="16" height="15" viewBox="0 0 16 15"><path d="M3 4 V2 H7 V4" fill="none" stroke="#ddd" stroke-width="1.1"/><rect x="1.2" y="4" width="13.5" height="9.5" rx="1" fill="none" stroke="#ddd" stroke-width="1.3"/><path d="M3 7 H9 M3 9.5 H9 M3 12 H9" stroke="#ddd" stroke-width="1"/><circle cx="11.5" cy="6.5" r="1" fill="#ddd"/></svg>
<svg style="left:1595.00px;top:298.00px;" width="16" height="15" viewBox="0 0 16 15"><path d="M1 1 H15 V5 H13 V14 H3 V5 H1 Z" fill="#ddd"/><path d="M4 13 L7 8 L9 11 L10 9.5 L12 13 Z" fill="#1f1f1f"/><rect x="3.5" y="5" width="9" height="1" fill="#1f1f1f"/></svg>
<svg style="left:1595.00px;top:325.00px;" width="16" height="16" viewBox="0 0 16 16"><rect x="5" y="1.5" width="9.5" height="9.5" fill="none" stroke="#ddd" stroke-width="1.1"/><path d="M6 10 L9 5.5 L12 10 Z" fill="#ddd"/><path d="M3.5 3.5 V12.5 H12 M1.5 5.5 V14.5 H10" fill="none" stroke="#ddd" stroke-width="0.9"/></svg>
<svg style="left:1595.00px;top:352.00px;" width="16" height="16" viewBox="0 0 16 16"><path d="M2 12 L5 3 L7.5 12 Z" fill="#ddd"/><circle cx="12" cy="3.5" r="1.6" fill="#ddd"/><circle cx="10.5" cy="11" r="3.2" fill="none" stroke="#ddd" stroke-width="1.1"/></svg>
<svg style="left:1595.00px;top:381.00px;" width="16" height="16" viewBox="0 0 16 16"><circle cx="8" cy="8" r="6" fill="none" stroke="#c24c55" stroke-width="1.4"/><path d="M4 5 C6 4 7 6 6 8 C5 10 8 11 8 13 M10 3.5 C9 5.5 11 6.5 13 6.5" fill="none" stroke="#c24c55" stroke-width="1.3"/><path d="M1.5 13 L4 11 M14.5 3 L12 5" stroke="#c24c55" stroke-width="1"/></svg>
<svg style="left:1596.00px;top:418.00px;" width="14" height="14" viewBox="0 0 14 14"><rect x="3.5" y="3.5" width="7" height="7" fill="#e59a50"/><path d="M0.6 3.5 V0.6 H3.5 M10.5 0.6 H13.4 V3.5 M13.4 10.5 V13.4 H10.5 M3.5 13.4 H0.6 V10.5" fill="none" stroke="#e59a50" stroke-width="1.1"/></svg>
<svg style="left:1596.00px;top:446.00px;" width="14" height="14" viewBox="0 0 14 14"><path d="M1.5 12.5 L7 7 M7.5 6.5 C6.5 4 8.5 1.5 11.5 2 L9.5 4 L10 5 L11 5.5 L13 3.5 C13.5 6.5 11 8.5 8.5 7.5" fill="none" stroke="#5a8ee0" stroke-width="2" stroke-linecap="round"/></svg>
<svg style="left:1596.00px;top:474.00px;" width="15" height="15" viewBox="0 0 15 15"><circle cx="3" cy="2.5" r="1.8" fill="#5a8ee0"/><circle cx="12" cy="5" r="1.6" fill="#5a8ee0"/><circle cx="3" cy="12" r="1.6" fill="#5a8ee0"/><circle cx="12" cy="12" r="1.6" fill="#5a8ee0"/><path d="M3 2.5 V12 M3 2.5 L12 5 M3 2.5 L12 12" stroke="#5a8ee0" stroke-width="1"/></svg>
<svg style="left:1596.00px;top:502.00px;" width="15" height="15" viewBox="0 0 15 15"><path d="M11 3 A6 6 0 1 0 12.5 8" fill="none" stroke="#5a8ee0" stroke-width="1.5"/><circle cx="7" cy="8" r="2.6" fill="#5a8ee0"/><circle cx="12.5" cy="2.5" r="1.6" fill="#5a8ee0"/></svg>
<svg style="left:1596.00px;top:529.00px;" width="15" height="15" viewBox="0 0 15 15"><path d="M2 9 C1 5 5 1 10 2 C14 3 14.5 7 12 10 C10 13 4 14 2 9 Z" fill="none" stroke="#5a8ee0" stroke-width="1.3"/><circle cx="6" cy="9" r="2.5" fill="none" stroke="#5a8ee0" stroke-width="1.2"/><circle cx="11" cy="5" r="1.5" fill="#5a8ee0"/></svg>
<svg style="left:1596.00px;top:558.00px;" width="15" height="15" viewBox="0 0 15 15"><path d="M2 2 H13 L7.5 13 Z" fill="none" stroke="#22b592" stroke-width="1.3"/><rect x="0.5" y="0.5" width="3" height="3" fill="#1f1f1f" stroke="#22b592" stroke-width="1"/><rect x="11.5" y="0.5" width="3" height="3" fill="#1f1f1f" stroke="#22b592" stroke-width="1"/><rect x="6" y="11.5" width="3" height="3" fill="#1f1f1f" stroke="#22b592" stroke-width="1"/></svg>
<svg style="left:1596.00px;top:585.00px;" width="15" height="15" viewBox="0 0 15 15"><circle cx="7.5" cy="7.5" r="6.5" fill="#c46a72"/><path d="M7.5 1 A6.5 6.5 0 0 1 14 7.5 L7.5 7.5 Z M7.5 7.5 L1 7.5 A6.5 6.5 0 0 0 7.5 14 Z" fill="#2a1a1c"/></svg>
<svg style="left:1627.00px;top:230.00px;" width="14" height="14" viewBox="0 0 14 14"><rect x="3.5" y="3.5" width="7" height="7" fill="#e6e6e6"/><path d="M0.6 3.5 V0.6 H3.5 M10.5 0.6 H13.4 V3.5 M13.4 10.5 V13.4 H10.5 M3.5 13.4 H0.6 V10.5" fill="none" stroke="#e6e6e6" stroke-width="1.1"/></svg>
<div class="t" style="left:1650.30px;top:232.41px;font-size:11.8px;color:#e6e6e6;">Head</div>
<svg style="left:1895.00px;top:229.00px;" width="15" height="15" viewBox="0 0 15 15"><path d="M1.5 13.5 L6 9 M4 6.5 L8.5 11 L10 8.5 L12.5 6 L9 2.5 L6.5 5 Z" fill="none" stroke="#cfcfcf" stroke-width="1"/></svg>
<div class="a" style="left:1625.00px;top:263.50px;width:286.00px;height:18.50px;background:#1d1d1d;border-radius:4px;border:1px solid #2b2b2b"></div>
<div class="a" style="left:1625.00px;top:263.50px;width:31.00px;height:18.50px;background:#282828;border-radius:4px;border:1px solid #2b2b2b;border-top-right-radius:0;border-bottom-right-radius:0"></div>
<svg style="left:1629.00px;top:266.00px;" width="14" height="14" viewBox="0 0 14 14"><rect x="3.5" y="3.5" width="7" height="7" fill="#e6e6e6"/><path d="M0.6 3.5 V0.6 H3.5 M10.5 0.6 H13.4 V3.5 M13.4 10.5 V13.4 H10.5 M3.5 13.4 H0.6 V10.5" fill="none" stroke="#e6e6e6" stroke-width="1.1"/></svg>
<svg style="left:1644.70px;top:270.20px;" width="8.6" height="5.6" viewBox="0 0 8.6 5.6"><path d="M1 1 L4.3 4.6 L7.6 1" fill="none" stroke="#d0d0d0" stroke-width="1.3"/></svg>
<div class="t" style="left:1663.00px;top:268.41px;font-size:11.8px;color:#e6e6e6;">Head</div>
<div class="a" style="left:1624.30px;top:293.60px;width:287.00px;height:279.40px;background:#3d3d3d;border-radius:5px;"></div>
<svg style="left:1632.00px;top:303.40px;" width="11" height="6.8" viewBox="0 0 11 6.8"><path d="M1 1 L5.5 5.8 L10 1" fill="none" stroke="#d8d8d8" stroke-width="1.05"/></svg>
<div class="t" style="left:1646.80px;top:301.41px;font-size:11.8px;color:#e6e6e6;">Transform</div>
<svg style="left:1895.00px;top:304.00px;" width="10" height="5" viewBox="0 0 10 5"><rect x="0.0" y="0.0" width="1.2" height="1.2" fill="#8a8a8a"/><rect x="0.0" y="2.6" width="1.2" height="1.2" fill="#8a8a8a"/><rect x="2.4" y="0.0" width="1.2" height="1.2" fill="#8a8a8a"/><rect x="2.4" y="2.6" width="1.2" height="1.2" fill="#8a8a8a"/><rect x="4.8" y="0.0" width="1.2" height="1.2" fill="#8a8a8a"/><rect x="4.8" y="2.6" width="1.2" height="1.2" fill="#8a8a8a"/><rect x="7.199999999999999" y="0.0" width="1.2" height="1.2" fill="#8a8a8a"/><rect x="7.199999999999999" y="2.6" width="1.2" height="1.2" fill="#8a8a8a"/></svg>
<div class="a" style="left:1738.3px;top:327.3px;width:124.6px;height:17.9px;background:#477a2d;border-radius:4px 4px 0 0"></div>
<div class="t" style="left:1727.20px;top:331.46px;font-size:11.8px;color:#e6e6e6;transform:translateX(-100%);">Location X</div>
<div class="t" style="left:1800.60px;top:331.46px;font-size:11.8px;color:#f0f0f0;transform:translateX(-50%);">0 m</div>
<svg style="left:1867.00px;top:329.75px;" width="14" height="13" viewBox="0 0 14 13"><path d="M2.5 6 V3.5 C2.5 1.2 6.5 1.2 6.5 3.5" fill="none" stroke="#d8d8d8" stroke-width="1"/><rect x="4.5" y="6.5" width="8" height="5.5" fill="none" stroke="#d8d8d8" stroke-width="1"/><rect x="7.6" y="8.6" width="1.8" height="1.5" fill="#d8d8d8"/></svg>
<svg style="left:1888.00px;top:330.25px;" width="12" height="12" viewBox="0 0 12 12"><path d="M6 1 L11 6 L6 11 L1 6 Z" fill="none" stroke="#e0e0e0" stroke-width="1.1"/></svg>
<div class="a" style="left:1738.3px;top:346.2px;width:124.6px;height:19.0px;background:#477a2d;border-radius:0"></div>
<div class="t" style="left:1727.20px;top:350.91px;font-size:11.8px;color:#e6e6e6;transform:translateX(-100%);">Y</div>
<div class="t" style="left:1800.60px;top:350.91px;font-size:11.8px;color:#f0f0f0;transform:translateX(-50%);">0 m</div>
<svg style="left:1867.00px;top:349.20px;" width="14" height="13" viewBox="0 0 14 13"><path d="M2.5 6 V3.5 C2.5 1.2 6.5 1.2 6.5 3.5" fill="none" stroke="#d8d8d8" stroke-width="1"/><rect x="4.5" y="6.5" width="8" height="5.5" fill="none" stroke="#d8d8d8" stroke-width="1"/><rect x="7.6" y="8.6" width="1.8" height="1.5" fill="#d8d8d8"/></svg>
<svg style="left:1888.00px;top:349.70px;" width="12" height="12" viewBox="0 0 12 12"><path d="M6 1 L11 6 L6 11 L1 6 Z" fill="none" stroke="#e0e0e0" stroke-width="1.1"/></svg>
<div class="a" style="left:1738.3px;top:366.2px;width:124.6px;height:18.7px;background:#477a2d;border-radius:0 0 4px 4px"></div>
<div class="t" style="left:1727.20px;top:370.76px;font-size:11.8px;color:#e6e6e6;transform:translateX(-100%);">Z</div>
<div class="t" style="left:1800.60px;top:370.76px;font-size:11.8px;color:#f0f0f0;transform:translateX(-50%);">0 m</div>
<svg style="left:1867.00px;top:369.05px;" width="14" height="13" viewBox="0 0 14 13"><path d="M2.5 6 V3.5 C2.5 1.2 6.5 1.2 6.5 3.5" fill="none" stroke="#d8d8d8" stroke-width="1"/><rect x="4.5" y="6.5" width="8" height="5.5" fill="none" stroke="#d8d8d8" stroke-width="1"/><rect x="7.6" y="8.6" width="1.8" height="1.5" fill="#d8d8d8"/></svg>
<svg style="left:1888.00px;top:369.55px;" width="12" height="12" viewBox="0 0 12 12"><path d="M6 1 L11 6 L6 11 L1 6 Z" fill="none" stroke="#e0e0e0" stroke-width="1.1"/></svg>
<div class="a" style="left:1738.3px;top:392.7px;width:124.6px;height:17.6px;background:#477a2d;border-radius:4px 4px 0 0"></div>
<div class="t" style="left:1727.20px;top:396.71px;font-size:11.8px;color:#e6e6e6;transform:translateX(-100%);">Rotation X</div>
<div class="t" style="left:1800.60px;top:396.71px;font-size:11.8px;color:#f0f0f0;transform:translateX(-50%);">0°</div>
<svg style="left:1867.00px;top:395.00px;" width="14" height="13" viewBox="0 0 14 13"><path d="M2.5 6 V3.5 C2.5 1.2 6.5 1.2 6.5 3.5" fill="none" stroke="#d8d8d8" stroke-width="1"/><rect x="4.5" y="6.5" width="8" height="5.5" fill="none" stroke="#d8d8d8" stroke-width="1"/><rect x="7.6" y="8.6" width="1.8" height="1.5" fill="#d8d8d8"/></svg>
<svg style="left:1888.00px;top:395.50px;" width="12" height="12" viewBox="0 0 12 12"><path d="M6 1 L11 6 L6 11 L1 6 Z" fill="none" stroke="#e0e0e0" stroke-width="1.1"/></svg>
<div class="a" style="left:1738.3px;top:411.3px;width:124.6px;height:19.0px;background:#477a2d;border-radius:0"></div>
<div class="t" style="left:1727.20px;top:416.01px;font-size:11.8px;color:#e6e6e6;transform:translateX(-100%);">Y</div>
<div class="t" style="left:1800.60px;top:416.01px;font-size:11.8px;color:#f0f0f0;transform:translateX(-50%);">0°</div>
<svg style="left:1867.00px;top:414.30px;" width="14" height="13" viewBox="0 0 14 13"><path d="M2.5 6 V3.5 C2.5 1.2 6.5 1.2 6.5 3.5" fill="none" stroke="#d8d8d8" stroke-width="1"/><rect x="4.5" y="6.5" width="8" height="5.5" fill="none" stroke="#d8d8d8" stroke-width="1"/><rect x="7.6" y="8.6" width="1.8" height="1.5" fill="#d8d8d8"/></svg>
<svg style="left:1888.00px;top:414.80px;" width="12" height="12" viewBox="0 0 12 12"><path d="M6 1 L11 6 L6 11 L1 6 Z" fill="none" stroke="#e0e0e0" stroke-width="1.1"/></svg>
<div class="a" style="left:1738.3px;top:431.3px;width:124.6px;height:18.5px;background:#477a2d;border-radius:0 0 4px 4px"></div>
<div class="t" style="left:1727.20px;top:435.76px;font-size:11.8px;color:#e6e6e6;transform:translateX(-100%);">Z</div>
<div class="t" style="left:1800.60px;top:435.76px;font-size:11.8px;color:#f0f0f0;transform:translateX(-50%);">0°</div>
<svg style="left:1867.00px;top:434.05px;" width="14" height="13" viewBox="0 0 14 13"><path d="M2.5 6 V3.5 C2.5 1.2 6.5 1.2 6.5 3.5" fill="none" stroke="#d8d8d8" stroke-width="1"/><rect x="4.5" y="6.5" width="8" height="5.5" fill="none" stroke="#d8d8d8" stroke-width="1"/><rect x="7.6" y="8.6" width="1.8" height="1.5" fill="#d8d8d8"/></svg>
<svg style="left:1888.00px;top:434.55px;" width="12" height="12" viewBox="0 0 12 12"><path d="M6 1 L11 6 L6 11 L1 6 Z" fill="none" stroke="#e0e0e0" stroke-width="1.1"/></svg>
<div class="a" style="left:1738.30px;top:457.00px;width:124.60px;height:18.00px;background:#282828;border-radius:4px;"></div>
<div class="t" style="left:1727.20px;top:461.21px;font-size:11.8px;color:#e6e6e6;transform:translateX(-100%);">Mode</div>
<div class="t" style="left:1745.00px;top:461.21px;font-size:11.8px;color:#e6e6e6;">XYZ Euler</div>
<svg style="left:1851.70px;top:463.20px;" width="8.6" height="5.6" viewBox="0 0 8.6 5.6"><path d="M1 1 L4.3 4.6 L7.6 1" fill="none" stroke="#d0d0d0" stroke-width="1.3"/></svg>
<div class="a" style="left:1892.50px;top:464.00px;width:3.00px;height:3.00px;background:#ddd;border-radius:1.5px;"></div>
<div class="a" style="left:1738.3px;top:482.2px;width:124.6px;height:18.2px;background:#477a2d;border-radius:4px 4px 0 0"></div>
<div class="t" style="left:1727.20px;top:486.51px;font-size:11.8px;color:#e6e6e6;transform:translateX(-100%);">Scale X</div>
<div class="t" style="left:1800.60px;top:486.51px;font-size:11.8px;color:#f0f0f0;transform:translateX(-50%);">1.000</div>
<svg style="left:1867.00px;top:484.80px;" width="14" height="13" viewBox="0 0 14 13"><path d="M2.5 6 V3.5 C2.5 1.2 6.5 1.2 6.5 3.5" fill="none" stroke="#d8d8d8" stroke-width="1"/><rect x="4.5" y="6.5" width="8" height="5.5" fill="none" stroke="#d8d8d8" stroke-width="1"/><rect x="7.6" y="8.6" width="1.8" height="1.5" fill="#d8d8d8"/></svg>
<svg style="left:1888.00px;top:485.30px;" width="12" height="12" viewBox="0 0 12 12"><path d="M6 1 L11 6 L6 11 L1 6 Z" fill="none" stroke="#e0e0e0" stroke-width="1.1"/></svg>
<div class="a" style="left:1738.3px;top:501.4px;width:124.6px;height:19.0px;background:#477a2d;border-radius:0"></div>
<div class="t" style="left:1727.20px;top:506.11px;font-size:11.8px;color:#e6e6e6;transform:translateX(-100%);">Y</div>
<div class="t" style="left:1800.60px;top:506.11px;font-size:11.8px;color:#f0f0f0;transform:translateX(-50%);">1.000</div>
<svg style="left:1867.00px;top:504.40px;" width="14" height="13" viewBox="0 0 14 13"><path d="M2.5 6 V3.5 C2.5 1.2 6.5 1.2 6.5 3.5" fill="none" stroke="#d8d8d8" stroke-width="1"/><rect x="4.5" y="6.5" width="8" height="5.5" fill="none" stroke="#d8d8d8" stroke-width="1"/><rect x="7.6" y="8.6" width="1.8" height="1.5" fill="#d8d8d8"/></svg>
<svg style="left:1888.00px;top:504.90px;" width="12" height="12" viewBox="0 0 12 12"><path d="M6 1 L11 6 L6 11 L1 6 Z" fill="none" stroke="#e0e0e0" stroke-width="1.1"/></svg>
<div class="a" style="left:1738.3px;top:521.4px;width:124.6px;height:18.6px;background:#477a2d;border-radius:0 0 4px 4px"></div>
<div class="t" style="left:1727.20px;top:525.91px;font-size:11.8px;color:#e6e6e6;transform:translateX(-100%);">Z</div>
<div class="t" style="left:1800.60px;top:525.91px;font-size:11.8px;color:#f0f0f0;transform:translateX(-50%);">1.000</div>
<svg style="left:1867.00px;top:524.20px;" width="14" height="13" viewBox="0 0 14 13"><path d="M2.5 6 V3.5 C2.5 1.2 6.5 1.2 6.5 3.5" fill="none" stroke="#d8d8d8" stroke-width="1"/><rect x="4.5" y="6.5" width="8" height="5.5" fill="none" stroke="#d8d8d8" stroke-width="1"/><rect x="7.6" y="8.6" width="1.8" height="1.5" fill="#d8d8d8"/></svg>
<svg style="left:1888.00px;top:524.70px;" width="12" height="12" viewBox="0 0 12 12"><path d="M6 1 L11 6 L6 11 L1 6 Z" fill="none" stroke="#e0e0e0" stroke-width="1.1"/></svg>
<svg style="left:1647.40px;top:556.40px;" width="7.2" height="11.2" viewBox="0 0 7.2 11.2"><path d="M1 1 L6.2 5.6 L1 10.2" fill="none" stroke="#d8d8d8" stroke-width="1.0"/></svg>
<div class="t" style="left:1660.50px;top:557.41px;font-size:11.8px;color:#e6e6e6;">Delta Transform</div>
<div class="a" style="left:1624.10px;top:576.40px;width:287.60px;height:24.60px;background:#3d3d3d;border-radius:5px;"></div>
<svg style="left:1633.70px;top:583.40px;" width="7.2" height="11.2" viewBox="0 0 7.2 11.2"><path d="M1 1 L6.2 5.6 L1 10.2" fill="none" stroke="#d8d8d8" stroke-width="1.0"/></svg>
<div class="t" style="left:1646.20px;top:584.41px;font-size:11.8px;color:#e6e6e6;">Relations</div>
<svg style="left:1895.00px;top:587.00px;" width="10" height="5" viewBox="0 0 10 5"><rect x="0.0" y="0.0" width="1.2" height="1.2" fill="#8a8a8a"/><rect x="0.0" y="2.6" width="1.2" height="1.2" fill="#8a8a8a"/><rect x="2.4" y="0.0" width="1.2" height="1.2" fill="#8a8a8a"/><rect x="2.4" y="2.6" width="1.2" height="1.2" fill="#8a8a8a"/><rect x="4.8" y="0.0" width="1.2" height="1.2" fill="#8a8a8a"/><rect x="4.8" y="2.6" width="1.2" height="1.2" fill="#8a8a8a"/><rect x="7.199999999999999" y="0.0" width="1.2" height="1.2" fill="#8a8a8a"/><rect x="7.199999999999999" y="2.6" width="1.2" height="1.2" fill="#8a8a8a"/></svg>
<div class="a" style="left:1624.10px;top:603.40px;width:287.60px;height:24.60px;background:#3d3d3d;border-radius:5px;"></div>
<svg style="left:1633.70px;top:610.40px;" width="7.2" height="11.2" viewBox="0 0 7.2 11.2"><path d="M1 1 L6.2 5.6 L1 10.2" fill="none" stroke="#d8d8d8" stroke-width="1.0"/></svg>
<div class="t" style="left:1646.20px;top:611.41px;font-size:11.8px;color:#e6e6e6;">Collections</div>
<svg style="left:1895.00px;top:614.00px;" width="10" height="5" viewBox="0 0 10 5"><rect x="0.0" y="0.0" width="1.2" height="1.2" fill="#8a8a8a"/><rect x="0.0" y="2.6" width="1.2" height="1.2" fill="#8a8a8a"/><rect x="2.4" y="0.0" width="1.2" height="1.2" fill="#8a8a8a"/><rect x="2.4" y="2.6" width="1.2" height="1.2" fill="#8a8a8a"/><rect x="4.8" y="0.0" width="1.2" height="1.2" fill="#8a8a8a"/><rect x="4.8" y="2.6" width="1.2" height="1.2" fill="#8a8a8a"/><rect x="7.199999999999999" y="0.0" width="1.2" height="1.2" fill="#8a8a8a"/><rect x="7.199999999999999" y="2.6" width="1.2" height="1.2" fill="#8a8a8a"/></svg>
<div class="a" style="left:1624.10px;top:630.40px;width:287.60px;height:24.60px;background:#3d3d3d;border-radius:5px;"></div>
<svg style="left:1633.70px;top:637.40px;" width="7.2" height="11.2" viewBox="0 0 7.2 11.2"><path d="M1 1 L6.2 5.6 L1 10.2" fill="none" stroke="#d8d8d8" stroke-width="1.0"/></svg>
<div class="t" style="left:1646.20px;top:638.41px;font-size:11.8px;color:#e6e6e6;">Instancing</div>
<svg style="left:1895.00px;top:641.00px;" width="10" height="5" viewBox="0 0 10 5"><rect x="0.0" y="0.0" width="1.2" height="1.2" fill="#8a8a8a"/><rect x="0.0" y="2.6" width="1.2" height="1.2" fill="#8a8a8a"/><rect x="2.4" y="0.0" width="1.2" height="1.2" fill="#8a8a8a"/><rect x="2.4" y="2.6" width="1.2" height="1.2" fill="#8a8a8a"/><rect x="4.8" y="0.0" width="1.2" height="1.2" fill="#8a8a8a"/><rect x="4.8" y="2.6" width="1.2" height="1.2" fill="#8a8a8a"/><rect x="7.199999999999999" y="0.0" width="1.2" height="1.2" fill="#8a8a8a"/><rect x="7.199999999999999" y="2.6" width="1.2" height="1.2" fill="#8a8a8a"/></svg>
<div class="a" style="left:1624.10px;top:657.40px;width:287.60px;height:24.60px;background:#3d3d3d;border-radius:5px;"></div>
<svg style="left:1633.70px;top:664.40px;" width="7.2" height="11.2" viewBox="0 0 7.2 11.2"><path d="M1 1 L6.2 5.6 L1 10.2" fill="none" stroke="#d8d8d8" stroke-width="1.0"/></svg>
<div class="t" style="left:1646.20px;top:665.41px;font-size:11.8px;color:#e6e6e6;">Motion Paths</div>
<svg style="left:1895.00px;top:668.00px;" width="10" height="5" viewBox="0 0 10 5"><rect x="0.0" y="0.0" width="1.2" height="1.2" fill="#8a8a8a"/><rect x="0.0" y="2.6" width="1.2" height="1.2" fill="#8a8a8a"/><rect x="2.4" y="0.0" width="1.2" height="1.2" fill="#8a8a8a"/><rect x="2.4" y="2.6" width="1.2" height="1.2" fill="#8a8a8a"/><rect x="4.8" y="0.0" width="1.2" height="1.2" fill="#8a8a8a"/><rect x="4.8" y="2.6" width="1.2" height="1.2" fill="#8a8a8a"/><rect x="7.199999999999999" y="0.0" width="1.2" height="1.2" fill="#8a8a8a"/><rect x="7.199999999999999" y="2.6" width="1.2" height="1.2" fill="#8a8a8a"/></svg>
<div class="a" style="left:1624.10px;top:684.40px;width:287.60px;height:24.60px;background:#3d3d3d;border-radius:5px;"></div>
<svg style="left:1633.70px;top:691.40px;" width="7.2" height="11.2" viewBox="0 0 7.2 11.2"><path d="M1 1 L6.2 5.6 L1 10.2" fill="none" stroke="#d8d8d8" stroke-width="1.0"/></svg>
<div class="t" style="left:1646.20px;top:692.41px;font-size:11.8px;color:#e6e6e6;">Shading</div>
<svg style="left:1895.00px;top:695.00px;" width="10" height="5" viewBox="0 0 10 5"><rect x="0.0" y="0.0" width="1.2" height="1.2" fill="#8a8a8a"/><rect x="0.0" y="2.6" width="1.2" height="1.2" fill="#8a8a8a"/><rect x="2.4" y="0.0" width="1.2" height="1.2" fill="#8a8a8a"/><rect x="2.4" y="2.6" width="1.2" height="1.2" fill="#8a8a8a"/><rect x="4.8" y="0.0" width="1.2" height="1.2" fill="#8a8a8a"/><rect x="4.8" y="2.6" width="1.2" height="1.2" fill="#8a8a8a"/><rect x="7.199999999999999" y="0.0" width="1.2" height="1.2" fill="#8a8a8a"/><rect x="7.199999999999999" y="2.6" width="1.2" height="1.2" fill="#8a8a8a"/></svg>
<div class="a" style="left:1624.10px;top:711.40px;width:287.60px;height:24.60px;background:#3d3d3d;border-radius:5px;"></div>
<svg style="left:1633.70px;top:718.40px;" width="7.2" height="11.2" viewBox="0 0 7.2 11.2"><path d="M1 1 L6.2 5.6 L1 10.2" fill="none" stroke="#d8d8d8" stroke-width="1.0"/></svg>
<div class="t" style="left:1646.20px;top:719.41px;font-size:11.8px;color:#e6e6e6;">Visibility</div>
<svg style="left:1895.00px;top:722.00px;" width="10" height="5" viewBox="0 0 10 5"><rect x="0.0" y="0.0" width="1.2" height="1.2" fill="#8a8a8a"/><rect x="0.0" y="2.6" width="1.2" height="1.2" fill="#8a8a8a"/><rect x="2.4" y="0.0" width="1.2" height="1.2" fill="#8a8a8a"/><rect x="2.4" y="2.6" width="1.2" height="1.2" fill="#8a8a8a"/><rect x="4.8" y="0.0" width="1.2" height="1.2" fill="#8a8a8a"/><rect x="4.8" y="2.6" width="1.2" height="1.2" fill="#8a8a8a"/><rect x="7.199999999999999" y="0.0" width="1.2" height="1.2" fill="#8a8a8a"/><rect x="7.199999999999999" y="2.6" width="1.2" height="1.2" fill="#8a8a8a"/></svg>
<div class="a" style="left:1624.10px;top:738.40px;width:287.60px;height:24.60px;background:#3d3d3d;border-radius:5px;"></div>
<svg style="left:1633.70px;top:745.40px;" width="7.2" height="11.2" viewBox="0 0 7.2 11.2"><path d="M1 1 L6.2 5.6 L1 10.2" fill="none" stroke="#d8d8d8" stroke-width="1.0"/></svg>
<div class="t" style="left:1646.20px;top:746.41px;font-size:11.8px;color:#e6e6e6;">Viewport Display</div>
<svg style="left:1895.00px;top:749.00px;" width="10" height="5" viewBox="0 0 10 5"><rect x="0.0" y="0.0" width="1.2" height="1.2" fill="#8a8a8a"/><rect x="0.0" y="2.6" width="1.2" height="1.2" fill="#8a8a8a"/><rect x="2.4" y="0.0" width="1.2" height="1.2" fill="#8a8a8a"/><rect x="2.4" y="2.6" width="1.2" height="1.2" fill="#8a8a8a"/><rect x="4.8" y="0.0" width="1.2" height="1.2" fill="#8a8a8a"/><rect x="4.8" y="2.6" width="1.2" height="1.2" fill="#8a8a8a"/><rect x="7.199999999999999" y="0.0" width="1.2" height="1.2" fill="#8a8a8a"/><rect x="7.199999999999999" y="2.6" width="1.2" height="1.2" fill="#8a8a8a"/></svg>
<div class="a" style="left:1624.10px;top:765.40px;width:287.60px;height:24.60px;background:#3d3d3d;border-radius:5px;"></div>
<svg style="left:1633.70px;top:772.40px;" width="7.2" height="11.2" viewBox="0 0 7.2 11.2"><path d="M1 1 L6.2 5.6 L1 10.2" fill="none" stroke="#d8d8d8" stroke-width="1.0"/></svg>
<div class="t" style="left:1646.20px;top:773.41px;font-size:11.8px;color:#e6e6e6;">Line Art</div>
<svg style="left:1895.00px;top:776.00px;" width="10" height="5" viewBox="0 0 10 5"><rect x="0.0" y="0.0" width="1.2" height="1.2" fill="#8a8a8a"/><rect x="0.0" y="2.6" width="1.2" height="1.2" fill="#8a8a8a"/><rect x="2.4" y="0.0" width="1.2" height="1.2" fill="#8a8a8a"/><rect x="2.4" y="2.6" width="1.2" height="1.2" fill="#8a8a8a"/><rect x="4.8" y="0.0" width="1.2" height="1.2" fill="#8a8a8a"/><rect x="4.8" y="2.6" width="1.2" height="1.2" fill="#8a8a8a"/><rect x="7.199999999999999" y="0.0" width="1.2" height="1.2" fill="#8a8a8a"/><rect x="7.199999999999999" y="2.6" width="1.2" height="1.2" fill="#8a8a8a"/></svg>
<div class="a" style="left:1624.10px;top:792.40px;width:287.60px;height:24.60px;background:#3d3d3d;border-radius:5px;"></div>
<svg style="left:1633.70px;top:799.40px;" width="7.2" height="11.2" viewBox="0 0 7.2 11.2"><path d="M1 1 L6.2 5.6 L1 10.2" fill="none" stroke="#d8d8d8" stroke-width="1.0"/></svg>
<div class="t" style="left:1646.20px;top:800.41px;font-size:11.8px;color:#e6e6e6;">Animation</div>
<svg style="left:1895.00px;top:803.00px;" width="10" height="5" viewBox="0 0 10 5"><rect x="0.0" y="0.0" width="1.2" height="1.2" fill="#8a8a8a"/><rect x="0.0" y="2.6" width="1.2" height="1.2" fill="#8a8a8a"/><rect x="2.4" y="0.0" width="1.2" height="1.2" fill="#8a8a8a"/><rect x="2.4" y="2.6" width="1.2" height="1.2" fill="#8a8a8a"/><rect x="4.8" y="0.0" width="1.2" height="1.2" fill="#8a8a8a"/><rect x="4.8" y="2.6" width="1.2" height="1.2" fill="#8a8a8a"/><rect x="7.199999999999999" y="0.0" width="1.2" height="1.2" fill="#8a8a8a"/><rect x="7.199999999999999" y="2.6" width="1.2" height="1.2" fill="#8a8a8a"/></svg>
<div class="a" style="left:1624.10px;top:819.40px;width:287.60px;height:24.60px;background:#3d3d3d;border-radius:5px;"></div>
<svg style="left:1633.70px;top:826.40px;" width="7.2" height="11.2" viewBox="0 0 7.2 11.2"><path d="M1 1 L6.2 5.6 L1 10.2" fill="none" stroke="#d8d8d8" stroke-width="1.0"/></svg>
<div class="t" style="left:1646.20px;top:827.41px;font-size:11.8px;color:#e6e6e6;">Custom Properties</div>
<svg style="left:1895.00px;top:830.00px;" width="10" height="5" viewBox="0 0 10 5"><rect x="0.0" y="0.0" width="1.2" height="1.2" fill="#8a8a8a"/><rect x="0.0" y="2.6" width="1.2" height="1.2" fill="#8a8a8a"/><rect x="2.4" y="0.0" width="1.2" height="1.2" fill="#8a8a8a"/><rect x="2.4" y="2.6" width="1.2" height="1.2" fill="#8a8a8a"/><rect x="4.8" y="0.0" width="1.2" height="1.2" fill="#8a8a8a"/><rect x="4.8" y="2.6" width="1.2" height="1.2" fill="#8a8a8a"/><rect x="7.199999999999999" y="0.0" width="1.2" height="1.2" fill="#8a8a8a"/><rect x="7.199999999999999" y="2.6" width="1.2" height="1.2" fill="#8a8a8a"/></svg>
</body></html>
